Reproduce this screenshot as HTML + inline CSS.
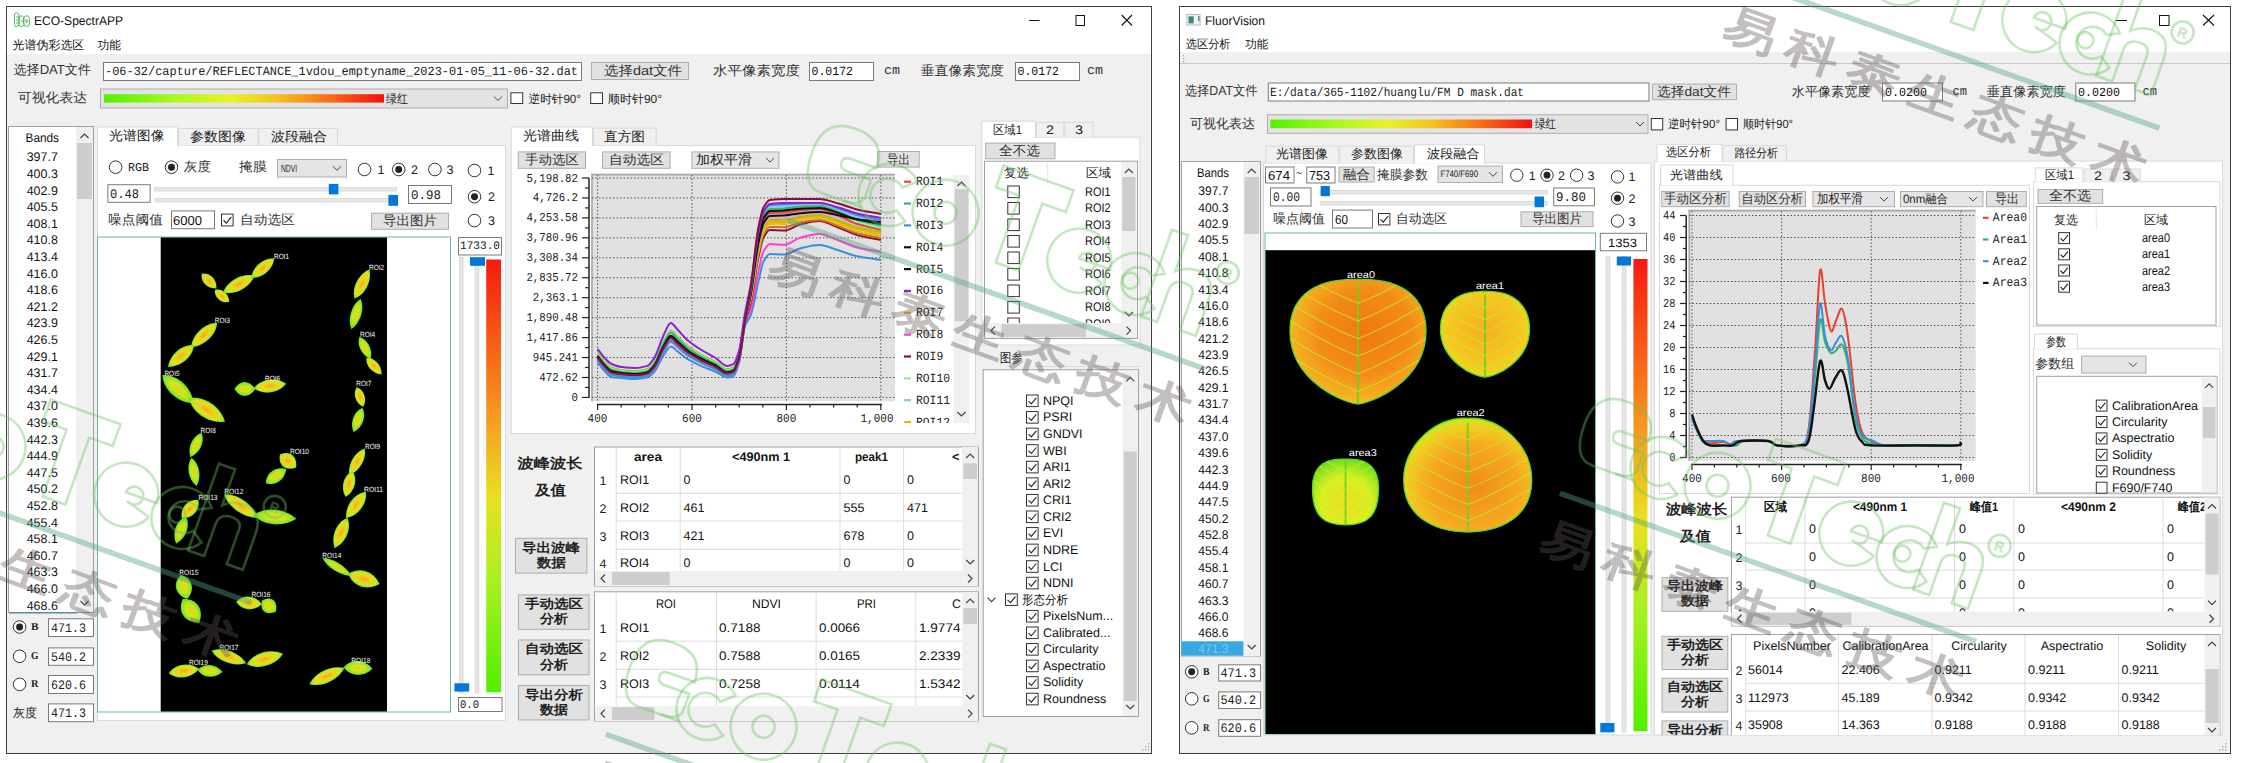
<!DOCTYPE html><html><head><meta charset="utf-8"><style>html,body{margin:0;padding:0;background:#fff;overflow:hidden}svg{display:block}</style></head><body>
<svg width="2245" height="763" viewBox="0 0 2245 763" style="font-family:'Liberation Sans',sans-serif" text-rendering="geometricPrecision">
<defs>
<linearGradient id="gh" x1="0" x2="1" y1="0" y2="0">
 <stop offset="0" stop-color="#55f000"/><stop offset="0.25" stop-color="#a8f820"/><stop offset="0.45" stop-color="#e8f22a"/>
 <stop offset="0.62" stop-color="#f5c020"/><stop offset="0.8" stop-color="#f87018"/><stop offset="1" stop-color="#f01010"/></linearGradient>
<linearGradient id="gv" x1="0" x2="0" y1="0" y2="1">
 <stop offset="0" stop-color="#f51a10"/><stop offset="0.2" stop-color="#f86018"/><stop offset="0.38" stop-color="#f5a020"/>
 <stop offset="0.55" stop-color="#e8e020"/><stop offset="0.75" stop-color="#a8f020"/><stop offset="1" stop-color="#50f000"/></linearGradient>
<radialGradient id="leafa" cx="0.5" cy="0.5" r="0.5">
 <stop offset="0" stop-color="#f2a820"/><stop offset="0.4" stop-color="#f2d020"/><stop offset="0.75" stop-color="#cce820"/><stop offset="1" stop-color="#60dc20"/></radialGradient>
<radialGradient id="leafb" cx="0.5" cy="0.5" r="0.5">
 <stop offset="0" stop-color="#eecc20"/><stop offset="0.45" stop-color="#c8e820"/><stop offset="0.8" stop-color="#90e420"/><stop offset="1" stop-color="#50d820"/></radialGradient>
<radialGradient id="lr0" cx="0.55" cy="0.42" r="0.62">
 <stop offset="0" stop-color="#f07810"/><stop offset="0.55" stop-color="#f28c18"/><stop offset="0.85" stop-color="#f5b020"/><stop offset="1" stop-color="#e8d820"/></radialGradient>
<radialGradient id="lr1" cx="0.5" cy="0.45" r="0.6">
 <stop offset="0" stop-color="#f5b020"/><stop offset="0.7" stop-color="#f5c820"/><stop offset="1" stop-color="#e0e820"/></radialGradient>
<radialGradient id="lr2" cx="0.55" cy="0.6" r="0.6">
 <stop offset="0" stop-color="#f08c18"/><stop offset="0.6" stop-color="#f5a820"/><stop offset="0.9" stop-color="#f0d020"/><stop offset="1" stop-color="#c8e820"/></radialGradient>
<radialGradient id="lr3" cx="0.5" cy="0.65" r="0.65">
 <stop offset="0" stop-color="#f0e020"/><stop offset="0.6" stop-color="#d8f020"/><stop offset="1" stop-color="#70e020"/></radialGradient>
<clipPath id="clipL"><rect x="160.7" y="237.5" width="226.3" height="474"/></clipPath>
<clipPath id="clipC"><rect x="592.5" y="175.5" width="302" height="225.5"/></clipPath>
<clipPath id="clipLeg"><rect x="900" y="170" width="52" height="253"/></clipPath>
<clipPath id="clipT1"><rect x="595" y="447" width="367" height="124"/></clipPath>
<clipPath id="clipRT"><rect x="985" y="183" width="136" height="140"/></clipPath>
<clipPath id="clipR"><rect x="1265.5" y="250.2" width="329.5" height="483.8"/></clipPath>
<clipPath id="clipC2"><rect x="1689" y="210.5" width="286.8" height="250.3"/></clipPath>
<clipPath id="clipT3"><rect x="1731.5" y="497.5" width="473" height="114"/></clipPath>
<clipPath id="clipT4"><rect x="1731.5" y="634.5" width="473" height="100.7"/></clipPath>
<clipPath id="clipRW"><rect x="1654" y="160" width="570" height="575.2"/></clipPath>
</defs>
<rect x="0" y="0" width="2245" height="763" fill="#fff"/>
<rect x="6" y="6" width="1146" height="748" fill="#f0f0f0"/>
<rect x="6" y="6" width="1146" height="48" fill="#fff"/>
<rect x="6.5" y="6.5" width="1145" height="747" fill="none" stroke="#3f3f3f" stroke-width="1"/>
<g fill="none" stroke="#55b860" stroke-width="1">
<rect x="14.5" y="13" width="4.3" height="13.6" rx="2.1"/>
<path d="M16 17 L18.5 17 M16 20 L18.5 20 M16 23 L18.5 23"/>
<rect x="19.2" y="15.8" width="4.3" height="10.8" rx="2.1"/>
<path d="M21 21 L23.5 21"/>
<rect x="24" y="15.8" width="5.4" height="10.8" rx="2.6"/>
<rect x="26" y="19.5" width="1.4" height="3" rx="0.7"/>
</g>
<text x="34" y="20.5" font-size="12.5" font-family="'Liberation Sans',sans-serif" fill="#111" dominant-baseline="central" textLength="89" lengthAdjust="spacingAndGlyphs">ECO-SpectrAPP</text>
<line x1="1029" y1="20.5" x2="1039.5" y2="20.5" stroke="#111" stroke-width="1"/>
<rect x="1076" y="15.5" width="8.5" height="10" fill="none" stroke="#111" stroke-width="1"/>
<line x1="1121.7" y1="15" x2="1132" y2="25.5" stroke="#111" stroke-width="1.1"/>
<line x1="1121.7" y1="25.5" x2="1132" y2="15" stroke="#111" stroke-width="1.1"/>
<text x="12.6" y="44.7" font-size="12" font-family="'Liberation Sans',sans-serif" fill="#111" dominant-baseline="central" textLength="71.7" lengthAdjust="spacingAndGlyphs">光谱伪彩选区</text>
<text x="97.5" y="44.7" font-size="12" font-family="'Liberation Sans',sans-serif" fill="#111" dominant-baseline="central" textLength="23.5" lengthAdjust="spacingAndGlyphs">功能</text>
<text x="13.5" y="69.7" font-size="13.16" font-family="'Liberation Sans',sans-serif" fill="#333" dominant-baseline="central" textLength="77.5" lengthAdjust="spacingAndGlyphs">选择DAT文件</text>
<rect x="103.5" y="62.5" width="478" height="18" fill="#fff" stroke="#7a7a7a" stroke-width="1"/>
<text x="105" y="72" font-size="12.5" font-family="'Liberation Mono',monospace" fill="#222" dominant-baseline="central" textLength="473" lengthAdjust="spacingAndGlyphs">-06-32/capture/REFLECTANCE_1vdou_emptyname_2023-01-05_11-06-32.dat</text>
<rect x="591.5" y="62.5" width="97" height="17" fill="#e1e1e1" stroke="#adadad" stroke-width="1"/>
<text x="604" y="70.7" font-size="13.16" font-family="'Liberation Sans',sans-serif" fill="#333" dominant-baseline="central" textLength="78" lengthAdjust="spacingAndGlyphs">选择dat文件</text>
<text x="713" y="70.7" font-size="13.16" font-family="'Liberation Sans',sans-serif" fill="#333" dominant-baseline="central" textLength="87" lengthAdjust="spacingAndGlyphs">水平像素宽度</text>
<rect x="809.5" y="62.5" width="64" height="18" fill="#fff" stroke="#7a7a7a" stroke-width="1"/>
<text x="811.5" y="72" font-size="12.5" font-family="'Liberation Mono',monospace" fill="#111" dominant-baseline="central" textLength="41.5" lengthAdjust="spacingAndGlyphs">0.0172</text>
<text x="884" y="70.5" font-size="13" font-family="'Liberation Mono',monospace" fill="#333" dominant-baseline="central" textLength="16" lengthAdjust="spacingAndGlyphs">cm</text>
<text x="920.7" y="70.7" font-size="13.16" font-family="'Liberation Sans',sans-serif" fill="#333" dominant-baseline="central" textLength="83.3" lengthAdjust="spacingAndGlyphs">垂直像素宽度</text>
<rect x="1015.5" y="62.5" width="64" height="18" fill="#fff" stroke="#7a7a7a" stroke-width="1"/>
<text x="1017.5" y="72" font-size="12.5" font-family="'Liberation Mono',monospace" fill="#111" dominant-baseline="central" textLength="41.5" lengthAdjust="spacingAndGlyphs">0.0172</text>
<text x="1087" y="70.5" font-size="13" font-family="'Liberation Mono',monospace" fill="#333" dominant-baseline="central" textLength="16" lengthAdjust="spacingAndGlyphs">cm</text>
<text x="17.8" y="97.7" font-size="13.16" font-family="'Liberation Sans',sans-serif" fill="#333" dominant-baseline="central" textLength="69.4" lengthAdjust="spacingAndGlyphs">可视化表达</text>
<rect x="100.5" y="89" width="407" height="19" fill="#e3e3e3" stroke="#adadad" stroke-width="1"/>
<rect x="104" y="94.2" width="280" height="8.4" fill="url(#gh)"/>
<text x="386" y="98.5" font-size="12.5" font-family="'Liberation Sans',sans-serif" fill="#222" dominant-baseline="central" textLength="22" lengthAdjust="spacingAndGlyphs">绿红</text>
<path d="M494 96.5 L498 100.5 L502 96.5" fill="none" stroke="#444" stroke-width="1"/>
<rect x="510.9" y="92.8" width="11.8" height="10.7" fill="#fff" stroke="#333" stroke-width="1"/>
<text x="528.5" y="98.5" font-size="12" font-family="'Liberation Sans',sans-serif" fill="#222" dominant-baseline="central" textLength="52.5" lengthAdjust="spacingAndGlyphs">逆时针90°</text>
<rect x="590.7" y="92.8" width="11.8" height="10.7" fill="#fff" stroke="#333" stroke-width="1"/>
<text x="608" y="98.5" font-size="12" font-family="'Liberation Sans',sans-serif" fill="#222" dominant-baseline="central" textLength="54" lengthAdjust="spacingAndGlyphs">顺时针90°</text>
<rect x="8.5" y="126.5" width="85" height="486" fill="#fff" stroke="#a0a0a0" stroke-width="1"/>
<line x1="9" y1="612.8" x2="77" y2="612.8" stroke="#5a8aa8" stroke-width="1.4"/>
<rect x="76" y="127" width="17" height="485" fill="#f0f0f0"/>
<rect x="77" y="143" width="15" height="56" fill="#cdcdcd"/>
<path d="M80.5 138 L84.5 134 L88.5 138" fill="none" stroke="#444" stroke-width="1.2"/>
<path d="M80.5 601 L84.5 605 L88.5 601" fill="none" stroke="#444" stroke-width="1.2"/>
<text x="25.5" y="138.4" font-size="12.5" font-family="'Liberation Sans',sans-serif" fill="#111" dominant-baseline="central" textLength="33.5" lengthAdjust="spacingAndGlyphs">Bands</text>
<text x="26.7" y="157.3" font-size="12.5" font-family="'Liberation Sans',sans-serif" fill="#111" dominant-baseline="central" textLength="31.1" lengthAdjust="spacingAndGlyphs">397.7</text>
<text x="26.7" y="173.9" font-size="12.5" font-family="'Liberation Sans',sans-serif" fill="#111" dominant-baseline="central" textLength="31.1" lengthAdjust="spacingAndGlyphs">400.3</text>
<text x="26.7" y="190.5" font-size="12.5" font-family="'Liberation Sans',sans-serif" fill="#111" dominant-baseline="central" textLength="31.1" lengthAdjust="spacingAndGlyphs">402.9</text>
<text x="26.7" y="207.1" font-size="12.5" font-family="'Liberation Sans',sans-serif" fill="#111" dominant-baseline="central" textLength="31.1" lengthAdjust="spacingAndGlyphs">405.5</text>
<text x="26.7" y="223.7" font-size="12.5" font-family="'Liberation Sans',sans-serif" fill="#111" dominant-baseline="central" textLength="31.1" lengthAdjust="spacingAndGlyphs">408.1</text>
<text x="26.7" y="240.3" font-size="12.5" font-family="'Liberation Sans',sans-serif" fill="#111" dominant-baseline="central" textLength="31.1" lengthAdjust="spacingAndGlyphs">410.8</text>
<text x="26.7" y="256.9" font-size="12.5" font-family="'Liberation Sans',sans-serif" fill="#111" dominant-baseline="central" textLength="31.1" lengthAdjust="spacingAndGlyphs">413.4</text>
<text x="26.7" y="273.5" font-size="12.5" font-family="'Liberation Sans',sans-serif" fill="#111" dominant-baseline="central" textLength="31.1" lengthAdjust="spacingAndGlyphs">416.0</text>
<text x="26.7" y="290.1" font-size="12.5" font-family="'Liberation Sans',sans-serif" fill="#111" dominant-baseline="central" textLength="31.1" lengthAdjust="spacingAndGlyphs">418.6</text>
<text x="26.7" y="306.7" font-size="12.5" font-family="'Liberation Sans',sans-serif" fill="#111" dominant-baseline="central" textLength="31.1" lengthAdjust="spacingAndGlyphs">421.2</text>
<text x="26.7" y="323.3" font-size="12.5" font-family="'Liberation Sans',sans-serif" fill="#111" dominant-baseline="central" textLength="31.1" lengthAdjust="spacingAndGlyphs">423.9</text>
<text x="26.7" y="339.9" font-size="12.5" font-family="'Liberation Sans',sans-serif" fill="#111" dominant-baseline="central" textLength="31.1" lengthAdjust="spacingAndGlyphs">426.5</text>
<text x="26.7" y="356.5" font-size="12.5" font-family="'Liberation Sans',sans-serif" fill="#111" dominant-baseline="central" textLength="31.1" lengthAdjust="spacingAndGlyphs">429.1</text>
<text x="26.7" y="373.1" font-size="12.5" font-family="'Liberation Sans',sans-serif" fill="#111" dominant-baseline="central" textLength="31.1" lengthAdjust="spacingAndGlyphs">431.7</text>
<text x="26.7" y="389.7" font-size="12.5" font-family="'Liberation Sans',sans-serif" fill="#111" dominant-baseline="central" textLength="31.1" lengthAdjust="spacingAndGlyphs">434.4</text>
<text x="26.7" y="406.3" font-size="12.5" font-family="'Liberation Sans',sans-serif" fill="#111" dominant-baseline="central" textLength="31.1" lengthAdjust="spacingAndGlyphs">437.0</text>
<text x="26.7" y="422.9" font-size="12.5" font-family="'Liberation Sans',sans-serif" fill="#111" dominant-baseline="central" textLength="31.1" lengthAdjust="spacingAndGlyphs">439.6</text>
<text x="26.7" y="439.5" font-size="12.5" font-family="'Liberation Sans',sans-serif" fill="#111" dominant-baseline="central" textLength="31.1" lengthAdjust="spacingAndGlyphs">442.3</text>
<text x="26.7" y="456.1" font-size="12.5" font-family="'Liberation Sans',sans-serif" fill="#111" dominant-baseline="central" textLength="31.1" lengthAdjust="spacingAndGlyphs">444.9</text>
<text x="26.7" y="472.7" font-size="12.5" font-family="'Liberation Sans',sans-serif" fill="#111" dominant-baseline="central" textLength="31.1" lengthAdjust="spacingAndGlyphs">447.5</text>
<text x="26.7" y="489.3" font-size="12.5" font-family="'Liberation Sans',sans-serif" fill="#111" dominant-baseline="central" textLength="31.1" lengthAdjust="spacingAndGlyphs">450.2</text>
<text x="26.7" y="505.9" font-size="12.5" font-family="'Liberation Sans',sans-serif" fill="#111" dominant-baseline="central" textLength="31.1" lengthAdjust="spacingAndGlyphs">452.8</text>
<text x="26.7" y="522.5" font-size="12.5" font-family="'Liberation Sans',sans-serif" fill="#111" dominant-baseline="central" textLength="31.1" lengthAdjust="spacingAndGlyphs">455.4</text>
<text x="26.7" y="539.1" font-size="12.5" font-family="'Liberation Sans',sans-serif" fill="#111" dominant-baseline="central" textLength="31.1" lengthAdjust="spacingAndGlyphs">458.1</text>
<text x="26.7" y="555.7" font-size="12.5" font-family="'Liberation Sans',sans-serif" fill="#111" dominant-baseline="central" textLength="31.1" lengthAdjust="spacingAndGlyphs">460.7</text>
<text x="26.7" y="572.3" font-size="12.5" font-family="'Liberation Sans',sans-serif" fill="#111" dominant-baseline="central" textLength="31.1" lengthAdjust="spacingAndGlyphs">463.3</text>
<text x="26.7" y="588.9" font-size="12.5" font-family="'Liberation Sans',sans-serif" fill="#111" dominant-baseline="central" textLength="31.1" lengthAdjust="spacingAndGlyphs">466.0</text>
<text x="26.7" y="605.5" font-size="12.5" font-family="'Liberation Sans',sans-serif" fill="#111" dominant-baseline="central" textLength="31.1" lengthAdjust="spacingAndGlyphs">468.6</text>
<circle cx="19.6" cy="627" r="6.3" fill="#fff" stroke="#333" stroke-width="1"/>
<circle cx="19.6" cy="627" r="3.47" fill="#222"/>
<text x="31" y="627.5" font-size="10.5" font-family="'Liberation Serif',serif" fill="#222" dominant-baseline="central" font-weight="bold" textLength="7.5" lengthAdjust="spacingAndGlyphs">B</text>
<rect x="48.5" y="618.8" width="45" height="17.7" fill="#fff" stroke="#7a7a7a" stroke-width="1"/>
<text x="51" y="628.15" font-size="13" font-family="'Liberation Mono',monospace" fill="#222" dominant-baseline="central" textLength="35" lengthAdjust="spacingAndGlyphs">471.3</text>
<circle cx="19.6" cy="656.3" r="6.3" fill="#fff" stroke="#333" stroke-width="1"/>
<text x="31" y="656.8" font-size="10.5" font-family="'Liberation Serif',serif" fill="#222" dominant-baseline="central" font-weight="bold" textLength="7.5" lengthAdjust="spacingAndGlyphs">G</text>
<rect x="48.5" y="647.9" width="45" height="17.4" fill="#fff" stroke="#7a7a7a" stroke-width="1"/>
<text x="51" y="657.1" font-size="13" font-family="'Liberation Mono',monospace" fill="#222" dominant-baseline="central" textLength="35" lengthAdjust="spacingAndGlyphs">540.2</text>
<circle cx="19.6" cy="684.4" r="6.3" fill="#fff" stroke="#333" stroke-width="1"/>
<text x="31" y="684.9" font-size="10.5" font-family="'Liberation Serif',serif" fill="#222" dominant-baseline="central" font-weight="bold" textLength="7.5" lengthAdjust="spacingAndGlyphs">R</text>
<rect x="48.5" y="675.5" width="45" height="18" fill="#fff" stroke="#7a7a7a" stroke-width="1"/>
<text x="51" y="685" font-size="13" font-family="'Liberation Mono',monospace" fill="#222" dominant-baseline="central" textLength="35" lengthAdjust="spacingAndGlyphs">620.6</text>
<text x="13" y="712.7" font-size="12.5" font-family="'Liberation Sans',sans-serif" fill="#222" dominant-baseline="central" textLength="24" lengthAdjust="spacingAndGlyphs">灰度</text>
<rect x="48.5" y="703.9" width="45" height="17.8" fill="#fff" stroke="#7a7a7a" stroke-width="1"/>
<text x="51" y="713.3" font-size="13" font-family="'Liberation Mono',monospace" fill="#222" dominant-baseline="central" textLength="35" lengthAdjust="spacingAndGlyphs">471.3</text>
<rect x="97.5" y="145.5" width="408" height="575" fill="#fff" stroke="#d9d9d9" stroke-width="1"/>
<path d="M178.5 145.5 L178.5 128.5 L258 128.5 L258 145.5" fill="#f0f0f0" stroke="#d9d9d9" stroke-width="1"/>
<text x="190" y="136.45" font-size="13.16" font-family="'Liberation Sans',sans-serif" fill="#222" dominant-baseline="central" textLength="56" lengthAdjust="spacingAndGlyphs">参数图像</text>
<path d="M259 145.5 L259 128.5 L337.5 128.5 L337.5 145.5" fill="#f0f0f0" stroke="#d9d9d9" stroke-width="1"/>
<text x="271" y="136.45" font-size="13.16" font-family="'Liberation Sans',sans-serif" fill="#222" dominant-baseline="central" textLength="56" lengthAdjust="spacingAndGlyphs">波段融合</text>
<path d="M97.5 146 L97.5 127 L177.5 127 L177.5 146" fill="#fff" stroke="#d9d9d9" stroke-width="1"/>
<text x="109" y="135.95" font-size="13.16" font-family="'Liberation Sans',sans-serif" fill="#222" dominant-baseline="central" textLength="55.5" lengthAdjust="spacingAndGlyphs">光谱图像</text>
<circle cx="115.6" cy="167.2" r="6.3" fill="#fff" stroke="#333" stroke-width="1"/>
<text x="128" y="167.5" font-size="12" font-family="'Liberation Mono',monospace" fill="#222" dominant-baseline="central" textLength="21" lengthAdjust="spacingAndGlyphs">RGB</text>
<circle cx="171.5" cy="167.2" r="6.3" fill="#fff" stroke="#333" stroke-width="1"/>
<circle cx="171.5" cy="167.2" r="3.47" fill="#222"/>
<text x="184" y="166.7" font-size="13.16" font-family="'Liberation Sans',sans-serif" fill="#333" dominant-baseline="central" textLength="27" lengthAdjust="spacingAndGlyphs">灰度</text>
<text x="239" y="166.5" font-size="13.16" font-family="'Liberation Sans',sans-serif" fill="#333" dominant-baseline="central" textLength="28" lengthAdjust="spacingAndGlyphs">掩膜</text>
<rect x="277.5" y="159.5" width="69" height="17.5" fill="#e5e5e5" stroke="#adadad" stroke-width="1"/>
<text x="281" y="168.75" font-size="10.5" font-family="'Liberation Sans',sans-serif" fill="#222" dominant-baseline="central" textLength="16" lengthAdjust="spacingAndGlyphs">NDVI</text>
<path d="M333 166.25 L337 170.25 L341 166.25" fill="none" stroke="#444" stroke-width="1"/>
<circle cx="364.5" cy="169.5" r="6.3" fill="#fff" stroke="#333" stroke-width="1"/>
<text x="377.5" y="170" font-size="12.5" font-family="'Liberation Sans',sans-serif" fill="#222" dominant-baseline="central">1</text>
<circle cx="398.7" cy="169.5" r="6.3" fill="#fff" stroke="#333" stroke-width="1"/>
<circle cx="398.7" cy="169.5" r="3.47" fill="#222"/>
<text x="411" y="170" font-size="12.5" font-family="'Liberation Sans',sans-serif" fill="#222" dominant-baseline="central">2</text>
<circle cx="434.9" cy="169.5" r="6.3" fill="#fff" stroke="#333" stroke-width="1"/>
<text x="446.6" y="170" font-size="12.5" font-family="'Liberation Sans',sans-serif" fill="#222" dominant-baseline="central">3</text>
<circle cx="474.5" cy="170.5" r="6.3" fill="#fff" stroke="#333" stroke-width="1"/>
<text x="487.5" y="171" font-size="12.5" font-family="'Liberation Sans',sans-serif" fill="#222" dominant-baseline="central">1</text>
<circle cx="474.5" cy="196.7" r="6.3" fill="#fff" stroke="#333" stroke-width="1"/>
<circle cx="474.5" cy="196.7" r="3.47" fill="#222"/>
<text x="488" y="197" font-size="12.5" font-family="'Liberation Sans',sans-serif" fill="#222" dominant-baseline="central">2</text>
<circle cx="474.5" cy="220.6" r="6.3" fill="#fff" stroke="#333" stroke-width="1"/>
<text x="488" y="221" font-size="12.5" font-family="'Liberation Sans',sans-serif" fill="#222" dominant-baseline="central">3</text>
<rect x="107.9" y="184.7" width="42.2" height="17.6" fill="#fff" stroke="#7a7a7a" stroke-width="1"/>
<text x="110" y="194" font-size="13" font-family="'Liberation Mono',monospace" fill="#222" dominant-baseline="central" textLength="29" lengthAdjust="spacingAndGlyphs">0.48</text>
<rect x="154.5" y="187.5" width="242" height="3.5" fill="#e7e7e7" stroke="#dadada" stroke-width="1"/>
<rect x="328.8" y="183.9" width="9.6" height="10.5" fill="#0078d7"/>
<rect x="155.5" y="198.5" width="241" height="3.5" fill="#e7e7e7" stroke="#dadada" stroke-width="1"/>
<rect x="388.4" y="194.9" width="9.6" height="10.9" fill="#0078d7"/>
<rect x="408.5" y="185.5" width="43" height="18" fill="#fff" stroke="#7a7a7a" stroke-width="1"/>
<text x="411" y="195" font-size="13" font-family="'Liberation Mono',monospace" fill="#222" dominant-baseline="central" textLength="30" lengthAdjust="spacingAndGlyphs">0.98</text>
<text x="108" y="219.5" font-size="13.16" font-family="'Liberation Sans',sans-serif" fill="#333" dominant-baseline="central" textLength="55" lengthAdjust="spacingAndGlyphs">噪点阈值</text>
<rect x="171.5" y="210.9" width="43" height="17.8" fill="#fff" stroke="#7a7a7a" stroke-width="1"/>
<text x="173" y="220.3" font-size="13" font-family="'Liberation Sans',sans-serif" fill="#111" dominant-baseline="central" textLength="29" lengthAdjust="spacingAndGlyphs">6000</text>
<rect x="221.5" y="214.1" width="11.6" height="11.8" fill="#fff" stroke="#333" stroke-width="1"/>
<path d="M223.52 220.26 L226.29 223.07 L231.33 216.93" fill="none" stroke="#222" stroke-width="1.1"/>
<text x="240" y="219.5" font-size="13.16" font-family="'Liberation Sans',sans-serif" fill="#333" dominant-baseline="central" textLength="55" lengthAdjust="spacingAndGlyphs">自动选区</text>
<rect x="371.5" y="213.2" width="77" height="16.1" fill="#e1e1e1" stroke="#adadad" stroke-width="1"/>
<text x="383" y="220.7" font-size="13.16" font-family="'Liberation Sans',sans-serif" fill="#333" dominant-baseline="central" textLength="54" lengthAdjust="spacingAndGlyphs">导出图片</text>
<rect x="97.5" y="237" width="353" height="475" fill="#fff" stroke="#66b8a8" stroke-width="1"/>
<rect x="160.7" y="237.5" width="226.3" height="474" fill="#000"/>
<g clip-path="url(#clipL)">
<path transform="translate(209 281) rotate(45)" d="M-10.5 0 C-5.25 -7 4.2 -7.2 10.5 0 C4.2 7.2 -5.25 7 -10.5 0Z" fill="url(#leafa)"/>
<path transform="translate(222 296) rotate(40)" d="M-9.5 0 C-4.75 -6.3 3.8 -6.48 9.5 0 C3.8 6.48 -4.75 6.3 -9.5 0Z" fill="url(#leafa)"/>
<path transform="translate(239 284) rotate(-28)" d="M-18 0 C-9 -8.4 7.2 -8.64 18 0 C7.2 8.64 -9 8.4 -18 0Z" fill="url(#leafa)"/>
<path transform="translate(263 268) rotate(-40)" d="M-15 0 C-7.5 -7.7 6 -7.92 15 0 C6 7.92 -7.5 7.7 -15 0Z" fill="url(#leafa)"/>
<path transform="translate(362 284) rotate(-63)" d="M-16.5 0 C-8.25 -7.7 6.6 -7.92 16.5 0 C6.6 7.92 -8.25 7.7 -16.5 0Z" fill="url(#leafa)"/>
<path transform="translate(356 314) rotate(107)" d="M-16 0 C-8 -7 6.4 -7.2 16 0 C6.4 7.2 -8 7 -16 0Z" fill="url(#leafb)"/>
<path transform="translate(204 335) rotate(137)" d="M-18 0 C-9 -8.4 7.2 -8.64 18 0 C7.2 8.64 -9 8.4 -18 0Z" fill="url(#leafa)"/>
<path transform="translate(181 356) rotate(140)" d="M-17 0 C-8.5 -8.4 6.8 -8.64 17 0 C6.8 8.64 -8.5 8.4 -17 0Z" fill="url(#leafa)"/>
<path transform="translate(365 348) rotate(63)" d="M-12.5 0 C-6.25 -6.3 5 -6.48 12.5 0 C5 6.48 -6.25 6.3 -12.5 0Z" fill="url(#leafb)"/>
<path transform="translate(374 366) rotate(48)" d="M-11.5 0 C-5.75 -6.3 4.6 -6.48 11.5 0 C4.6 6.48 -5.75 6.3 -11.5 0Z" fill="url(#leafa)"/>
<path transform="translate(178 389) rotate(42)" d="M-21 0 C-10.5 -10.5 8.4 -10.8 21 0 C8.4 10.8 -10.5 10.5 -21 0Z" fill="url(#leafb)"/>
<path transform="translate(207 410) rotate(33)" d="M-21.5 0 C-10.75 -10.5 8.6 -10.8 21.5 0 C8.6 10.8 -10.75 10.5 -21.5 0Z" fill="url(#leafa)"/>
<path transform="translate(245 389) rotate(0)" d="M-10.5 0 C-5.25 -9.1 4.2 -9.36 10.5 0 C4.2 9.36 -5.25 9.1 -10.5 0Z" fill="url(#leafb)"/>
<path transform="translate(270 386) rotate(-8)" d="M-16.5 0 C-8.25 -8.4 6.6 -8.64 16.5 0 C6.6 8.64 -8.25 8.4 -16.5 0Z" fill="url(#leafa)"/>
<path transform="translate(360 397) rotate(72)" d="M-10.5 0 C-5.25 -6.3 4.2 -6.48 10.5 0 C4.2 6.48 -5.25 6.3 -10.5 0Z" fill="url(#leafa)"/>
<path transform="translate(358 420) rotate(110)" d="M-13 0 C-6.5 -7 5.2 -7.2 13 0 C5.2 7.2 -6.5 7 -13 0Z" fill="url(#leafb)"/>
<path transform="translate(196 445) rotate(115)" d="M-13.5 0 C-6.75 -7 5.4 -7.2 13.5 0 C5.4 7.2 -6.75 7 -13.5 0Z" fill="url(#leafb)"/>
<path transform="translate(194 472) rotate(80)" d="M-14.5 0 C-7.25 -7 5.8 -7.2 14.5 0 C5.8 7.2 -7.25 7 -14.5 0Z" fill="url(#leafb)"/>
<path transform="translate(288 461) rotate(40)" d="M-10.5 0 C-5.25 -9.8 4.2 -10.08 10.5 0 C4.2 10.08 -5.25 9.8 -10.5 0Z" fill="url(#leafa)"/>
<path transform="translate(276 476) rotate(-35)" d="M-12.5 0 C-6.25 -8.4 5 -8.64 12.5 0 C5 8.64 -6.25 8.4 -12.5 0Z" fill="url(#leafb)"/>
<path transform="translate(357 462) rotate(120)" d="M-15.5 0 C-7.75 -7 6.2 -7.2 15.5 0 C6.2 7.2 -7.75 7 -15.5 0Z" fill="url(#leafa)"/>
<path transform="translate(349 484) rotate(105)" d="M-13.5 0 C-6.75 -7.7 5.4 -7.92 13.5 0 C5.4 7.92 -6.75 7.7 -13.5 0Z" fill="url(#leafa)"/>
<path transform="translate(356 505) rotate(127)" d="M-16.5 0 C-8.25 -8.4 6.6 -8.64 16.5 0 C6.6 8.64 -8.25 8.4 -16.5 0Z" fill="url(#leafa)"/>
<path transform="translate(341 533) rotate(113)" d="M-16.5 0 C-8.25 -8.4 6.6 -8.64 16.5 0 C6.6 8.64 -8.25 8.4 -16.5 0Z" fill="url(#leafa)"/>
<path transform="translate(241 506) rotate(35)" d="M-20.5 0 C-10.25 -8.4 8.2 -8.64 20.5 0 C8.2 8.64 -10.25 8.4 -20.5 0Z" fill="url(#leafa)"/>
<path transform="translate(275 517) rotate(5)" d="M-21.5 0 C-10.75 -9.8 8.6 -10.08 21.5 0 C8.6 10.08 -10.75 9.8 -21.5 0Z" fill="url(#leafb)"/>
<path transform="translate(190 509) rotate(132)" d="M-12.5 0 C-6.25 -8.4 5 -8.64 12.5 0 C5 8.64 -6.25 8.4 -12.5 0Z" fill="url(#leafa)"/>
<path transform="translate(181 530) rotate(110)" d="M-14.5 0 C-7.25 -7.7 5.8 -7.92 14.5 0 C5.8 7.92 -7.25 7.7 -14.5 0Z" fill="url(#leafb)"/>
<path transform="translate(337 567) rotate(32)" d="M-17 0 C-8.5 -5.6 6.8 -5.76 17 0 C6.8 5.76 -8.5 5.6 -17 0Z" fill="url(#leafb)"/>
<path transform="translate(364 579) rotate(18)" d="M-16.5 0 C-8.25 -10.5 6.6 -10.8 16.5 0 C6.6 10.8 -8.25 10.5 -16.5 0Z" fill="url(#leafa)"/>
<path transform="translate(184 587) rotate(75)" d="M-12.5 0 C-6.25 -10.5 5 -10.8 12.5 0 C5 10.8 -6.25 10.5 -12.5 0Z" fill="url(#leafb)"/>
<path transform="translate(191 611) rotate(55)" d="M-14.5 0 C-7.25 -11.9 5.8 -12.24 14.5 0 C5.8 12.24 -7.25 11.9 -14.5 0Z" fill="url(#leafb)"/>
<path transform="translate(249 603) rotate(5)" d="M-13 0 C-6.5 -8.4 5.2 -8.64 13 0 C5.2 8.64 -6.5 8.4 -13 0Z" fill="url(#leafa)"/>
<path transform="translate(269 606) rotate(40)" d="M-9 0 C-4.5 -9.8 3.6 -10.08 9 0 C3.6 10.08 -4.5 9.8 -9 0Z" fill="url(#leafb)"/>
<path transform="translate(229 657) rotate(20)" d="M-18.5 0 C-9.25 -7.7 7.4 -7.92 18.5 0 C7.4 7.92 -9.25 7.7 -18.5 0Z" fill="url(#leafa)"/>
<path transform="translate(265 659) rotate(-16)" d="M-19 0 C-9.5 -9.1 7.6 -9.36 19 0 C7.6 9.36 -9.5 9.1 -19 0Z" fill="url(#leafa)"/>
<path transform="translate(327 676) rotate(-25)" d="M-19.5 0 C-9.75 -8.4 7.8 -8.64 19.5 0 C7.8 8.64 -9.75 8.4 -19.5 0Z" fill="url(#leafa)"/>
<path transform="translate(358 668) rotate(3)" d="M-14.5 0 C-7.25 -9.1 5.8 -9.36 14.5 0 C5.8 9.36 -7.25 9.1 -14.5 0Z" fill="url(#leafb)"/>
<path transform="translate(184 671) rotate(-8)" d="M-15.5 0 C-7.75 -8.4 6.2 -8.64 15.5 0 C6.2 8.64 -7.75 8.4 -15.5 0Z" fill="url(#leafa)"/>
<path transform="translate(210 671) rotate(5)" d="M-12.5 0 C-6.25 -7.7 5 -7.92 12.5 0 C5 7.92 -6.25 7.7 -12.5 0Z" fill="url(#leafb)"/>
<text x="274" y="256.4" font-size="7.5" font-family="'Liberation Sans',sans-serif" fill="#fff" dominant-baseline="central" textLength="15.2" lengthAdjust="spacingAndGlyphs">ROI1</text>
<text x="369" y="267.4" font-size="7.5" font-family="'Liberation Sans',sans-serif" fill="#fff" dominant-baseline="central" textLength="15.2" lengthAdjust="spacingAndGlyphs">ROI2</text>
<text x="214.8" y="320" font-size="7.5" font-family="'Liberation Sans',sans-serif" fill="#fff" dominant-baseline="central" textLength="15.2" lengthAdjust="spacingAndGlyphs">ROI3</text>
<text x="360" y="334" font-size="7.5" font-family="'Liberation Sans',sans-serif" fill="#fff" dominant-baseline="central" textLength="15.2" lengthAdjust="spacingAndGlyphs">ROI4</text>
<text x="164.4" y="373.4" font-size="7.5" font-family="'Liberation Sans',sans-serif" fill="#fff" dominant-baseline="central" textLength="15.2" lengthAdjust="spacingAndGlyphs">ROI5</text>
<text x="265" y="378" font-size="7.5" font-family="'Liberation Sans',sans-serif" fill="#fff" dominant-baseline="central" textLength="15.2" lengthAdjust="spacingAndGlyphs">ROI6</text>
<text x="356.3" y="383.5" font-size="7.5" font-family="'Liberation Sans',sans-serif" fill="#fff" dominant-baseline="central" textLength="15.2" lengthAdjust="spacingAndGlyphs">ROI7</text>
<text x="200.6" y="430.7" font-size="7.5" font-family="'Liberation Sans',sans-serif" fill="#fff" dominant-baseline="central" textLength="15.2" lengthAdjust="spacingAndGlyphs">ROI8</text>
<text x="365" y="446.4" font-size="7.5" font-family="'Liberation Sans',sans-serif" fill="#fff" dominant-baseline="central" textLength="15.2" lengthAdjust="spacingAndGlyphs">ROI9</text>
<text x="290" y="451.4" font-size="7.5" font-family="'Liberation Sans',sans-serif" fill="#fff" dominant-baseline="central" textLength="19" lengthAdjust="spacingAndGlyphs">ROI10</text>
<text x="364.1" y="489.3" font-size="7.5" font-family="'Liberation Sans',sans-serif" fill="#fff" dominant-baseline="central" textLength="19" lengthAdjust="spacingAndGlyphs">ROI11</text>
<text x="224.3" y="491.9" font-size="7.5" font-family="'Liberation Sans',sans-serif" fill="#fff" dominant-baseline="central" textLength="19" lengthAdjust="spacingAndGlyphs">ROI12</text>
<text x="198.5" y="497.3" font-size="7.5" font-family="'Liberation Sans',sans-serif" fill="#fff" dominant-baseline="central" textLength="19" lengthAdjust="spacingAndGlyphs">ROI13</text>
<text x="322.3" y="555.2" font-size="7.5" font-family="'Liberation Sans',sans-serif" fill="#fff" dominant-baseline="central" textLength="19" lengthAdjust="spacingAndGlyphs">ROI14</text>
<text x="179.3" y="572.9" font-size="7.5" font-family="'Liberation Sans',sans-serif" fill="#fff" dominant-baseline="central" textLength="19" lengthAdjust="spacingAndGlyphs">ROI15</text>
<text x="251.5" y="594.7" font-size="7.5" font-family="'Liberation Sans',sans-serif" fill="#fff" dominant-baseline="central" textLength="19" lengthAdjust="spacingAndGlyphs">ROI16</text>
<text x="219.5" y="647.5" font-size="7.5" font-family="'Liberation Sans',sans-serif" fill="#fff" dominant-baseline="central" textLength="19" lengthAdjust="spacingAndGlyphs">ROI17</text>
<text x="351.3" y="660.3" font-size="7.5" font-family="'Liberation Sans',sans-serif" fill="#fff" dominant-baseline="central" textLength="19" lengthAdjust="spacingAndGlyphs">ROI18</text>
<text x="188.9" y="662.9" font-size="7.5" font-family="'Liberation Sans',sans-serif" fill="#fff" dominant-baseline="central" textLength="19" lengthAdjust="spacingAndGlyphs">ROI19</text>
</g>
<rect x="458.5" y="237.5" width="43" height="17.5" fill="#fff" stroke="#7a7a7a" stroke-width="1"/>
<text x="460" y="246.75" font-size="11.5" font-family="'Liberation Mono',monospace" fill="#222" dominant-baseline="central" textLength="40" lengthAdjust="spacingAndGlyphs">1733.0</text>
<rect x="459.5" y="257.5" width="3.5" height="435.5" fill="#e6e6e6" stroke="#d8d8d8" stroke-width="1"/>
<rect x="475.3" y="257.5" width="3.5" height="435.5" fill="#e6e6e6" stroke="#d8d8d8" stroke-width="1"/>
<rect x="486.2" y="259.5" width="14.8" height="432.8" fill="url(#gv)"/>
<rect x="470" y="257.2" width="15" height="8.6" fill="#0078d7"/>
<rect x="454.4" y="683.3" width="14.8" height="8.3" fill="#0078d7"/>
<rect x="458.5" y="697.5" width="43.5" height="14" fill="#fff" stroke="#7a7a7a" stroke-width="1"/>
<text x="460" y="705" font-size="11.5" font-family="'Liberation Mono',monospace" fill="#222" dominant-baseline="central" textLength="19" lengthAdjust="spacingAndGlyphs">0.0</text>
<rect x="511.2" y="145.5" width="464.3" height="288" fill="#fff" stroke="#d9d9d9" stroke-width="1"/>
<path d="M593.5 145.5 L593.5 128.2 L656.1 128.2 L656.1 145.5" fill="#f0f0f0" stroke="#d9d9d9" stroke-width="1"/>
<text x="604" y="136.3" font-size="13.16" font-family="'Liberation Sans',sans-serif" fill="#222" dominant-baseline="central" textLength="41" lengthAdjust="spacingAndGlyphs">直方图</text>
<path d="M511.2 146 L511.2 127 L592.5 127 L592.5 146" fill="#fff" stroke="#d9d9d9" stroke-width="1"/>
<text x="523" y="135.95" font-size="13.16" font-family="'Liberation Sans',sans-serif" fill="#222" dominant-baseline="central" textLength="56" lengthAdjust="spacingAndGlyphs">光谱曲线</text>
<rect x="518.2" y="151.9" width="67.3" height="16.4" fill="#e1e1e1" stroke="#adadad" stroke-width="1"/>
<text x="525" y="159.7" font-size="13.16" font-family="'Liberation Sans',sans-serif" fill="#333" dominant-baseline="central" textLength="54" lengthAdjust="spacingAndGlyphs">手动选区</text>
<rect x="602.5" y="151.9" width="67.6" height="16.4" fill="#e1e1e1" stroke="#adadad" stroke-width="1"/>
<text x="609" y="159.7" font-size="13.16" font-family="'Liberation Sans',sans-serif" fill="#333" dominant-baseline="central" textLength="55" lengthAdjust="spacingAndGlyphs">自动选区</text>
<rect x="692" y="151.9" width="87" height="16.4" fill="#e5e5e5" stroke="#adadad" stroke-width="1"/>
<text x="696" y="159.8" font-size="13.16" font-family="'Liberation Sans',sans-serif" fill="#222" dominant-baseline="central" textLength="56" lengthAdjust="spacingAndGlyphs">加权平滑</text>
<path d="M766 158.1 L770 162.1 L774 158.1" fill="none" stroke="#444" stroke-width="1"/>
<rect x="877.8" y="151.5" width="41.4" height="15.6" fill="#e1e1e1" stroke="#adadad" stroke-width="1"/>
<text x="887" y="159.2" font-size="13.16" font-family="'Liberation Sans',sans-serif" fill="#333" dominant-baseline="central" textLength="23" lengthAdjust="spacingAndGlyphs">导出</text>
<rect x="591.3" y="173.8" width="303.7" height="227.5" fill="#e1e1e1"/>
<line x1="591.3" y1="174.6" x2="895" y2="174.6" stroke="#a8a8a8" stroke-width="1.6"/>
<line x1="592" y1="173.8" x2="592" y2="401.3" stroke="#a8a8a8" stroke-width="1.6"/>
<line x1="592" y1="178" x2="895" y2="178" stroke="#555" stroke-width="1" stroke-dasharray="1.5,2"/>
<line x1="592" y1="197.95" x2="895" y2="197.95" stroke="#555" stroke-width="1" stroke-dasharray="1.5,2"/>
<line x1="592" y1="217.9" x2="895" y2="217.9" stroke="#555" stroke-width="1" stroke-dasharray="1.5,2"/>
<line x1="592" y1="237.85" x2="895" y2="237.85" stroke="#555" stroke-width="1" stroke-dasharray="1.5,2"/>
<line x1="592" y1="257.8" x2="895" y2="257.8" stroke="#555" stroke-width="1" stroke-dasharray="1.5,2"/>
<line x1="592" y1="277.75" x2="895" y2="277.75" stroke="#555" stroke-width="1" stroke-dasharray="1.5,2"/>
<line x1="592" y1="297.7" x2="895" y2="297.7" stroke="#555" stroke-width="1" stroke-dasharray="1.5,2"/>
<line x1="592" y1="317.65" x2="895" y2="317.65" stroke="#555" stroke-width="1" stroke-dasharray="1.5,2"/>
<line x1="592" y1="337.6" x2="895" y2="337.6" stroke="#555" stroke-width="1" stroke-dasharray="1.5,2"/>
<line x1="592" y1="357.55" x2="895" y2="357.55" stroke="#555" stroke-width="1" stroke-dasharray="1.5,2"/>
<line x1="592" y1="377.5" x2="895" y2="377.5" stroke="#555" stroke-width="1" stroke-dasharray="1.5,2"/>
<line x1="592" y1="397.45" x2="895" y2="397.45" stroke="#555" stroke-width="1" stroke-dasharray="1.5,2"/>
<line x1="597.6" y1="175" x2="597.6" y2="401" stroke="#555" stroke-width="1" stroke-dasharray="1.5,2"/>
<line x1="692" y1="175" x2="692" y2="401" stroke="#555" stroke-width="1" stroke-dasharray="1.5,2"/>
<line x1="786.4" y1="175" x2="786.4" y2="401" stroke="#555" stroke-width="1" stroke-dasharray="1.5,2"/>
<line x1="880.8" y1="175" x2="880.8" y2="401" stroke="#555" stroke-width="1" stroke-dasharray="1.5,2"/>
<g clip-path="url(#clipC)" fill="none" stroke-linejoin="round">
<path d="M597.6 362.2 C599.96 365.2 602.32 368.83 604.68 371.2 C607.04 373.57 609.4 376.9 611.76 377.2 C614.91 377.6 618.05 377.76 621.2 378 C625.92 378.36 630.64 379 635.36 379 C639.29 379 643.23 378.27 647.16 377.56 C649.52 377.14 651.88 374.31 654.24 371.8 C657.39 368.45 660.53 359.72 663.68 355.24 C666.04 351.88 668.4 346.6 670.76 346.6 C673.12 346.6 675.48 349.9 677.84 351.64 C680.99 353.96 684.13 356.95 687.28 358.84 C692 361.68 696.72 363.92 701.44 366.04 C706.16 368.16 710.88 369.71 715.6 371.8 C719.53 373.54 723.47 377.56 727.4 377.56 C729.45 377.56 731.49 376.83 733.54 376.12 C735.42 375.46 737.31 368.43 739.2 362.12 C741.09 355.81 742.98 331.12 744.86 326.12 C746.91 320.71 748.95 319.7 751 314.56 C753.36 308.63 755.72 292.78 758.08 283 C759.97 275.17 761.86 264.03 763.74 261 C765.79 257.72 767.83 254 769.88 254 C774.6 254 779.32 254.6 784.04 254.6 C789.55 254.6 795.05 249.44 800.56 248.2 C806.85 246.79 813.15 245 819.44 245 C825.73 245 832.03 248.43 838.32 250.3 C844.61 252.17 850.91 255.03 857.2 256.3 C865.07 257.89 872.93 258.77 880.8 260" stroke="#3a8ee0" stroke-width="2"/>
<path d="M597.6 359.8 C599.96 362.8 602.32 366.43 604.68 368.8 C607.04 371.17 609.4 374.36 611.76 374.8 C614.91 375.39 618.05 375.72 621.2 376 C625.92 376.42 630.64 377 635.36 377 C639.29 377 643.23 376.21 647.16 375.44 C649.52 374.98 651.88 371.92 654.24 369.2 C657.39 365.57 660.53 356.11 663.68 351.26 C666.04 347.62 668.4 341.9 670.76 341.9 C673.12 341.9 675.48 345.48 677.84 347.36 C680.99 349.87 684.13 353.11 687.28 355.16 C692 358.24 696.72 360.66 701.44 362.96 C706.16 365.26 710.88 366.94 715.6 369.2 C719.53 371.09 723.47 375.44 727.4 375.44 C729.45 375.44 731.49 374.65 733.54 373.88 C735.42 373.17 737.31 366.19 739.2 359.88 C741.09 353.57 742.98 330.29 744.86 323.88 C746.91 316.94 748.95 315.05 751 308.44 C753.36 300.81 755.72 283.27 758.08 273 C759.97 264.79 761.86 254.03 763.74 251 C765.79 247.72 767.83 244 769.88 244 C774.6 244 779.32 244.8 784.04 244.8 C789.55 244.8 795.05 238.99 800.56 237.6 C806.85 236.01 813.15 234 819.44 234 C825.73 234 832.03 238.06 838.32 240.3 C844.61 242.54 850.91 245.96 857.2 247.5 C865.07 249.43 872.93 250.5 880.8 252" stroke="#ff40d0" stroke-width="2"/>
<path d="M597.6 359.8 C599.96 362.8 602.32 366.43 604.68 368.8 C607.04 371.17 609.4 374.36 611.76 374.8 C614.91 375.39 618.05 375.72 621.2 376 C625.92 376.42 630.64 377 635.36 377 C639.29 377 643.23 376.18 647.16 375.4 C649.52 374.93 651.88 371.79 654.24 369 C657.39 365.28 660.53 355.58 663.68 350.6 C666.04 346.87 668.4 341 670.76 341 C673.12 341 675.48 344.67 677.84 346.6 C680.99 349.17 684.13 352.49 687.28 354.6 C692 357.76 696.72 360.24 701.44 362.6 C706.16 364.96 710.88 366.68 715.6 369 C719.53 370.93 723.47 375.4 727.4 375.4 C729.45 375.4 731.49 374.59 733.54 373.8 C735.42 373.07 737.31 366.11 739.2 359.8 C741.09 353.49 742.98 332.35 744.86 323.8 C746.91 314.54 748.95 310.5 751 301.4 C753.36 290.9 755.72 269.95 758.08 259 C759.97 250.24 761.86 240.03 763.74 237 C765.79 233.72 767.83 230 769.88 230 C774.6 230 779.32 230.6 784.04 230.6 C789.55 230.6 795.05 225.44 800.56 224.2 C806.85 222.79 813.15 221 819.44 221 C825.73 221 832.03 225.17 838.32 227.5 C844.61 229.83 850.91 233.43 857.2 235.1 C865.07 237.18 872.93 238.37 880.8 240" stroke="#8a1038" stroke-width="2"/>
<path d="M597.6 357.4 C599.96 360.4 602.32 364.03 604.68 366.4 C607.04 368.77 609.4 371.82 611.76 372.4 C614.91 373.17 618.05 373.7 621.2 374 C625.92 374.45 630.64 375 635.36 375 C639.29 375 643.23 374.13 647.16 373.3 C649.52 372.8 651.88 369.46 654.24 366.5 C657.39 362.55 660.53 352.24 663.68 346.95 C666.04 342.98 668.4 336.75 670.76 336.75 C673.12 336.75 675.48 340.65 677.84 342.7 C680.99 345.43 684.13 348.96 687.28 351.2 C692 354.56 696.72 357.19 701.44 359.7 C706.16 362.21 710.88 364.03 715.6 366.5 C719.53 368.55 723.47 373.3 727.4 373.3 C729.45 373.3 731.49 372.44 733.54 371.6 C735.42 370.82 737.31 363.91 739.2 357.6 C741.09 351.29 742.98 330.26 744.86 321.6 C746.91 312.22 748.95 308.04 751 298.8 C753.36 288.14 755.72 266.99 758.08 256 C759.97 247.21 761.86 237.03 763.74 234 C765.79 230.72 767.83 227 769.88 227 C774.6 227 779.32 227.2 784.04 227.2 C789.55 227.2 795.05 223.33 800.56 222.4 C806.85 221.34 813.15 220 819.44 220 C825.73 220 832.03 223.82 838.32 226 C844.61 228.18 850.91 231.58 857.2 233.2 C865.07 235.22 872.93 236.4 880.8 238" stroke="#d07020" stroke-width="2"/>
<path d="M597.6 356.2 C599.96 359.2 602.32 362.83 604.68 365.2 C607.04 367.57 609.4 370.55 611.76 371.2 C614.91 372.06 618.05 372.7 621.2 373 C625.92 373.45 630.64 374 635.36 374 C639.29 374 643.23 373.13 647.16 372.3 C649.52 371.8 651.88 368.46 654.24 365.5 C657.39 361.55 660.53 351.24 663.68 345.95 C666.04 341.98 668.4 335.75 670.76 335.75 C673.12 335.75 675.48 339.65 677.84 341.7 C680.99 344.43 684.13 347.96 687.28 350.2 C692 353.56 696.72 356.19 701.44 358.7 C706.16 361.21 710.88 363.03 715.6 365.5 C719.53 367.55 723.47 372.3 727.4 372.3 C729.45 372.3 731.49 371.44 733.54 370.6 C735.42 369.82 737.31 362.91 739.2 356.6 C741.09 350.29 742.98 329.52 744.86 320.6 C746.91 310.94 748.95 306.38 751 296.8 C753.36 285.74 755.72 264.07 758.08 253 C759.97 244.14 761.86 234.03 763.74 231 C765.79 227.72 767.83 224 769.88 224 C774.6 224 779.32 224 784.04 224 C789.55 224 795.05 220.77 800.56 220 C806.85 219.12 813.15 218 819.44 218 C825.73 218 832.03 221.75 838.32 223.9 C844.61 226.05 850.91 229.46 857.2 231.1 C865.07 233.16 872.93 234.37 880.8 236" stroke="#e6c200" stroke-width="2"/>
<path d="M597.6 356.2 C599.96 359.2 602.32 362.83 604.68 365.2 C607.04 367.57 609.4 370.55 611.76 371.2 C614.91 372.06 618.05 372.7 621.2 373 C625.92 373.45 630.64 374 635.36 374 C639.29 374 643.23 373.13 647.16 372.3 C649.52 371.8 651.88 368.46 654.24 365.5 C657.39 361.55 660.53 351.24 663.68 345.95 C666.04 341.98 668.4 335.75 670.76 335.75 C673.12 335.75 675.48 339.65 677.84 341.7 C680.99 344.43 684.13 347.96 687.28 350.2 C692 353.56 696.72 356.19 701.44 358.7 C706.16 361.21 710.88 363.03 715.6 365.5 C719.53 367.55 723.47 372.3 727.4 372.3 C729.45 372.3 731.49 371.44 733.54 370.6 C735.42 369.82 737.31 362.91 739.2 356.6 C741.09 350.29 742.98 329.78 744.86 320.6 C746.91 310.66 748.95 305.73 751 295.8 C753.36 284.34 755.72 262.15 758.08 251 C759.97 242.08 761.86 232.03 763.74 229 C765.79 225.72 767.83 222 769.88 222 C774.6 222 779.32 222 784.04 222 C789.55 222 795.05 218.77 800.56 218 C806.85 217.12 813.15 216 819.44 216 C825.73 216 832.03 219.75 838.32 221.9 C844.61 224.05 850.91 227.46 857.2 229.1 C865.07 231.16 872.93 232.37 880.8 234" stroke="#f0b000" stroke-width="2"/>
<path d="M597.6 352.6 C599.96 355.6 602.32 359.23 604.68 361.6 C607.04 363.97 609.4 366.76 611.76 367.6 C614.91 368.72 618.05 369.69 621.2 370 C625.92 370.47 630.64 371 635.36 371 C639.29 371 643.23 370.08 647.16 369.2 C649.52 368.67 651.88 365.14 654.24 362 C657.39 357.81 660.53 346.9 663.68 341.3 C666.04 337.1 668.4 330.5 670.76 330.5 C673.12 330.5 675.48 334.63 677.84 336.8 C680.99 339.7 684.13 343.43 687.28 345.8 C692 349.35 696.72 352.14 701.44 354.8 C706.16 357.46 710.88 359.39 715.6 362 C719.53 364.18 723.47 369.2 727.4 369.2 C729.45 369.2 731.49 368.29 733.54 367.4 C735.42 366.58 737.31 359.71 739.2 353.4 C741.09 347.09 742.98 326.42 744.86 317.4 C746.91 307.62 748.95 302.92 751 293.2 C753.36 281.98 755.72 260.1 758.08 249 C759.97 240.12 761.86 230.03 763.74 227 C765.79 223.72 767.83 220.04 769.88 220 C774.6 219.9 779.32 219.9 784.04 219.8 C789.55 219.68 795.05 217.22 800.56 216.6 C806.85 215.89 813.15 215 819.44 215 C825.73 215 832.03 218.48 838.32 220.5 C844.61 222.52 850.91 225.73 857.2 227.3 C865.07 229.26 872.93 230.43 880.8 232" stroke="#a0c020" stroke-width="2"/>
<path d="M597.6 355 C599.96 358 602.32 361.63 604.68 364 C607.04 366.37 609.4 369.29 611.76 370 C614.91 370.95 618.05 371.69 621.2 372 C625.92 372.46 630.64 373 635.36 373 C639.29 373 643.23 372.13 647.16 371.3 C649.52 370.8 651.88 367.46 654.24 364.5 C657.39 360.55 660.53 350.24 663.68 344.95 C666.04 340.98 668.4 334.75 670.76 334.75 C673.12 334.75 675.48 338.65 677.84 340.7 C680.99 343.43 684.13 346.96 687.28 349.2 C692 352.56 696.72 355.19 701.44 357.7 C706.16 360.21 710.88 362.03 715.6 364.5 C719.53 366.55 723.47 371.3 727.4 371.3 C729.45 371.3 731.49 370.44 733.54 369.6 C735.42 368.82 737.31 361.91 739.2 355.6 C741.09 349.29 742.98 329.15 744.86 319.6 C746.91 309.26 748.95 303.74 751 293.3 C753.36 281.25 755.72 258.26 758.08 247 C759.97 237.99 761.86 228.03 763.74 225 C765.79 221.72 767.83 218.04 769.88 218 C774.6 217.9 779.32 217.9 784.04 217.8 C789.55 217.68 795.05 215.22 800.56 214.6 C806.85 213.89 813.15 213 819.44 213 C825.73 213 832.03 216.29 838.32 218.2 C844.61 220.11 850.91 223.13 857.2 224.6 C865.07 226.44 872.93 227.53 880.8 229" stroke="#f5a0c0" stroke-width="2"/>
<path d="M597.6 357.4 C599.96 360.4 602.32 364.03 604.68 366.4 C607.04 368.77 609.4 371.82 611.76 372.4 C614.91 373.17 618.05 373.7 621.2 374 C625.92 374.45 630.64 375 635.36 375 C639.29 375 643.23 374.18 647.16 373.4 C649.52 372.93 651.88 369.79 654.24 367 C657.39 363.28 660.53 353.58 663.68 348.6 C666.04 344.87 668.4 339 670.76 339 C673.12 339 675.48 342.67 677.84 344.6 C680.99 347.17 684.13 350.49 687.28 352.6 C692 355.76 696.72 358.24 701.44 360.6 C706.16 362.96 710.88 364.68 715.6 367 C719.53 368.93 723.47 373.4 727.4 373.4 C729.45 373.4 731.49 372.59 733.54 371.8 C735.42 371.07 737.31 364.11 739.2 357.8 C741.09 351.49 742.98 331.94 744.86 321.8 C746.91 310.81 748.95 304.22 751 292.9 C753.36 279.84 755.72 255.44 758.08 244 C759.97 234.85 761.86 225.03 763.74 222 C765.79 218.72 767.83 215.09 769.88 215 C774.6 214.8 779.32 214.79 784.04 214.6 C789.55 214.37 795.05 212.66 800.56 212.2 C806.85 211.67 813.15 211 819.44 211 C825.73 211 832.03 214.22 838.32 216.1 C844.61 217.98 850.91 221 857.2 222.5 C865.07 224.37 872.93 225.5 880.8 227" stroke="#c0a0f0" stroke-width="2"/>
<path d="M597.6 359.8 C599.96 362.8 602.32 366.43 604.68 368.8 C607.04 371.17 609.4 374.36 611.76 374.8 C614.91 375.39 618.05 375.72 621.2 376 C625.92 376.42 630.64 377 635.36 377 C639.29 377 643.23 376.18 647.16 375.4 C649.52 374.93 651.88 371.79 654.24 369 C657.39 365.28 660.53 355.58 663.68 350.6 C666.04 346.87 668.4 341 670.76 341 C673.12 341 675.48 344.67 677.84 346.6 C680.99 349.17 684.13 352.49 687.28 354.6 C692 357.76 696.72 360.24 701.44 362.6 C706.16 364.96 710.88 366.68 715.6 369 C719.53 370.93 723.47 375.4 727.4 375.4 C729.45 375.4 731.49 374.59 733.54 373.8 C735.42 373.07 737.31 366.11 739.2 359.8 C741.09 353.49 742.98 334.94 744.86 323.8 C746.91 311.73 748.95 302.89 751 289.9 C753.36 274.92 755.72 247.73 758.08 236 C759.97 226.62 761.86 217.03 763.74 214 C765.79 210.72 767.83 207.17 769.88 207 C774.6 206.6 779.32 206.45 784.04 206.2 C789.55 205.91 795.05 205.55 800.56 205.4 C806.85 205.22 813.15 205 819.44 205 C825.73 205 832.03 208.25 838.32 210.2 C844.61 212.15 850.91 215.36 857.2 217 C865.07 219.05 872.93 220.33 880.8 222" stroke="#87c8f0" stroke-width="2"/>
<path d="M597.6 356.2 C599.96 359.2 602.32 362.83 604.68 365.2 C607.04 367.57 609.4 370.55 611.76 371.2 C614.91 372.06 618.05 372.7 621.2 373 C625.92 373.45 630.64 374 635.36 374 C639.29 374 643.23 373.13 647.16 372.3 C649.52 371.8 651.88 368.46 654.24 365.5 C657.39 361.55 660.53 351.24 663.68 345.95 C666.04 341.98 668.4 335.75 670.76 335.75 C673.12 335.75 675.48 339.65 677.84 341.7 C680.99 344.43 684.13 347.96 687.28 350.2 C692 353.56 696.72 356.19 701.44 358.7 C706.16 361.21 710.88 363.03 715.6 365.5 C719.53 367.55 723.47 372.3 727.4 372.3 C729.45 372.3 731.49 371.44 733.54 370.6 C735.42 369.82 737.31 362.91 739.2 356.6 C741.09 350.29 742.98 330.93 744.86 320.6 C746.91 309.41 748.95 302.42 751 290.8 C753.36 277.39 755.72 252.49 758.08 241 C759.97 231.81 761.86 222.03 763.74 219 C765.79 215.72 767.83 212.09 769.88 212 C774.6 211.8 779.32 211.79 784.04 211.6 C789.55 211.37 795.05 209.66 800.56 209.2 C806.85 208.67 813.15 208 819.44 208 C825.73 208 832.03 211.59 838.32 213.7 C844.61 215.81 850.91 219.21 857.2 220.9 C865.07 223.02 872.93 224.3 880.8 226" stroke="#40c0c0" stroke-width="2"/>
<path d="M597.6 353.8 C599.96 356.8 602.32 360.43 604.68 362.8 C607.04 365.17 609.4 368.02 611.76 368.8 C614.91 369.84 618.05 370.69 621.2 371 C625.92 371.47 630.64 372 635.36 372 C639.29 372 643.23 371.08 647.16 370.2 C649.52 369.67 651.88 366.14 654.24 363 C657.39 358.81 660.53 347.9 663.68 342.3 C666.04 338.1 668.4 331.5 670.76 331.5 C673.12 331.5 675.48 335.63 677.84 337.8 C680.99 340.7 684.13 344.43 687.28 346.8 C692 350.35 696.72 353.14 701.44 355.8 C706.16 358.46 710.88 360.39 715.6 363 C719.53 365.18 723.47 370.2 727.4 370.2 C729.45 370.2 731.49 369.29 733.54 368.4 C735.42 367.58 737.31 360.71 739.2 354.4 C741.09 348.09 742.98 328.71 744.86 318.4 C746.91 307.23 748.95 300.29 751 288.7 C753.36 275.33 755.72 250.49 758.08 239 C759.97 229.81 761.86 220.03 763.74 217 C765.79 213.72 767.83 210.13 769.88 210 C774.6 209.7 779.32 209.66 784.04 209.4 C789.55 209.09 795.05 208.11 800.56 207.8 C806.85 207.45 813.15 207 819.44 207 C825.73 207 832.03 211.07 838.32 213.5 C844.61 215.93 850.91 219.89 857.2 221.9 C865.07 224.41 872.93 225.97 880.8 228" stroke="#90ee90" stroke-width="2"/>
<path d="M597.6 358.6 C599.96 361.6 602.32 365.23 604.68 367.6 C607.04 369.97 609.4 373.09 611.76 373.6 C614.91 374.28 618.05 374.71 621.2 375 C625.92 375.43 630.64 376 635.36 376 C639.29 376 643.23 375.13 647.16 374.3 C649.52 373.8 651.88 370.46 654.24 367.5 C657.39 363.55 660.53 353.24 663.68 347.95 C666.04 343.98 668.4 337.75 670.76 337.75 C673.12 337.75 675.48 341.65 677.84 343.7 C680.99 346.43 684.13 349.96 687.28 352.2 C692 355.56 696.72 358.19 701.44 360.7 C706.16 363.21 710.88 365.03 715.6 367.5 C719.53 369.55 723.47 374.3 727.4 374.3 C729.45 374.3 731.49 373.44 733.54 372.6 C735.42 371.82 737.31 364.91 739.2 358.6 C741.09 352.29 742.98 333.04 744.86 322.6 C746.91 311.29 748.95 304.09 751 292.3 C753.36 278.7 755.72 253.52 758.08 242 C759.97 232.78 761.86 223.03 763.74 220 C765.79 216.72 767.83 213.09 769.88 213 C774.6 212.8 779.32 212.79 784.04 212.6 C789.55 212.37 795.05 210.66 800.56 210.2 C806.85 209.67 813.15 209 819.44 209 C825.73 209 832.03 213.15 838.32 215.6 C844.61 218.05 850.91 222.01 857.2 224 C865.07 226.48 872.93 228 880.8 230" stroke="#e84a2a" stroke-width="2"/>
<path d="M597.6 355 C599.96 358 602.32 361.63 604.68 364 C607.04 366.37 609.4 369.29 611.76 370 C614.91 370.95 618.05 371.69 621.2 372 C625.92 372.46 630.64 373 635.36 373 C639.29 373 643.23 372.08 647.16 371.2 C649.52 370.67 651.88 367.14 654.24 364 C657.39 359.81 660.53 348.9 663.68 343.3 C666.04 339.1 668.4 332.5 670.76 332.5 C673.12 332.5 675.48 336.63 677.84 338.8 C680.99 341.7 684.13 345.43 687.28 347.8 C692 351.35 696.72 354.14 701.44 356.8 C706.16 359.46 710.88 361.39 715.6 364 C719.53 366.18 723.47 371.2 727.4 371.2 C729.45 371.2 731.49 370.29 733.54 369.4 C735.42 368.58 737.31 361.71 739.2 355.4 C741.09 349.09 742.98 329.92 744.86 319.4 C746.91 308 748.95 300.62 751 288.7 C753.36 274.94 755.72 249.55 758.08 238 C759.97 228.76 761.86 219.03 763.74 216 C765.79 212.72 767.83 209.13 769.88 209 C774.6 208.7 779.32 208.66 784.04 208.4 C789.55 208.09 795.05 207.11 800.56 206.8 C806.85 206.45 813.15 206 819.44 206 C825.73 206 832.03 209.7 838.32 211.9 C844.61 214.1 850.91 217.69 857.2 219.5 C865.07 221.77 872.93 223.17 880.8 225" stroke="#2eb872" stroke-width="2"/>
<path d="M597.6 356.2 C599.96 359.2 602.32 362.83 604.68 365.2 C607.04 367.57 609.4 370.55 611.76 371.2 C614.91 372.06 618.05 372.7 621.2 373 C625.92 373.45 630.64 374 635.36 374 C639.29 374 643.23 373.13 647.16 372.3 C649.52 371.8 651.88 368.46 654.24 365.5 C657.39 361.55 660.53 351.24 663.68 345.95 C666.04 341.98 668.4 335.75 670.76 335.75 C673.12 335.75 675.48 339.65 677.84 341.7 C680.99 344.43 684.13 347.96 687.28 350.2 C692 353.56 696.72 356.19 701.44 358.7 C706.16 361.21 710.88 363.03 715.6 365.5 C719.53 367.55 723.47 372.3 727.4 372.3 C729.45 372.3 731.49 371.44 733.54 370.6 C735.42 369.82 737.31 362.91 739.2 356.6 C741.09 350.29 742.98 331.04 744.86 320.6 C746.91 309.29 748.95 302.09 751 290.3 C753.36 276.7 755.72 251.52 758.08 240 C759.97 230.78 761.86 221.03 763.74 218 C765.79 214.72 767.83 211.13 769.88 211 C774.6 210.7 779.32 210.66 784.04 210.4 C789.55 210.09 795.05 209.11 800.56 208.8 C806.85 208.45 813.15 208 819.44 208 C825.73 208 832.03 211.14 838.32 213 C844.61 214.86 850.91 217.88 857.2 219.4 C865.07 221.3 872.93 222.47 880.8 224" stroke="#111111" stroke-width="2"/>
<path d="M597.6 357.4 C599.96 360.4 602.32 364.03 604.68 366.4 C607.04 368.77 609.4 371.82 611.76 372.4 C614.91 373.17 618.05 373.7 621.2 374 C625.92 374.45 630.64 375 635.36 375 C639.29 375 643.23 374.13 647.16 373.3 C649.52 372.8 651.88 369.46 654.24 366.5 C657.39 362.55 660.53 352.24 663.68 346.95 C666.04 342.98 668.4 336.75 670.76 336.75 C673.12 336.75 675.48 340.65 677.84 342.7 C680.99 345.43 684.13 348.96 687.28 351.2 C692 354.56 696.72 357.19 701.44 359.7 C706.16 362.21 710.88 364.03 715.6 366.5 C719.53 368.55 723.47 373.3 727.4 373.3 C729.45 373.3 731.49 372.44 733.54 371.6 C735.42 370.82 737.31 363.91 739.2 357.6 C741.09 351.29 742.98 331.61 744.86 321.6 C746.91 310.76 748.95 304.42 751 293.3 C753.36 280.47 755.72 256.4 758.08 245 C759.97 235.88 761.86 226.03 763.74 223 C765.79 219.72 767.83 216.09 769.88 216 C774.6 215.8 779.32 215.79 784.04 215.6 C789.55 215.37 795.05 213.66 800.56 213.2 C806.85 212.67 813.15 212 819.44 212 C825.73 212 832.03 214.1 838.32 215.3 C844.61 216.5 850.91 218.39 857.2 219.3 C865.07 220.44 872.93 221.1 880.8 222" stroke="#111111" stroke-width="2"/>
<path d="M597.6 359.8 C599.96 362.8 602.32 366.43 604.68 368.8 C607.04 371.17 609.4 374.36 611.76 374.8 C614.91 375.39 618.05 375.72 621.2 376 C625.92 376.42 630.64 377 635.36 377 C639.29 377 643.23 376.18 647.16 375.4 C649.52 374.93 651.88 371.79 654.24 369 C657.39 365.28 660.53 355.58 663.68 350.6 C666.04 346.87 668.4 341 670.76 341 C673.12 341 675.48 344.67 677.84 346.6 C680.99 349.17 684.13 352.49 687.28 354.6 C692 357.76 696.72 360.24 701.44 362.6 C706.16 364.96 710.88 366.68 715.6 369 C719.53 370.93 723.47 375.4 727.4 375.4 C729.45 375.4 731.49 374.59 733.54 373.8 C735.42 373.07 737.31 366.11 739.2 359.8 C741.09 353.49 742.98 335.12 744.86 323.8 C746.91 311.53 748.95 302.22 751 288.9 C753.36 273.53 755.72 245.78 758.08 234 C759.97 224.58 761.86 215.03 763.74 212 C765.79 208.72 767.83 205.17 769.88 205 C774.6 204.6 779.32 204.45 784.04 204.2 C789.55 203.91 795.05 203.55 800.56 203.4 C806.85 203.22 813.15 203 819.44 203 C825.73 203 832.03 206.25 838.32 208.2 C844.61 210.15 850.91 213.36 857.2 215 C865.07 217.05 872.93 218.33 880.8 220" stroke="#3a8ee0" stroke-width="2"/>
<path d="M597.6 349 C599.96 352 602.32 355.63 604.68 358 C607.04 360.37 609.4 362.98 611.76 364 C614.91 365.36 618.05 366.68 621.2 367 C625.92 367.48 630.64 368 635.36 368 C639.29 368 643.23 366.98 647.16 366 C649.52 365.41 651.88 361.49 654.24 358 C657.39 353.35 660.53 341.22 663.68 335 C666.04 330.33 668.4 323 670.76 323 C673.12 323 675.48 327.59 677.84 330 C680.99 333.22 684.13 337.37 687.28 340 C692 343.95 696.72 347.05 701.44 350 C706.16 352.95 710.88 355.1 715.6 358 C719.53 360.42 723.47 366 727.4 366 C729.45 366 731.49 364.98 733.54 364 C735.42 363.09 737.31 356.31 739.2 350 C741.09 343.69 742.98 324.48 744.86 314 C746.91 302.65 748.95 295.36 751 283.5 C753.36 269.82 755.72 244.54 758.08 233 C759.97 223.77 761.86 214.03 763.74 211 C765.79 207.72 767.83 204.22 769.88 204 C774.6 203.5 779.32 203 784.04 203 C789.55 203 795.05 203 800.56 203 C806.85 203 813.15 203 819.44 203 C825.73 203 832.03 205.8 838.32 207.5 C844.61 209.2 850.91 212.03 857.2 213.5 C865.07 215.34 872.93 216.5 880.8 218" stroke="#8a20d8" stroke-width="2"/>
<path d="M597.6 357.4 C599.96 360.4 602.32 364.03 604.68 366.4 C607.04 368.77 609.4 371.82 611.76 372.4 C614.91 373.17 618.05 373.7 621.2 374 C625.92 374.45 630.64 375 635.36 375 C639.29 375 643.23 374.16 647.16 373.36 C649.52 372.88 651.88 369.66 654.24 366.8 C657.39 362.99 660.53 353.04 663.68 347.94 C666.04 344.11 668.4 338.1 670.76 338.1 C673.12 338.1 675.48 341.86 677.84 343.84 C680.99 346.48 684.13 349.88 687.28 352.04 C692 355.28 696.72 357.82 701.44 360.24 C706.16 362.66 710.88 364.42 715.6 366.8 C719.53 368.78 723.47 373.36 727.4 373.36 C729.45 373.36 731.49 372.53 733.54 371.72 C735.42 370.97 737.31 364.03 739.2 357.72 C741.09 351.41 742.98 333.29 744.86 321.72 C746.91 309.18 748.95 299.16 751 285.36 C753.36 269.44 755.72 240.85 758.08 229 C759.97 219.52 761.86 210.03 763.74 207 C765.79 203.72 767.83 200.22 769.88 200 C774.6 199.5 779.32 199 784.04 199 C789.55 199 795.05 199 800.56 199 C806.85 199 813.15 199 819.44 199 C825.73 199 832.03 201.8 838.32 203.5 C844.61 205.2 850.91 208.03 857.2 209.5 C865.07 211.34 872.93 212.5 880.8 214" stroke="#8a1038" stroke-width="2"/>
</g>
<line x1="589" y1="178" x2="589" y2="398" stroke="#222" stroke-width="1.5"/>
<line x1="582" y1="178" x2="589" y2="178" stroke="#222" stroke-width="1.2"/>
<line x1="585" y1="187.97" x2="589" y2="187.97" stroke="#222" stroke-width="1.2"/>
<text x="526.4" y="178.5" font-size="12" font-family="'Liberation Mono',monospace" fill="#222" dominant-baseline="central" textLength="51.6" lengthAdjust="spacingAndGlyphs">5,198.82</text>
<line x1="582" y1="197.95" x2="589" y2="197.95" stroke="#222" stroke-width="1.2"/>
<line x1="585" y1="207.92" x2="589" y2="207.92" stroke="#222" stroke-width="1.2"/>
<text x="532.85" y="198.45" font-size="12" font-family="'Liberation Mono',monospace" fill="#222" dominant-baseline="central" textLength="45.15" lengthAdjust="spacingAndGlyphs">4,726.2</text>
<line x1="582" y1="217.9" x2="589" y2="217.9" stroke="#222" stroke-width="1.2"/>
<line x1="585" y1="227.87" x2="589" y2="227.87" stroke="#222" stroke-width="1.2"/>
<text x="526.4" y="218.4" font-size="12" font-family="'Liberation Mono',monospace" fill="#222" dominant-baseline="central" textLength="51.6" lengthAdjust="spacingAndGlyphs">4,253.58</text>
<line x1="582" y1="237.85" x2="589" y2="237.85" stroke="#222" stroke-width="1.2"/>
<line x1="585" y1="247.82" x2="589" y2="247.82" stroke="#222" stroke-width="1.2"/>
<text x="526.4" y="238.35" font-size="12" font-family="'Liberation Mono',monospace" fill="#222" dominant-baseline="central" textLength="51.6" lengthAdjust="spacingAndGlyphs">3,780.96</text>
<line x1="582" y1="257.8" x2="589" y2="257.8" stroke="#222" stroke-width="1.2"/>
<line x1="585" y1="267.77" x2="589" y2="267.77" stroke="#222" stroke-width="1.2"/>
<text x="526.4" y="258.3" font-size="12" font-family="'Liberation Mono',monospace" fill="#222" dominant-baseline="central" textLength="51.6" lengthAdjust="spacingAndGlyphs">3,308.34</text>
<line x1="582" y1="277.75" x2="589" y2="277.75" stroke="#222" stroke-width="1.2"/>
<line x1="585" y1="287.72" x2="589" y2="287.72" stroke="#222" stroke-width="1.2"/>
<text x="526.4" y="278.25" font-size="12" font-family="'Liberation Mono',monospace" fill="#222" dominant-baseline="central" textLength="51.6" lengthAdjust="spacingAndGlyphs">2,835.72</text>
<line x1="582" y1="297.7" x2="589" y2="297.7" stroke="#222" stroke-width="1.2"/>
<line x1="585" y1="307.67" x2="589" y2="307.67" stroke="#222" stroke-width="1.2"/>
<text x="532.85" y="298.2" font-size="12" font-family="'Liberation Mono',monospace" fill="#222" dominant-baseline="central" textLength="45.15" lengthAdjust="spacingAndGlyphs">2,363.1</text>
<line x1="582" y1="317.65" x2="589" y2="317.65" stroke="#222" stroke-width="1.2"/>
<line x1="585" y1="327.62" x2="589" y2="327.62" stroke="#222" stroke-width="1.2"/>
<text x="526.4" y="318.15" font-size="12" font-family="'Liberation Mono',monospace" fill="#222" dominant-baseline="central" textLength="51.6" lengthAdjust="spacingAndGlyphs">1,890.48</text>
<line x1="582" y1="337.6" x2="589" y2="337.6" stroke="#222" stroke-width="1.2"/>
<line x1="585" y1="347.57" x2="589" y2="347.57" stroke="#222" stroke-width="1.2"/>
<text x="526.4" y="338.1" font-size="12" font-family="'Liberation Mono',monospace" fill="#222" dominant-baseline="central" textLength="51.6" lengthAdjust="spacingAndGlyphs">1,417.86</text>
<line x1="582" y1="357.55" x2="589" y2="357.55" stroke="#222" stroke-width="1.2"/>
<line x1="585" y1="367.52" x2="589" y2="367.52" stroke="#222" stroke-width="1.2"/>
<text x="532.85" y="358.05" font-size="12" font-family="'Liberation Mono',monospace" fill="#222" dominant-baseline="central" textLength="45.15" lengthAdjust="spacingAndGlyphs">945.241</text>
<line x1="582" y1="377.5" x2="589" y2="377.5" stroke="#222" stroke-width="1.2"/>
<line x1="585" y1="387.47" x2="589" y2="387.47" stroke="#222" stroke-width="1.2"/>
<text x="539.3" y="378" font-size="12" font-family="'Liberation Mono',monospace" fill="#222" dominant-baseline="central" textLength="38.7" lengthAdjust="spacingAndGlyphs">472.62</text>
<line x1="582" y1="397.45" x2="589" y2="397.45" stroke="#222" stroke-width="1.2"/>
<text x="571.55" y="397.95" font-size="12" font-family="'Liberation Mono',monospace" fill="#222" dominant-baseline="central" textLength="6.45" lengthAdjust="spacingAndGlyphs">0</text>
<line x1="597" y1="404.6" x2="882" y2="404.6" stroke="#222" stroke-width="1.5"/>
<line x1="597.6" y1="404.6" x2="597.6" y2="410" stroke="#222" stroke-width="1.2"/>
<line x1="621.2" y1="404.6" x2="621.2" y2="407.5" stroke="#222" stroke-width="1.2"/>
<line x1="644.8" y1="404.6" x2="644.8" y2="407.5" stroke="#222" stroke-width="1.2"/>
<line x1="668.4" y1="404.6" x2="668.4" y2="407.5" stroke="#222" stroke-width="1.2"/>
<line x1="692" y1="404.6" x2="692" y2="410" stroke="#222" stroke-width="1.2"/>
<line x1="715.6" y1="404.6" x2="715.6" y2="407.5" stroke="#222" stroke-width="1.2"/>
<line x1="739.2" y1="404.6" x2="739.2" y2="407.5" stroke="#222" stroke-width="1.2"/>
<line x1="762.8" y1="404.6" x2="762.8" y2="407.5" stroke="#222" stroke-width="1.2"/>
<line x1="786.4" y1="404.6" x2="786.4" y2="410" stroke="#222" stroke-width="1.2"/>
<line x1="810" y1="404.6" x2="810" y2="407.5" stroke="#222" stroke-width="1.2"/>
<line x1="833.6" y1="404.6" x2="833.6" y2="407.5" stroke="#222" stroke-width="1.2"/>
<line x1="857.2" y1="404.6" x2="857.2" y2="407.5" stroke="#222" stroke-width="1.2"/>
<line x1="880.8" y1="404.6" x2="880.8" y2="410" stroke="#222" stroke-width="1.2"/>
<text x="587.6" y="418.6" font-size="12" font-family="'Liberation Mono',monospace" fill="#222" dominant-baseline="central" textLength="19.8" lengthAdjust="spacingAndGlyphs">400</text>
<text x="682.1" y="418.6" font-size="12" font-family="'Liberation Mono',monospace" fill="#222" dominant-baseline="central" textLength="19.8" lengthAdjust="spacingAndGlyphs">600</text>
<text x="776.5" y="418.6" font-size="12" font-family="'Liberation Mono',monospace" fill="#222" dominant-baseline="central" textLength="19.8" lengthAdjust="spacingAndGlyphs">800</text>
<text x="860.5" y="418.6" font-size="12" font-family="'Liberation Mono',monospace" fill="#222" dominant-baseline="central" textLength="33" lengthAdjust="spacingAndGlyphs">1,000</text>
<g clip-path="url(#clipLeg)">
<line x1="904" y1="181.7" x2="911" y2="181.7" stroke="#e84a2a" stroke-width="2.2"/>
<text x="916" y="182.2" font-size="12.5" font-family="'Liberation Mono',monospace" fill="#222" dominant-baseline="central" textLength="27.2" lengthAdjust="spacingAndGlyphs">ROI1</text>
<line x1="904" y1="203.55" x2="911" y2="203.55" stroke="#2eb872" stroke-width="2.2"/>
<text x="916" y="204.05" font-size="12.5" font-family="'Liberation Mono',monospace" fill="#222" dominant-baseline="central" textLength="27.2" lengthAdjust="spacingAndGlyphs">ROI2</text>
<line x1="904" y1="225.4" x2="911" y2="225.4" stroke="#3a8ee0" stroke-width="2.2"/>
<text x="916" y="225.9" font-size="12.5" font-family="'Liberation Mono',monospace" fill="#222" dominant-baseline="central" textLength="27.2" lengthAdjust="spacingAndGlyphs">ROI3</text>
<line x1="904" y1="247.25" x2="911" y2="247.25" stroke="#111111" stroke-width="2.2"/>
<text x="916" y="247.75" font-size="12.5" font-family="'Liberation Mono',monospace" fill="#222" dominant-baseline="central" textLength="27.2" lengthAdjust="spacingAndGlyphs">ROI4</text>
<line x1="904" y1="269.1" x2="911" y2="269.1" stroke="#111111" stroke-width="2.2"/>
<text x="916" y="269.6" font-size="12.5" font-family="'Liberation Mono',monospace" fill="#222" dominant-baseline="central" textLength="27.2" lengthAdjust="spacingAndGlyphs">ROI5</text>
<line x1="904" y1="290.95" x2="911" y2="290.95" stroke="#8a20d8" stroke-width="2.2"/>
<text x="916" y="291.45" font-size="12.5" font-family="'Liberation Mono',monospace" fill="#222" dominant-baseline="central" textLength="27.2" lengthAdjust="spacingAndGlyphs">ROI6</text>
<line x1="904" y1="312.8" x2="911" y2="312.8" stroke="#e6c200" stroke-width="2.2"/>
<text x="916" y="313.3" font-size="12.5" font-family="'Liberation Mono',monospace" fill="#222" dominant-baseline="central" textLength="27.2" lengthAdjust="spacingAndGlyphs">ROI7</text>
<line x1="904" y1="334.65" x2="911" y2="334.65" stroke="#ff40d0" stroke-width="2.2"/>
<text x="916" y="335.15" font-size="12.5" font-family="'Liberation Mono',monospace" fill="#222" dominant-baseline="central" textLength="27.2" lengthAdjust="spacingAndGlyphs">ROI8</text>
<line x1="904" y1="356.5" x2="911" y2="356.5" stroke="#8a1038" stroke-width="2.2"/>
<text x="916" y="357" font-size="12.5" font-family="'Liberation Mono',monospace" fill="#222" dominant-baseline="central" textLength="27.2" lengthAdjust="spacingAndGlyphs">ROI9</text>
<line x1="904" y1="378.35" x2="911" y2="378.35" stroke="#90ee90" stroke-width="2.2"/>
<text x="916" y="378.85" font-size="12.5" font-family="'Liberation Mono',monospace" fill="#222" dominant-baseline="central" textLength="34" lengthAdjust="spacingAndGlyphs">ROI10</text>
<line x1="904" y1="400.2" x2="911" y2="400.2" stroke="#87c8f0" stroke-width="2.2"/>
<text x="916" y="400.7" font-size="12.5" font-family="'Liberation Mono',monospace" fill="#222" dominant-baseline="central" textLength="34" lengthAdjust="spacingAndGlyphs">ROI11</text>
<line x1="904" y1="422.05" x2="911" y2="422.05" stroke="#f0b000" stroke-width="2.2"/>
<text x="916" y="422.55" font-size="12.5" font-family="'Liberation Mono',monospace" fill="#222" dominant-baseline="central" textLength="34" lengthAdjust="spacingAndGlyphs">ROI12</text>
</g>
<rect x="953.6" y="175" width="15.8" height="248" fill="#f0f0f0"/>
<rect x="954.6" y="189.2" width="13.8" height="132.1" fill="#cdcdcd"/>
<path d="M957.5 186 L961.5 182 L965.5 186" fill="none" stroke="#444" stroke-width="1.2"/>
<path d="M957.5 412 L961.5 416 L965.5 412" fill="none" stroke="#444" stroke-width="1.2"/>
<text x="517.6" y="463.2" font-size="14.1" font-family="'Liberation Sans',sans-serif" fill="#222" dominant-baseline="central" font-weight="bold" textLength="65" lengthAdjust="spacingAndGlyphs">波峰波长</text>
<text x="535" y="489.8" font-size="14.1" font-family="'Liberation Sans',sans-serif" fill="#222" dominant-baseline="central" font-weight="bold" textLength="31" lengthAdjust="spacingAndGlyphs">及值</text>
<rect x="515.5" y="538.3" width="71.4" height="34.8" fill="#e1e1e1" stroke="#adadad" stroke-width="1"/>
<text x="522" y="547.7" font-size="12.69" font-family="'Liberation Sans',sans-serif" fill="#222" dominant-baseline="central" font-weight="bold" textLength="58" lengthAdjust="spacingAndGlyphs">导出波峰</text>
<text x="537" y="562.7" font-size="12.69" font-family="'Liberation Sans',sans-serif" fill="#222" dominant-baseline="central" font-weight="bold" textLength="29" lengthAdjust="spacingAndGlyphs">数据</text>
<rect x="594.5" y="447" width="384" height="139" fill="#fff" stroke="#a0a0a0" stroke-width="1"/>
<line x1="616.2" y1="448" x2="616.2" y2="571" stroke="#dcdcdc" stroke-width="1"/>
<line x1="680.2" y1="448" x2="680.2" y2="571" stroke="#dcdcdc" stroke-width="1"/>
<line x1="840" y1="448" x2="840" y2="571" stroke="#dcdcdc" stroke-width="1"/>
<line x1="903.6" y1="448" x2="903.6" y2="571" stroke="#dcdcdc" stroke-width="1"/>
<line x1="616" y1="493.3" x2="962" y2="493.3" stroke="#dcdcdc" stroke-width="1"/>
<line x1="616" y1="521" x2="962" y2="521" stroke="#dcdcdc" stroke-width="1"/>
<line x1="616" y1="549.3" x2="962" y2="549.3" stroke="#dcdcdc" stroke-width="1"/>
<text x="634" y="457" font-size="12.5" font-family="'Liberation Sans',sans-serif" fill="#111" dominant-baseline="central" font-weight="bold" textLength="28" lengthAdjust="spacingAndGlyphs">area</text>
<text x="732" y="457" font-size="12.5" font-family="'Liberation Sans',sans-serif" fill="#111" dominant-baseline="central" font-weight="bold" textLength="58" lengthAdjust="spacingAndGlyphs">&lt;490nm 1</text>
<text x="855" y="457" font-size="12.5" font-family="'Liberation Sans',sans-serif" fill="#111" dominant-baseline="central" font-weight="bold" textLength="33" lengthAdjust="spacingAndGlyphs">peak1</text>
<text x="952" y="457" font-size="12.5" font-family="'Liberation Sans',sans-serif" fill="#111" dominant-baseline="central" font-weight="bold">&lt;</text>
<g clip-path="url(#clipT1)">
<text x="599.5" y="481.1" font-size="12.5" font-family="'Liberation Sans',sans-serif" fill="#222" dominant-baseline="central">1</text>
<text x="620" y="480.1" font-size="12.5" font-family="'Liberation Sans',sans-serif" fill="#111" dominant-baseline="central" textLength="29.2" lengthAdjust="spacingAndGlyphs">ROI1</text>
<text x="683.5" y="480.1" font-size="12.5" font-family="'Liberation Sans',sans-serif" fill="#111" dominant-baseline="central">0</text>
<text x="843.5" y="480.1" font-size="12.5" font-family="'Liberation Sans',sans-serif" fill="#111" dominant-baseline="central">0</text>
<text x="907" y="480.1" font-size="12.5" font-family="'Liberation Sans',sans-serif" fill="#111" dominant-baseline="central">0</text>
<text x="599.5" y="508.8" font-size="12.5" font-family="'Liberation Sans',sans-serif" fill="#222" dominant-baseline="central">2</text>
<text x="620" y="507.8" font-size="12.5" font-family="'Liberation Sans',sans-serif" fill="#111" dominant-baseline="central" textLength="29.2" lengthAdjust="spacingAndGlyphs">ROI2</text>
<text x="683.5" y="507.8" font-size="12.5" font-family="'Liberation Sans',sans-serif" fill="#111" dominant-baseline="central">461</text>
<text x="843.5" y="507.8" font-size="12.5" font-family="'Liberation Sans',sans-serif" fill="#111" dominant-baseline="central">555</text>
<text x="907" y="507.8" font-size="12.5" font-family="'Liberation Sans',sans-serif" fill="#111" dominant-baseline="central">471</text>
<text x="599.5" y="536.5" font-size="12.5" font-family="'Liberation Sans',sans-serif" fill="#222" dominant-baseline="central">3</text>
<text x="620" y="535.5" font-size="12.5" font-family="'Liberation Sans',sans-serif" fill="#111" dominant-baseline="central" textLength="29.2" lengthAdjust="spacingAndGlyphs">ROI3</text>
<text x="683.5" y="535.5" font-size="12.5" font-family="'Liberation Sans',sans-serif" fill="#111" dominant-baseline="central">421</text>
<text x="843.5" y="535.5" font-size="12.5" font-family="'Liberation Sans',sans-serif" fill="#111" dominant-baseline="central">678</text>
<text x="907" y="535.5" font-size="12.5" font-family="'Liberation Sans',sans-serif" fill="#111" dominant-baseline="central">0</text>
<text x="599.5" y="564.2" font-size="12.5" font-family="'Liberation Sans',sans-serif" fill="#222" dominant-baseline="central">4</text>
<text x="620" y="563.2" font-size="12.5" font-family="'Liberation Sans',sans-serif" fill="#111" dominant-baseline="central" textLength="29.2" lengthAdjust="spacingAndGlyphs">ROI4</text>
<text x="683.5" y="563.2" font-size="12.5" font-family="'Liberation Sans',sans-serif" fill="#111" dominant-baseline="central">0</text>
<text x="843.5" y="563.2" font-size="12.5" font-family="'Liberation Sans',sans-serif" fill="#111" dominant-baseline="central">0</text>
<text x="907" y="563.2" font-size="12.5" font-family="'Liberation Sans',sans-serif" fill="#111" dominant-baseline="central">0</text>
</g>
<rect x="962.3" y="447" width="15.7" height="124" fill="#f0f0f0"/>
<rect x="963.3" y="463.3" width="13.7" height="15.7" fill="#cdcdcd"/>
<path d="M966.15 458 L970.15 454 L974.15 458" fill="none" stroke="#444" stroke-width="1.2"/>
<path d="M966.15 560 L970.15 564 L974.15 560" fill="none" stroke="#444" stroke-width="1.2"/>
<rect x="595" y="571" width="383" height="15" fill="#f0f0f0"/>
<rect x="612" y="572" width="57.7" height="13" fill="#cdcdcd"/>
<path d="M605 574.5 L601 578.5 L605 582.5" fill="none" stroke="#444" stroke-width="1.2"/>
<path d="M968 574.5 L972 578.5 L968 582.5" fill="none" stroke="#444" stroke-width="1.2"/>
<rect x="518.5" y="594.9" width="70.5" height="34.4" fill="#e1e1e1" stroke="#adadad" stroke-width="1"/>
<text x="525" y="603.7" font-size="12.69" font-family="'Liberation Sans',sans-serif" fill="#222" dominant-baseline="central" font-weight="bold" textLength="58" lengthAdjust="spacingAndGlyphs">手动选区</text>
<text x="540" y="619.2" font-size="12.69" font-family="'Liberation Sans',sans-serif" fill="#222" dominant-baseline="central" font-weight="bold" textLength="28" lengthAdjust="spacingAndGlyphs">分析</text>
<rect x="518.5" y="640" width="70.5" height="34.8" fill="#e1e1e1" stroke="#adadad" stroke-width="1"/>
<text x="525" y="649.2" font-size="12.69" font-family="'Liberation Sans',sans-serif" fill="#222" dominant-baseline="central" font-weight="bold" textLength="58" lengthAdjust="spacingAndGlyphs">自动选区</text>
<text x="540" y="664.7" font-size="12.69" font-family="'Liberation Sans',sans-serif" fill="#222" dominant-baseline="central" font-weight="bold" textLength="28" lengthAdjust="spacingAndGlyphs">分析</text>
<rect x="518.5" y="685.5" width="70.5" height="34.4" fill="#e1e1e1" stroke="#adadad" stroke-width="1"/>
<text x="525" y="694.7" font-size="12.69" font-family="'Liberation Sans',sans-serif" fill="#222" dominant-baseline="central" font-weight="bold" textLength="58" lengthAdjust="spacingAndGlyphs">导出分析</text>
<text x="540" y="710.2" font-size="12.69" font-family="'Liberation Sans',sans-serif" fill="#222" dominant-baseline="central" font-weight="bold" textLength="28" lengthAdjust="spacingAndGlyphs">数据</text>
<rect x="594.5" y="591.8" width="384" height="129.2" fill="#fff" stroke="#a0a0a0" stroke-width="1"/>
<line x1="616.2" y1="593" x2="616.2" y2="706" stroke="#dcdcdc" stroke-width="1"/>
<line x1="716.5" y1="593" x2="716.5" y2="706" stroke="#dcdcdc" stroke-width="1"/>
<line x1="816.1" y1="593" x2="816.1" y2="706" stroke="#dcdcdc" stroke-width="1"/>
<line x1="915.8" y1="593" x2="915.8" y2="706" stroke="#dcdcdc" stroke-width="1"/>
<line x1="616" y1="641.2" x2="962" y2="641.2" stroke="#dcdcdc" stroke-width="1"/>
<line x1="616" y1="669.3" x2="962" y2="669.3" stroke="#dcdcdc" stroke-width="1"/>
<line x1="616" y1="697" x2="962" y2="697" stroke="#dcdcdc" stroke-width="1"/>
<text x="656" y="604" font-size="12.5" font-family="'Liberation Sans',sans-serif" fill="#111" dominant-baseline="central" textLength="20" lengthAdjust="spacingAndGlyphs">ROI</text>
<text x="752" y="604" font-size="12.5" font-family="'Liberation Sans',sans-serif" fill="#111" dominant-baseline="central" textLength="29" lengthAdjust="spacingAndGlyphs">NDVI</text>
<text x="857" y="604" font-size="12.5" font-family="'Liberation Sans',sans-serif" fill="#111" dominant-baseline="central" textLength="19" lengthAdjust="spacingAndGlyphs">PRI</text>
<text x="952" y="604" font-size="12.5" font-family="'Liberation Sans',sans-serif" fill="#111" dominant-baseline="central">C</text>
<text x="599.5" y="629" font-size="12.5" font-family="'Liberation Sans',sans-serif" fill="#222" dominant-baseline="central">1</text>
<text x="620" y="628" font-size="12.5" font-family="'Liberation Sans',sans-serif" fill="#111" dominant-baseline="central" textLength="29.2" lengthAdjust="spacingAndGlyphs">ROI1</text>
<text x="719" y="628" font-size="12.5" font-family="'Liberation Sans',sans-serif" fill="#111" dominant-baseline="central" textLength="41.5" lengthAdjust="spacingAndGlyphs">0.7188</text>
<text x="819" y="628" font-size="12.5" font-family="'Liberation Sans',sans-serif" fill="#111" dominant-baseline="central" textLength="41" lengthAdjust="spacingAndGlyphs">0.0066</text>
<text x="919" y="628" font-size="12.5" font-family="'Liberation Sans',sans-serif" fill="#111" dominant-baseline="central" textLength="41.5" lengthAdjust="spacingAndGlyphs">1.9774</text>
<text x="599.5" y="657" font-size="12.5" font-family="'Liberation Sans',sans-serif" fill="#222" dominant-baseline="central">2</text>
<text x="620" y="656" font-size="12.5" font-family="'Liberation Sans',sans-serif" fill="#111" dominant-baseline="central" textLength="29.2" lengthAdjust="spacingAndGlyphs">ROI2</text>
<text x="719" y="656" font-size="12.5" font-family="'Liberation Sans',sans-serif" fill="#111" dominant-baseline="central" textLength="41.5" lengthAdjust="spacingAndGlyphs">0.7588</text>
<text x="819" y="656" font-size="12.5" font-family="'Liberation Sans',sans-serif" fill="#111" dominant-baseline="central" textLength="41" lengthAdjust="spacingAndGlyphs">0.0165</text>
<text x="919" y="656" font-size="12.5" font-family="'Liberation Sans',sans-serif" fill="#111" dominant-baseline="central" textLength="41.5" lengthAdjust="spacingAndGlyphs">2.2339</text>
<text x="599.5" y="685" font-size="12.5" font-family="'Liberation Sans',sans-serif" fill="#222" dominant-baseline="central">3</text>
<text x="620" y="684" font-size="12.5" font-family="'Liberation Sans',sans-serif" fill="#111" dominant-baseline="central" textLength="29.2" lengthAdjust="spacingAndGlyphs">ROI3</text>
<text x="719" y="684" font-size="12.5" font-family="'Liberation Sans',sans-serif" fill="#111" dominant-baseline="central" textLength="41.5" lengthAdjust="spacingAndGlyphs">0.7258</text>
<text x="819" y="684" font-size="12.5" font-family="'Liberation Sans',sans-serif" fill="#111" dominant-baseline="central" textLength="41" lengthAdjust="spacingAndGlyphs">0.0114</text>
<text x="919" y="684" font-size="12.5" font-family="'Liberation Sans',sans-serif" fill="#111" dominant-baseline="central" textLength="41.5" lengthAdjust="spacingAndGlyphs">1.5342</text>
<rect x="962.3" y="592" width="15.7" height="114" fill="#f0f0f0"/>
<rect x="963.3" y="608" width="13.7" height="16" fill="#cdcdcd"/>
<path d="M966.15 603 L970.15 599 L974.15 603" fill="none" stroke="#444" stroke-width="1.2"/>
<path d="M966.15 695 L970.15 699 L974.15 695" fill="none" stroke="#444" stroke-width="1.2"/>
<rect x="595" y="706.2" width="383" height="14.8" fill="#f0f0f0"/>
<rect x="612" y="707.2" width="42.4" height="12.8" fill="#cdcdcd"/>
<path d="M605 709.6 L601 713.6 L605 717.6" fill="none" stroke="#444" stroke-width="1.2"/>
<path d="M968 709.6 L972 713.6 L968 717.6" fill="none" stroke="#444" stroke-width="1.2"/>
<rect x="981.8" y="137.2" width="158.2" height="207.8" fill="#fff" stroke="#d9d9d9" stroke-width="1"/>
<path d="M1036.5 137.2 L1036.5 122.3 L1063.9 122.3 L1063.9 137.2" fill="#f0f0f0" stroke="#d9d9d9" stroke-width="1"/>
<text x="1046" y="130" font-size="12.5" font-family="'Liberation Sans',sans-serif" fill="#222" dominant-baseline="central" textLength="8" lengthAdjust="spacingAndGlyphs">2</text>
<path d="M1064.9 137.2 L1064.9 122.3 L1092.8 122.3 L1092.8 137.2" fill="#f0f0f0" stroke="#d9d9d9" stroke-width="1"/>
<text x="1075" y="130" font-size="12.5" font-family="'Liberation Sans',sans-serif" fill="#222" dominant-baseline="central" textLength="8" lengthAdjust="spacingAndGlyphs">3</text>
<path d="M981.8 137.7 L981.8 121.2 L1035.5 121.2 L1035.5 137.7" fill="#fff" stroke="#d9d9d9" stroke-width="1"/>
<text x="993" y="129.7" font-size="12.5" font-family="'Liberation Sans',sans-serif" fill="#222" dominant-baseline="central" textLength="29" lengthAdjust="spacingAndGlyphs">区域1</text>
<rect x="985.7" y="143.1" width="69.3" height="15.7" fill="#e1e1e1" stroke="#adadad" stroke-width="1"/>
<text x="999" y="150.5" font-size="13.16" font-family="'Liberation Sans',sans-serif" fill="#333" dominant-baseline="central" textLength="41" lengthAdjust="spacingAndGlyphs">全不选</text>
<rect x="984.5" y="161.2" width="153" height="177.3" fill="#fff" stroke="#a0a0a0" stroke-width="1"/>
<text x="1004" y="173" font-size="12.5" font-family="'Liberation Sans',sans-serif" fill="#222" dominant-baseline="central" textLength="25" lengthAdjust="spacingAndGlyphs">复选</text>
<text x="1086" y="173" font-size="12.5" font-family="'Liberation Sans',sans-serif" fill="#222" dominant-baseline="central" textLength="25" lengthAdjust="spacingAndGlyphs">区域</text>
<line x1="1047.7" y1="163" x2="1047.7" y2="183" stroke="#e5e5e5" stroke-width="1"/>
<g clip-path="url(#clipRT)">
<rect x="1007.8" y="186" width="11.5" height="11.6" fill="#fff" stroke="#333" stroke-width="1"/>
<text x="1085" y="191.8" font-size="12.5" font-family="'Liberation Sans',sans-serif" fill="#111" dominant-baseline="central" textLength="25.5" lengthAdjust="spacingAndGlyphs">ROI1</text>
<rect x="1007.8" y="202.5" width="11.5" height="11.6" fill="#fff" stroke="#333" stroke-width="1"/>
<text x="1085" y="208.3" font-size="12.5" font-family="'Liberation Sans',sans-serif" fill="#111" dominant-baseline="central" textLength="25.5" lengthAdjust="spacingAndGlyphs">ROI2</text>
<rect x="1007.8" y="219" width="11.5" height="11.6" fill="#fff" stroke="#333" stroke-width="1"/>
<text x="1085" y="224.8" font-size="12.5" font-family="'Liberation Sans',sans-serif" fill="#111" dominant-baseline="central" textLength="25.5" lengthAdjust="spacingAndGlyphs">ROI3</text>
<rect x="1007.8" y="235.5" width="11.5" height="11.6" fill="#fff" stroke="#333" stroke-width="1"/>
<text x="1085" y="241.3" font-size="12.5" font-family="'Liberation Sans',sans-serif" fill="#111" dominant-baseline="central" textLength="25.5" lengthAdjust="spacingAndGlyphs">ROI4</text>
<rect x="1007.8" y="252" width="11.5" height="11.6" fill="#fff" stroke="#333" stroke-width="1"/>
<text x="1085" y="257.8" font-size="12.5" font-family="'Liberation Sans',sans-serif" fill="#111" dominant-baseline="central" textLength="25.5" lengthAdjust="spacingAndGlyphs">ROI5</text>
<rect x="1007.8" y="268.5" width="11.5" height="11.6" fill="#fff" stroke="#333" stroke-width="1"/>
<text x="1085" y="274.3" font-size="12.5" font-family="'Liberation Sans',sans-serif" fill="#111" dominant-baseline="central" textLength="25.5" lengthAdjust="spacingAndGlyphs">ROI6</text>
<rect x="1007.8" y="285" width="11.5" height="11.6" fill="#fff" stroke="#333" stroke-width="1"/>
<text x="1085" y="290.8" font-size="12.5" font-family="'Liberation Sans',sans-serif" fill="#111" dominant-baseline="central" textLength="25.5" lengthAdjust="spacingAndGlyphs">ROI7</text>
<rect x="1007.8" y="301.5" width="11.5" height="11.6" fill="#fff" stroke="#333" stroke-width="1"/>
<text x="1085" y="307.3" font-size="12.5" font-family="'Liberation Sans',sans-serif" fill="#111" dominant-baseline="central" textLength="25.5" lengthAdjust="spacingAndGlyphs">ROI8</text>
<rect x="1007.8" y="318" width="11.5" height="11.6" fill="#fff" stroke="#333" stroke-width="1"/>
<text x="1085" y="323.8" font-size="12.5" font-family="'Liberation Sans',sans-serif" fill="#111" dominant-baseline="central" textLength="25.5" lengthAdjust="spacingAndGlyphs">ROI9</text>
</g>
<rect x="1121.3" y="162" width="15.2" height="161" fill="#f0f0f0"/>
<rect x="1122.3" y="177" width="13.2" height="54" fill="#cdcdcd"/>
<path d="M1124.9 173 L1128.9 169 L1132.9 173" fill="none" stroke="#444" stroke-width="1.2"/>
<path d="M1124.9 312 L1128.9 316 L1132.9 312" fill="none" stroke="#444" stroke-width="1.2"/>
<rect x="985" y="323.2" width="151.5" height="14.8" fill="#f0f0f0"/>
<rect x="1001.4" y="324.2" width="84.4" height="12.8" fill="#cdcdcd"/>
<path d="M995 326.6 L991 330.6 L995 334.6" fill="none" stroke="#444" stroke-width="1.2"/>
<path d="M1126.5 326.6 L1130.5 330.6 L1126.5 334.6" fill="none" stroke="#444" stroke-width="1.2"/>
<rect x="983" y="348" width="51" height="19" fill="#f0f0f0"/>
<line x1="1034" y1="366.5" x2="1140" y2="366.5" stroke="#d9d9d9" stroke-width="1"/>
<text x="999.7" y="358.2" font-size="12.5" font-family="'Liberation Sans',sans-serif" fill="#222" dominant-baseline="central" textLength="23.3" lengthAdjust="spacingAndGlyphs">图参</text>
<rect x="983.2" y="369.8" width="155.3" height="346.7" fill="#fff" stroke="#a0a0a0" stroke-width="1"/>
<rect x="1122.7" y="370.3" width="15.1" height="345.7" fill="#f0f0f0"/>
<rect x="1123.7" y="451.5" width="13.1" height="249.5" fill="#cdcdcd"/>
<path d="M1126.25 381.3 L1130.25 377.3 L1134.25 381.3" fill="none" stroke="#444" stroke-width="1.2"/>
<path d="M1126.25 705 L1130.25 709 L1134.25 705" fill="none" stroke="#444" stroke-width="1.2"/>
<rect x="1026.5" y="395" width="11.6" height="11.6" fill="#fff" stroke="#333" stroke-width="1"/>
<path d="M1028.52 401.05 L1031.29 403.82 L1036.33 397.78" fill="none" stroke="#222" stroke-width="1.1"/>
<text x="1043" y="400.8" font-size="12.5" font-family="'Liberation Sans',sans-serif" fill="#111" dominant-baseline="central">NPQI</text>
<rect x="1026.5" y="411.57" width="11.6" height="11.6" fill="#fff" stroke="#333" stroke-width="1"/>
<path d="M1028.52 417.62 L1031.29 420.39 L1036.33 414.35" fill="none" stroke="#222" stroke-width="1.1"/>
<text x="1043" y="417.37" font-size="12.5" font-family="'Liberation Sans',sans-serif" fill="#111" dominant-baseline="central">PSRI</text>
<rect x="1026.5" y="428.14" width="11.6" height="11.6" fill="#fff" stroke="#333" stroke-width="1"/>
<path d="M1028.52 434.19 L1031.29 436.96 L1036.33 430.92" fill="none" stroke="#222" stroke-width="1.1"/>
<text x="1043" y="433.94" font-size="12.5" font-family="'Liberation Sans',sans-serif" fill="#111" dominant-baseline="central">GNDVI</text>
<rect x="1026.5" y="444.71" width="11.6" height="11.6" fill="#fff" stroke="#333" stroke-width="1"/>
<path d="M1028.52 450.76 L1031.29 453.53 L1036.33 447.49" fill="none" stroke="#222" stroke-width="1.1"/>
<text x="1043" y="450.51" font-size="12.5" font-family="'Liberation Sans',sans-serif" fill="#111" dominant-baseline="central">WBI</text>
<rect x="1026.5" y="461.28" width="11.6" height="11.6" fill="#fff" stroke="#333" stroke-width="1"/>
<path d="M1028.52 467.33 L1031.29 470.1 L1036.33 464.06" fill="none" stroke="#222" stroke-width="1.1"/>
<text x="1043" y="467.08" font-size="12.5" font-family="'Liberation Sans',sans-serif" fill="#111" dominant-baseline="central">ARI1</text>
<rect x="1026.5" y="477.85" width="11.6" height="11.6" fill="#fff" stroke="#333" stroke-width="1"/>
<path d="M1028.52 483.9 L1031.29 486.67 L1036.33 480.63" fill="none" stroke="#222" stroke-width="1.1"/>
<text x="1043" y="483.65" font-size="12.5" font-family="'Liberation Sans',sans-serif" fill="#111" dominant-baseline="central">ARI2</text>
<rect x="1026.5" y="494.42" width="11.6" height="11.6" fill="#fff" stroke="#333" stroke-width="1"/>
<path d="M1028.52 500.47 L1031.29 503.24 L1036.33 497.2" fill="none" stroke="#222" stroke-width="1.1"/>
<text x="1043" y="500.22" font-size="12.5" font-family="'Liberation Sans',sans-serif" fill="#111" dominant-baseline="central">CRI1</text>
<rect x="1026.5" y="510.99" width="11.6" height="11.6" fill="#fff" stroke="#333" stroke-width="1"/>
<path d="M1028.52 517.04 L1031.29 519.81 L1036.33 513.77" fill="none" stroke="#222" stroke-width="1.1"/>
<text x="1043" y="516.79" font-size="12.5" font-family="'Liberation Sans',sans-serif" fill="#111" dominant-baseline="central">CRI2</text>
<rect x="1026.5" y="527.56" width="11.6" height="11.6" fill="#fff" stroke="#333" stroke-width="1"/>
<path d="M1028.52 533.61 L1031.29 536.38 L1036.33 530.34" fill="none" stroke="#222" stroke-width="1.1"/>
<text x="1043" y="533.36" font-size="12.5" font-family="'Liberation Sans',sans-serif" fill="#111" dominant-baseline="central">EVI</text>
<rect x="1026.5" y="544.13" width="11.6" height="11.6" fill="#fff" stroke="#333" stroke-width="1"/>
<path d="M1028.52 550.18 L1031.29 552.95 L1036.33 546.91" fill="none" stroke="#222" stroke-width="1.1"/>
<text x="1043" y="549.93" font-size="12.5" font-family="'Liberation Sans',sans-serif" fill="#111" dominant-baseline="central">NDRE</text>
<rect x="1026.5" y="560.7" width="11.6" height="11.6" fill="#fff" stroke="#333" stroke-width="1"/>
<path d="M1028.52 566.75 L1031.29 569.52 L1036.33 563.48" fill="none" stroke="#222" stroke-width="1.1"/>
<text x="1043" y="566.5" font-size="12.5" font-family="'Liberation Sans',sans-serif" fill="#111" dominant-baseline="central">LCI</text>
<rect x="1026.5" y="577.27" width="11.6" height="11.6" fill="#fff" stroke="#333" stroke-width="1"/>
<path d="M1028.52 583.32 L1031.29 586.09 L1036.33 580.05" fill="none" stroke="#222" stroke-width="1.1"/>
<text x="1043" y="583.07" font-size="12.5" font-family="'Liberation Sans',sans-serif" fill="#111" dominant-baseline="central">NDNI</text>
<path d="M987.5 597.64 L991.5 601.64 L995.5 597.64" fill="none" stroke="#444" stroke-width="1.2"/>
<rect x="1005.5" y="593.84" width="11.8" height="11.6" fill="#fff" stroke="#333" stroke-width="1"/>
<path d="M1007.56 599.89 L1010.38 602.66 L1015.5 596.62" fill="none" stroke="#222" stroke-width="1.1"/>
<text x="1022" y="599.64" font-size="12.5" font-family="'Liberation Sans',sans-serif" fill="#111" dominant-baseline="central" textLength="46" lengthAdjust="spacingAndGlyphs">形态分析</text>
<rect x="1026.5" y="610.41" width="11.6" height="11.6" fill="#fff" stroke="#333" stroke-width="1"/>
<path d="M1028.52 616.46 L1031.29 619.23 L1036.33 613.19" fill="none" stroke="#222" stroke-width="1.1"/>
<text x="1043" y="616.21" font-size="12.5" font-family="'Liberation Sans',sans-serif" fill="#111" dominant-baseline="central">PixelsNum...</text>
<rect x="1026.5" y="626.98" width="11.6" height="11.6" fill="#fff" stroke="#333" stroke-width="1"/>
<path d="M1028.52 633.03 L1031.29 635.8 L1036.33 629.76" fill="none" stroke="#222" stroke-width="1.1"/>
<text x="1043" y="632.78" font-size="12.5" font-family="'Liberation Sans',sans-serif" fill="#111" dominant-baseline="central">Calibrated...</text>
<rect x="1026.5" y="643.55" width="11.6" height="11.6" fill="#fff" stroke="#333" stroke-width="1"/>
<path d="M1028.52 649.6 L1031.29 652.37 L1036.33 646.33" fill="none" stroke="#222" stroke-width="1.1"/>
<text x="1043" y="649.35" font-size="12.5" font-family="'Liberation Sans',sans-serif" fill="#111" dominant-baseline="central">Circularity</text>
<rect x="1026.5" y="660.12" width="11.6" height="11.6" fill="#fff" stroke="#333" stroke-width="1"/>
<path d="M1028.52 666.17 L1031.29 668.94 L1036.33 662.9" fill="none" stroke="#222" stroke-width="1.1"/>
<text x="1043" y="665.92" font-size="12.5" font-family="'Liberation Sans',sans-serif" fill="#111" dominant-baseline="central">Aspectratio</text>
<rect x="1026.5" y="676.69" width="11.6" height="11.6" fill="#fff" stroke="#333" stroke-width="1"/>
<path d="M1028.52 682.74 L1031.29 685.51 L1036.33 679.47" fill="none" stroke="#222" stroke-width="1.1"/>
<text x="1043" y="682.49" font-size="12.5" font-family="'Liberation Sans',sans-serif" fill="#111" dominant-baseline="central">Solidity</text>
<rect x="1026.5" y="693.26" width="11.6" height="11.6" fill="#fff" stroke="#333" stroke-width="1"/>
<path d="M1028.52 699.31 L1031.29 702.08 L1036.33 696.04" fill="none" stroke="#222" stroke-width="1.1"/>
<text x="1043" y="699.06" font-size="12.5" font-family="'Liberation Sans',sans-serif" fill="#111" dominant-baseline="central">Roundness</text>
<rect x="1142" y="749" width="1.5" height="1.5" fill="#b0b0b0"/>
<rect x="1145" y="749" width="1.5" height="1.5" fill="#b0b0b0"/>
<rect x="1148" y="749" width="1.5" height="1.5" fill="#b0b0b0"/>
<rect x="1145" y="746" width="1.5" height="1.5" fill="#b0b0b0"/>
<rect x="1148" y="746" width="1.5" height="1.5" fill="#b0b0b0"/>
<rect x="1148" y="743" width="1.5" height="1.5" fill="#b0b0b0"/>
<rect x="1179" y="6" width="1052" height="748" fill="#f0f0f0"/>
<rect x="1179" y="6" width="1052" height="46" fill="#fff"/>
<rect x="1179.5" y="6.5" width="1051" height="747" fill="none" stroke="#3f3f3f" stroke-width="1"/>
<rect x="1180" y="52" width="1050" height="11" fill="#f0f0f0"/>
<line x1="1180" y1="63.5" x2="2230" y2="63.5" stroke="#c8c8c8" stroke-width="1"/>
<rect x="1183" y="55" width="1.2" height="1.2" fill="#999"/>
<rect x="1183" y="58" width="1.2" height="1.2" fill="#999"/>
<rect x="1183" y="61" width="1.2" height="1.2" fill="#999"/>
<rect x="1186.8" y="14.5" width="13.3" height="10.5" fill="#eef3f5" stroke="#b8bcc0" stroke-width="1"/>
<rect x="1188.5" y="16.3" width="5.2" height="7.1" fill="#3a8a70"/>
<rect x="1198" y="16" width="1.6" height="5" fill="#5a90a0"/>
<text x="1205" y="20.5" font-size="12.5" font-family="'Liberation Sans',sans-serif" fill="#111" dominant-baseline="central" textLength="60" lengthAdjust="spacingAndGlyphs">FluorVision</text>
<line x1="2115.6" y1="20.5" x2="2127" y2="20.5" stroke="#111" stroke-width="1"/>
<rect x="2159.5" y="15.5" width="9.5" height="10" fill="none" stroke="#111" stroke-width="1"/>
<line x1="2203" y1="15" x2="2214" y2="25.5" stroke="#111" stroke-width="1.1"/>
<line x1="2203" y1="25.5" x2="2214" y2="15" stroke="#111" stroke-width="1.1"/>
<text x="1185.7" y="44.2" font-size="12" font-family="'Liberation Sans',sans-serif" fill="#111" dominant-baseline="central" textLength="44.9" lengthAdjust="spacingAndGlyphs">选区分析</text>
<text x="1245.3" y="44.2" font-size="12" font-family="'Liberation Sans',sans-serif" fill="#111" dominant-baseline="central" textLength="23" lengthAdjust="spacingAndGlyphs">功能</text>
<text x="1184.7" y="90.4" font-size="13.16" font-family="'Liberation Sans',sans-serif" fill="#333" dominant-baseline="central" textLength="72.8" lengthAdjust="spacingAndGlyphs">选择DAT文件</text>
<rect x="1268.3" y="83" width="380.7" height="18" fill="#fff" stroke="#7a7a7a" stroke-width="1"/>
<text x="1270" y="92.5" font-size="12.5" font-family="'Liberation Mono',monospace" fill="#222" dominant-baseline="central" textLength="254" lengthAdjust="spacingAndGlyphs">E:/data/365-1102/huanglu/FM D mask.dat</text>
<rect x="1652.5" y="84.1" width="84" height="15.6" fill="#e1e1e1" stroke="#adadad" stroke-width="1"/>
<text x="1657" y="91.2" font-size="13.16" font-family="'Liberation Sans',sans-serif" fill="#333" dominant-baseline="central" textLength="74" lengthAdjust="spacingAndGlyphs">选择dat文件</text>
<text x="1791.8" y="91.2" font-size="13.16" font-family="'Liberation Sans',sans-serif" fill="#333" dominant-baseline="central" textLength="78.6" lengthAdjust="spacingAndGlyphs">水平像素宽度</text>
<rect x="1882.5" y="83" width="60" height="18" fill="#fff" stroke="#7a7a7a" stroke-width="1"/>
<text x="1885" y="92.5" font-size="12.5" font-family="'Liberation Mono',monospace" fill="#111" dominant-baseline="central" textLength="42" lengthAdjust="spacingAndGlyphs">0.0200</text>
<text x="1952.4" y="91" font-size="13" font-family="'Liberation Mono',monospace" fill="#333" dominant-baseline="central" textLength="14.6" lengthAdjust="spacingAndGlyphs">cm</text>
<text x="1986.8" y="91.2" font-size="13.16" font-family="'Liberation Sans',sans-serif" fill="#333" dominant-baseline="central" textLength="79.2" lengthAdjust="spacingAndGlyphs">垂直像素宽度</text>
<rect x="2075.8" y="83" width="59.2" height="18" fill="#fff" stroke="#7a7a7a" stroke-width="1"/>
<text x="2078" y="92.5" font-size="12.5" font-family="'Liberation Mono',monospace" fill="#111" dominant-baseline="central" textLength="42" lengthAdjust="spacingAndGlyphs">0.0200</text>
<text x="2142.5" y="91" font-size="13" font-family="'Liberation Mono',monospace" fill="#333" dominant-baseline="central" textLength="14.5" lengthAdjust="spacingAndGlyphs">cm</text>
<text x="1190" y="123.4" font-size="13.16" font-family="'Liberation Sans',sans-serif" fill="#333" dominant-baseline="central" textLength="65" lengthAdjust="spacingAndGlyphs">可视化表达</text>
<rect x="1267.5" y="114.8" width="380.5" height="18.5" fill="#e3e3e3" stroke="#adadad" stroke-width="1"/>
<rect x="1270.4" y="119.5" width="261.6" height="8.7" fill="url(#gh)"/>
<text x="1535" y="124" font-size="12.5" font-family="'Liberation Sans',sans-serif" fill="#222" dominant-baseline="central" textLength="21" lengthAdjust="spacingAndGlyphs">绿红</text>
<path d="M1636 122 L1640 126 L1644 122" fill="none" stroke="#444" stroke-width="1"/>
<rect x="1651.3" y="118.5" width="11.4" height="11.4" fill="#fff" stroke="#333" stroke-width="1"/>
<text x="1668" y="124" font-size="12" font-family="'Liberation Sans',sans-serif" fill="#222" dominant-baseline="central" textLength="52" lengthAdjust="spacingAndGlyphs">逆时针90°</text>
<rect x="1726.1" y="118.5" width="11.4" height="11.4" fill="#fff" stroke="#333" stroke-width="1"/>
<text x="1743" y="124" font-size="12" font-family="'Liberation Sans',sans-serif" fill="#222" dominant-baseline="central" textLength="50" lengthAdjust="spacingAndGlyphs">顺时针90°</text>
<rect x="1181.5" y="161.5" width="79" height="494.5" fill="#fff" stroke="#a0a0a0" stroke-width="1"/>
<rect x="1243.4" y="162" width="16.6" height="494" fill="#f0f0f0"/>
<rect x="1244.4" y="177" width="14.6" height="57" fill="#cdcdcd"/>
<path d="M1247.7 173 L1251.7 169 L1255.7 173" fill="none" stroke="#444" stroke-width="1.2"/>
<path d="M1247.7 645 L1251.7 649 L1255.7 645" fill="none" stroke="#444" stroke-width="1.2"/>
<text x="1197" y="172.8" font-size="12.5" font-family="'Liberation Sans',sans-serif" fill="#111" dominant-baseline="central" textLength="32" lengthAdjust="spacingAndGlyphs">Bands</text>
<text x="1198.3" y="191.3" font-size="12.5" font-family="'Liberation Sans',sans-serif" fill="#111" dominant-baseline="central" textLength="30.1" lengthAdjust="spacingAndGlyphs">397.7</text>
<text x="1198.3" y="207.67" font-size="12.5" font-family="'Liberation Sans',sans-serif" fill="#111" dominant-baseline="central" textLength="30.1" lengthAdjust="spacingAndGlyphs">400.3</text>
<text x="1198.3" y="224.04" font-size="12.5" font-family="'Liberation Sans',sans-serif" fill="#111" dominant-baseline="central" textLength="30.1" lengthAdjust="spacingAndGlyphs">402.9</text>
<text x="1198.3" y="240.41" font-size="12.5" font-family="'Liberation Sans',sans-serif" fill="#111" dominant-baseline="central" textLength="30.1" lengthAdjust="spacingAndGlyphs">405.5</text>
<text x="1198.3" y="256.78" font-size="12.5" font-family="'Liberation Sans',sans-serif" fill="#111" dominant-baseline="central" textLength="30.1" lengthAdjust="spacingAndGlyphs">408.1</text>
<text x="1198.3" y="273.15" font-size="12.5" font-family="'Liberation Sans',sans-serif" fill="#111" dominant-baseline="central" textLength="30.1" lengthAdjust="spacingAndGlyphs">410.8</text>
<text x="1198.3" y="289.52" font-size="12.5" font-family="'Liberation Sans',sans-serif" fill="#111" dominant-baseline="central" textLength="30.1" lengthAdjust="spacingAndGlyphs">413.4</text>
<text x="1198.3" y="305.89" font-size="12.5" font-family="'Liberation Sans',sans-serif" fill="#111" dominant-baseline="central" textLength="30.1" lengthAdjust="spacingAndGlyphs">416.0</text>
<text x="1198.3" y="322.26" font-size="12.5" font-family="'Liberation Sans',sans-serif" fill="#111" dominant-baseline="central" textLength="30.1" lengthAdjust="spacingAndGlyphs">418.6</text>
<text x="1198.3" y="338.63" font-size="12.5" font-family="'Liberation Sans',sans-serif" fill="#111" dominant-baseline="central" textLength="30.1" lengthAdjust="spacingAndGlyphs">421.2</text>
<text x="1198.3" y="355" font-size="12.5" font-family="'Liberation Sans',sans-serif" fill="#111" dominant-baseline="central" textLength="30.1" lengthAdjust="spacingAndGlyphs">423.9</text>
<text x="1198.3" y="371.37" font-size="12.5" font-family="'Liberation Sans',sans-serif" fill="#111" dominant-baseline="central" textLength="30.1" lengthAdjust="spacingAndGlyphs">426.5</text>
<text x="1198.3" y="387.74" font-size="12.5" font-family="'Liberation Sans',sans-serif" fill="#111" dominant-baseline="central" textLength="30.1" lengthAdjust="spacingAndGlyphs">429.1</text>
<text x="1198.3" y="404.11" font-size="12.5" font-family="'Liberation Sans',sans-serif" fill="#111" dominant-baseline="central" textLength="30.1" lengthAdjust="spacingAndGlyphs">431.7</text>
<text x="1198.3" y="420.48" font-size="12.5" font-family="'Liberation Sans',sans-serif" fill="#111" dominant-baseline="central" textLength="30.1" lengthAdjust="spacingAndGlyphs">434.4</text>
<text x="1198.3" y="436.85" font-size="12.5" font-family="'Liberation Sans',sans-serif" fill="#111" dominant-baseline="central" textLength="30.1" lengthAdjust="spacingAndGlyphs">437.0</text>
<text x="1198.3" y="453.22" font-size="12.5" font-family="'Liberation Sans',sans-serif" fill="#111" dominant-baseline="central" textLength="30.1" lengthAdjust="spacingAndGlyphs">439.6</text>
<text x="1198.3" y="469.59" font-size="12.5" font-family="'Liberation Sans',sans-serif" fill="#111" dominant-baseline="central" textLength="30.1" lengthAdjust="spacingAndGlyphs">442.3</text>
<text x="1198.3" y="485.96" font-size="12.5" font-family="'Liberation Sans',sans-serif" fill="#111" dominant-baseline="central" textLength="30.1" lengthAdjust="spacingAndGlyphs">444.9</text>
<text x="1198.3" y="502.33" font-size="12.5" font-family="'Liberation Sans',sans-serif" fill="#111" dominant-baseline="central" textLength="30.1" lengthAdjust="spacingAndGlyphs">447.5</text>
<text x="1198.3" y="518.7" font-size="12.5" font-family="'Liberation Sans',sans-serif" fill="#111" dominant-baseline="central" textLength="30.1" lengthAdjust="spacingAndGlyphs">450.2</text>
<text x="1198.3" y="535.07" font-size="12.5" font-family="'Liberation Sans',sans-serif" fill="#111" dominant-baseline="central" textLength="30.1" lengthAdjust="spacingAndGlyphs">452.8</text>
<text x="1198.3" y="551.44" font-size="12.5" font-family="'Liberation Sans',sans-serif" fill="#111" dominant-baseline="central" textLength="30.1" lengthAdjust="spacingAndGlyphs">455.4</text>
<text x="1198.3" y="567.81" font-size="12.5" font-family="'Liberation Sans',sans-serif" fill="#111" dominant-baseline="central" textLength="30.1" lengthAdjust="spacingAndGlyphs">458.1</text>
<text x="1198.3" y="584.18" font-size="12.5" font-family="'Liberation Sans',sans-serif" fill="#111" dominant-baseline="central" textLength="30.1" lengthAdjust="spacingAndGlyphs">460.7</text>
<text x="1198.3" y="600.55" font-size="12.5" font-family="'Liberation Sans',sans-serif" fill="#111" dominant-baseline="central" textLength="30.1" lengthAdjust="spacingAndGlyphs">463.3</text>
<text x="1198.3" y="616.92" font-size="12.5" font-family="'Liberation Sans',sans-serif" fill="#111" dominant-baseline="central" textLength="30.1" lengthAdjust="spacingAndGlyphs">466.0</text>
<text x="1198.3" y="633.29" font-size="12.5" font-family="'Liberation Sans',sans-serif" fill="#111" dominant-baseline="central" textLength="30.1" lengthAdjust="spacingAndGlyphs">468.6</text>
<rect x="1181.5" y="641.3" width="61.9" height="14.3" fill="#3aa8e0"/>
<text x="1198.3" y="648.5" font-size="12.5" font-family="'Liberation Sans',sans-serif" fill="#7cc8ec" dominant-baseline="central" textLength="30.1" lengthAdjust="spacingAndGlyphs">471.3</text>
<circle cx="1191.7" cy="671.8" r="6.3" fill="#fff" stroke="#333" stroke-width="1"/>
<circle cx="1191.7" cy="671.8" r="3.47" fill="#222"/>
<text x="1203" y="672.3" font-size="10.5" font-family="'Liberation Serif',serif" fill="#222" dominant-baseline="central" font-weight="bold" textLength="6.5" lengthAdjust="spacingAndGlyphs">B</text>
<rect x="1218.7" y="664.8" width="41.8" height="16.2" fill="#fff" stroke="#7a7a7a" stroke-width="1"/>
<text x="1220.5" y="673.4" font-size="13" font-family="'Liberation Mono',monospace" fill="#222" dominant-baseline="central" textLength="35.5" lengthAdjust="spacingAndGlyphs">471.3</text>
<circle cx="1191.7" cy="698.8" r="6.3" fill="#fff" stroke="#333" stroke-width="1"/>
<text x="1203" y="699.3" font-size="10.5" font-family="'Liberation Serif',serif" fill="#222" dominant-baseline="central" font-weight="bold" textLength="6.5" lengthAdjust="spacingAndGlyphs">G</text>
<rect x="1218.7" y="691.9" width="41.8" height="16.6" fill="#fff" stroke="#7a7a7a" stroke-width="1"/>
<text x="1220.5" y="700.7" font-size="13" font-family="'Liberation Mono',monospace" fill="#222" dominant-baseline="central" textLength="35.5" lengthAdjust="spacingAndGlyphs">540.2</text>
<circle cx="1191.7" cy="727.8" r="6.3" fill="#fff" stroke="#333" stroke-width="1"/>
<text x="1203" y="728.3" font-size="10.5" font-family="'Liberation Serif',serif" fill="#222" dominant-baseline="central" font-weight="bold" textLength="6.5" lengthAdjust="spacingAndGlyphs">R</text>
<rect x="1218.7" y="719.7" width="41.8" height="16.6" fill="#fff" stroke="#7a7a7a" stroke-width="1"/>
<text x="1220.5" y="728.5" font-size="13" font-family="'Liberation Mono',monospace" fill="#222" dominant-baseline="central" textLength="35.5" lengthAdjust="spacingAndGlyphs">620.6</text>
<rect x="1263.5" y="163" width="387.5" height="572" fill="#fff" stroke="#d9d9d9" stroke-width="1"/>
<path d="M1265.9 163 L1265.9 146.2 L1338.8 146.2 L1338.8 163" fill="#f0f0f0" stroke="#d9d9d9" stroke-width="1"/>
<text x="1276" y="154.05" font-size="12.69" font-family="'Liberation Sans',sans-serif" fill="#222" dominant-baseline="central" textLength="52" lengthAdjust="spacingAndGlyphs">光谱图像</text>
<path d="M1339.8 163 L1339.8 146.2 L1413.5 146.2 L1413.5 163" fill="#f0f0f0" stroke="#d9d9d9" stroke-width="1"/>
<text x="1351" y="154.05" font-size="12.69" font-family="'Liberation Sans',sans-serif" fill="#222" dominant-baseline="central" textLength="52" lengthAdjust="spacingAndGlyphs">参数图像</text>
<path d="M1414.5 163.5 L1414.5 144.8 L1484.5 144.8 L1484.5 163.5" fill="#fff" stroke="#d9d9d9" stroke-width="1"/>
<text x="1427" y="153.6" font-size="12.69" font-family="'Liberation Sans',sans-serif" fill="#222" dominant-baseline="central" textLength="52.5" lengthAdjust="spacingAndGlyphs">波段融合</text>
<rect x="1265.5" y="167" width="28.5" height="16" fill="#fff" stroke="#7a7a7a" stroke-width="1"/>
<text x="1268" y="175.5" font-size="13" font-family="'Liberation Sans',sans-serif" fill="#111" dominant-baseline="central" textLength="22" lengthAdjust="spacingAndGlyphs">674</text>
<text x="1296" y="173" font-size="12" font-family="'Liberation Sans',sans-serif" fill="#222" dominant-baseline="central" textLength="6" lengthAdjust="spacingAndGlyphs">~</text>
<rect x="1306.8" y="167" width="28.2" height="16" fill="#fff" stroke="#7a7a7a" stroke-width="1"/>
<text x="1309" y="175.5" font-size="13" font-family="'Liberation Sans',sans-serif" fill="#111" dominant-baseline="central" textLength="21" lengthAdjust="spacingAndGlyphs">753</text>
<rect x="1339" y="167" width="35.2" height="15.1" fill="#e1e1e1" stroke="#adadad" stroke-width="1"/>
<text x="1343" y="174.2" font-size="13.16" font-family="'Liberation Sans',sans-serif" fill="#333" dominant-baseline="central" textLength="27" lengthAdjust="spacingAndGlyphs">融合</text>
<text x="1377" y="174.2" font-size="13.16" font-family="'Liberation Sans',sans-serif" fill="#333" dominant-baseline="central" textLength="51" lengthAdjust="spacingAndGlyphs">掩膜参数</text>
<rect x="1438" y="166" width="64.5" height="16.5" fill="#e5e5e5" stroke="#adadad" stroke-width="1"/>
<text x="1440.5" y="174.75" font-size="9.5" font-family="'Liberation Sans',sans-serif" fill="#222" dominant-baseline="central" textLength="37.5" lengthAdjust="spacingAndGlyphs">F740/F690</text>
<path d="M1489 172.25 L1493 176.25 L1497 172.25" fill="none" stroke="#444" stroke-width="1"/>
<circle cx="1516.8" cy="175.2" r="6.2" fill="#fff" stroke="#333" stroke-width="1"/>
<text x="1528.7" y="175.7" font-size="12.5" font-family="'Liberation Sans',sans-serif" fill="#222" dominant-baseline="central">1</text>
<circle cx="1547" cy="175.2" r="6.2" fill="#fff" stroke="#333" stroke-width="1"/>
<circle cx="1547" cy="175.2" r="3.41" fill="#222"/>
<text x="1558" y="175.7" font-size="12.5" font-family="'Liberation Sans',sans-serif" fill="#222" dominant-baseline="central">2</text>
<circle cx="1576.6" cy="175.2" r="6.2" fill="#fff" stroke="#333" stroke-width="1"/>
<text x="1587.6" y="175.7" font-size="12.5" font-family="'Liberation Sans',sans-serif" fill="#222" dominant-baseline="central">3</text>
<circle cx="1617.5" cy="176.9" r="6.2" fill="#fff" stroke="#333" stroke-width="1"/>
<text x="1628.6" y="177.4" font-size="12.5" font-family="'Liberation Sans',sans-serif" fill="#222" dominant-baseline="central">1</text>
<circle cx="1617.5" cy="198.2" r="6.2" fill="#fff" stroke="#333" stroke-width="1"/>
<circle cx="1617.5" cy="198.2" r="3.41" fill="#222"/>
<text x="1628.6" y="198.7" font-size="12.5" font-family="'Liberation Sans',sans-serif" fill="#222" dominant-baseline="central">2</text>
<circle cx="1617.5" cy="221" r="6.2" fill="#fff" stroke="#333" stroke-width="1"/>
<text x="1628.6" y="221.5" font-size="12.5" font-family="'Liberation Sans',sans-serif" fill="#222" dominant-baseline="central">3</text>
<rect x="1270.5" y="187.9" width="40.5" height="18.1" fill="#fff" stroke="#7a7a7a" stroke-width="1"/>
<text x="1273" y="197.45" font-size="13" font-family="'Liberation Mono',monospace" fill="#222" dominant-baseline="central" textLength="27" lengthAdjust="spacingAndGlyphs">0.00</text>
<rect x="1320.5" y="190.5" width="227" height="3.5" fill="#e7e7e7" stroke="#dadada" stroke-width="1"/>
<rect x="1320.7" y="186" width="9.1" height="10.2" fill="#0078d7"/>
<rect x="1320.5" y="201.5" width="227" height="3.5" fill="#e7e7e7" stroke="#dadada" stroke-width="1"/>
<rect x="1534.6" y="196.5" width="9.4" height="10.7" fill="#0078d7"/>
<rect x="1553.7" y="188" width="40.8" height="17.8" fill="#fff" stroke="#7a7a7a" stroke-width="1"/>
<text x="1556" y="197.4" font-size="13" font-family="'Liberation Mono',monospace" fill="#222" dominant-baseline="central" textLength="30" lengthAdjust="spacingAndGlyphs">9.80</text>
<text x="1273" y="218.2" font-size="13.16" font-family="'Liberation Sans',sans-serif" fill="#333" dominant-baseline="central" textLength="52" lengthAdjust="spacingAndGlyphs">噪点阈值</text>
<rect x="1332.5" y="210.1" width="40" height="17.9" fill="#fff" stroke="#7a7a7a" stroke-width="1"/>
<text x="1335" y="219.55" font-size="13" font-family="'Liberation Sans',sans-serif" fill="#111" dominant-baseline="central" textLength="13" lengthAdjust="spacingAndGlyphs">60</text>
<rect x="1378.5" y="213.5" width="11.4" height="11.4" fill="#fff" stroke="#333" stroke-width="1"/>
<path d="M1380.48 219.45 L1383.21 222.18 L1388.17 216.22" fill="none" stroke="#222" stroke-width="1.1"/>
<text x="1396" y="218.2" font-size="13.16" font-family="'Liberation Sans',sans-serif" fill="#333" dominant-baseline="central" textLength="51" lengthAdjust="spacingAndGlyphs">自动选区</text>
<rect x="1521" y="211.8" width="72" height="14.9" fill="#e1e1e1" stroke="#adadad" stroke-width="1"/>
<text x="1532" y="218.7" font-size="13.16" font-family="'Liberation Sans',sans-serif" fill="#333" dominant-baseline="central" textLength="50" lengthAdjust="spacingAndGlyphs">导出图片</text>
<rect x="1265" y="233" width="330.5" height="501" fill="#fff" stroke="#66b8a8" stroke-width="1"/>
<rect x="1265.5" y="250.2" width="329.5" height="483.8" fill="#000"/>
<g clip-path="url(#clipR)">
<clipPath id="lrc1"><path d="M1358 279.5 C1406.96 278 1426 301.28 1426 330.92 C1426 383.54 1367.52 404 1358 404 C1348.48 404 1290 383.54 1290 330.92 C1290 301.28 1309.04 278 1358 279.5Z"/></clipPath>
<path d="M1358 279.5 C1406.96 278 1426 301.28 1426 330.92 C1426 383.54 1367.52 404 1358 404 C1348.48 404 1290 383.54 1290 330.92 C1290 301.28 1309.04 278 1358 279.5Z" fill="url(#lr0)" stroke="#58d820" stroke-width="1.3"/>
<g clip-path="url(#lrc1)" fill="none">
<path d="M1358 284.3 L1358 404" stroke="#70d028" stroke-width="1.8"/>
<path d="M1358 303.2 Q1385.2 293.12 1426 267.92 M1358 303.2 Q1330.8 293.12 1290 267.92" stroke="#c8e830" stroke-width="1.2" opacity="0.7"/>
<path d="M1358 320.84 Q1385.2 310.76 1426 285.56 M1358 320.84 Q1330.8 310.76 1290 285.56" stroke="#c8e830" stroke-width="1.2" opacity="0.7"/>
<path d="M1358 338.48 Q1385.2 328.4 1426 303.2 M1358 338.48 Q1330.8 328.4 1290 303.2" stroke="#c8e830" stroke-width="1.2" opacity="0.7"/>
<path d="M1358 356.12 Q1385.2 346.04 1426 320.84 M1358 356.12 Q1330.8 346.04 1290 320.84" stroke="#c8e830" stroke-width="1.2" opacity="0.7"/>
<path d="M1358 373.76 Q1385.2 363.68 1426 338.48 M1358 373.76 Q1330.8 363.68 1290 338.48" stroke="#c8e830" stroke-width="1.2" opacity="0.7"/>
<path d="M1358 391.4 Q1385.2 381.32 1426 356.12 M1358 391.4 Q1330.8 381.32 1290 356.12" stroke="#c8e830" stroke-width="1.2" opacity="0.7"/>
</g>
<clipPath id="lrc2"><path d="M1485 291.5 C1515.26 290 1529.5 307.23 1529.5 329.15 C1529.5 360.73 1496.12 377 1485 377 C1473.88 377 1440.5 360.73 1440.5 329.15 C1440.5 307.23 1454.74 290 1485 291.5Z"/></clipPath>
<path d="M1485 291.5 C1515.26 290 1529.5 307.23 1529.5 329.15 C1529.5 360.73 1496.12 377 1485 377 C1473.88 377 1440.5 360.73 1440.5 329.15 C1440.5 307.23 1454.74 290 1485 291.5Z" fill="url(#lr1)" stroke="#58d820" stroke-width="1.3"/>
<g clip-path="url(#lrc2)" fill="none">
<path d="M1485 294.35 L1485 377" stroke="#70d028" stroke-width="1.8"/>
<path d="M1485 307.4 Q1502.8 300.44 1529.5 283.04 M1485 307.4 Q1467.2 300.44 1440.5 283.04" stroke="#c8e830" stroke-width="1.2" opacity="0.7"/>
<path d="M1485 319.58 Q1502.8 312.62 1529.5 295.22 M1485 319.58 Q1467.2 312.62 1440.5 295.22" stroke="#c8e830" stroke-width="1.2" opacity="0.7"/>
<path d="M1485 331.76 Q1502.8 324.8 1529.5 307.4 M1485 331.76 Q1467.2 324.8 1440.5 307.4" stroke="#c8e830" stroke-width="1.2" opacity="0.7"/>
<path d="M1485 343.94 Q1502.8 336.98 1529.5 319.58 M1485 343.94 Q1467.2 336.98 1440.5 319.58" stroke="#c8e830" stroke-width="1.2" opacity="0.7"/>
<path d="M1485 356.12 Q1502.8 349.16 1529.5 331.76 M1485 356.12 Q1467.2 349.16 1440.5 331.76" stroke="#c8e830" stroke-width="1.2" opacity="0.7"/>
<path d="M1485 368.3 Q1502.8 361.34 1529.5 343.94 M1485 368.3 Q1467.2 361.34 1440.5 343.94" stroke="#c8e830" stroke-width="1.2" opacity="0.7"/>
</g>
<clipPath id="lrc3"><path d="M1467.7 418.3 C1499.7 416.8 1531.7 444.68 1531.7 480.16 C1531.7 517.48 1499.7 532 1467.7 532 C1435.7 532 1403.7 517.48 1403.7 480.16 C1403.7 444.68 1435.7 416.8 1467.7 418.3Z"/></clipPath>
<path d="M1467.7 418.3 C1499.7 416.8 1531.7 444.68 1531.7 480.16 C1531.7 517.48 1499.7 532 1467.7 532 C1435.7 532 1403.7 517.48 1403.7 480.16 C1403.7 444.68 1435.7 416.8 1467.7 418.3Z" fill="url(#lr2)" stroke="#58d820" stroke-width="1.3"/>
<g clip-path="url(#lrc3)" fill="none">
<path d="M1467.7 422.56 L1467.7 532" stroke="#70d028" stroke-width="1.8"/>
<path d="M1467.7 439.84 Q1493.3 430.62 1531.7 407.58 M1467.7 439.84 Q1442.1 430.62 1403.7 407.58" stroke="#c8e830" stroke-width="1.2" opacity="0.7"/>
<path d="M1467.7 455.97 Q1493.3 446.75 1531.7 423.71 M1467.7 455.97 Q1442.1 446.75 1403.7 423.71" stroke="#c8e830" stroke-width="1.2" opacity="0.7"/>
<path d="M1467.7 472.1 Q1493.3 462.88 1531.7 439.84 M1467.7 472.1 Q1442.1 462.88 1403.7 439.84" stroke="#c8e830" stroke-width="1.2" opacity="0.7"/>
<path d="M1467.7 488.22 Q1493.3 479.01 1531.7 455.97 M1467.7 488.22 Q1442.1 479.01 1403.7 455.97" stroke="#c8e830" stroke-width="1.2" opacity="0.7"/>
<path d="M1467.7 504.35 Q1493.3 495.14 1531.7 472.1 M1467.7 504.35 Q1442.1 495.14 1403.7 472.1" stroke="#c8e830" stroke-width="1.2" opacity="0.7"/>
<path d="M1467.7 520.48 Q1493.3 511.26 1531.7 488.22 M1467.7 520.48 Q1442.1 511.26 1403.7 488.22" stroke="#c8e830" stroke-width="1.2" opacity="0.7"/>
</g>
<clipPath id="lrc4"><path d="M1345.5 459.2 C1371.24 457.7 1378.5 470.99 1378.5 487.89 C1378.5 514.47 1369.26 524.8 1345.5 524.8 C1321.74 524.8 1312.5 514.47 1312.5 487.89 C1312.5 470.99 1319.76 457.7 1345.5 459.2Z"/></clipPath>
<path d="M1345.5 459.2 C1371.24 457.7 1378.5 470.99 1378.5 487.89 C1378.5 514.47 1369.26 524.8 1345.5 524.8 C1321.74 524.8 1312.5 514.47 1312.5 487.89 C1312.5 470.99 1319.76 457.7 1345.5 459.2Z" fill="url(#lr3)" stroke="#58d820" stroke-width="1.3"/>
<g clip-path="url(#lrc4)" fill="none">
<path d="M1345.5 461.06 L1345.5 524.8" stroke="#70d028" stroke-width="1.8"/>
<path d="M1345.5 471.12 Q1358.7 465.75 1378.5 452.33 M1345.5 471.12 Q1332.3 465.75 1312.5 452.33" stroke="#c8e830" stroke-width="1.2" opacity="0.7"/>
<path d="M1345.5 480.51 Q1358.7 475.15 1378.5 461.73 M1345.5 480.51 Q1332.3 475.15 1312.5 461.73" stroke="#c8e830" stroke-width="1.2" opacity="0.7"/>
<path d="M1345.5 489.91 Q1358.7 484.54 1378.5 471.12 M1345.5 489.91 Q1332.3 484.54 1312.5 471.12" stroke="#c8e830" stroke-width="1.2" opacity="0.7"/>
<path d="M1345.5 499.3 Q1358.7 493.93 1378.5 480.51 M1345.5 499.3 Q1332.3 493.93 1312.5 480.51" stroke="#c8e830" stroke-width="1.2" opacity="0.7"/>
<path d="M1345.5 508.7 Q1358.7 503.33 1378.5 489.91 M1345.5 508.7 Q1332.3 503.33 1312.5 489.91" stroke="#c8e830" stroke-width="1.2" opacity="0.7"/>
<path d="M1345.5 518.09 Q1358.7 512.72 1378.5 499.3 M1345.5 518.09 Q1332.3 512.72 1312.5 499.3" stroke="#c8e830" stroke-width="1.2" opacity="0.7"/>
</g>
<text x="1347" y="275" font-size="10" font-family="'Liberation Sans',sans-serif" fill="#fff" dominant-baseline="central" textLength="28" lengthAdjust="spacingAndGlyphs">area0</text>
<text x="1476" y="286.6" font-size="10" font-family="'Liberation Sans',sans-serif" fill="#fff" dominant-baseline="central" textLength="28" lengthAdjust="spacingAndGlyphs">area1</text>
<text x="1456.7" y="413.2" font-size="10" font-family="'Liberation Sans',sans-serif" fill="#fff" dominant-baseline="central" textLength="28" lengthAdjust="spacingAndGlyphs">area2</text>
<text x="1348.8" y="453.6" font-size="10" font-family="'Liberation Sans',sans-serif" fill="#fff" dominant-baseline="central" textLength="28" lengthAdjust="spacingAndGlyphs">area3</text>
</g>
<rect x="1600.3" y="233.3" width="46.2" height="17.5" fill="#fff" stroke="#7a7a7a" stroke-width="1"/>
<text x="1608" y="242.55" font-size="12" font-family="'Liberation Sans',sans-serif" fill="#111" dominant-baseline="central" textLength="29" lengthAdjust="spacingAndGlyphs">1353</text>
<rect x="1606.1" y="256.5" width="3.6" height="475.5" fill="#e6e6e6" stroke="#d8d8d8" stroke-width="1"/>
<rect x="1622.3" y="256.5" width="3.6" height="475.5" fill="#e6e6e6" stroke="#d8d8d8" stroke-width="1"/>
<rect x="1633.4" y="259" width="14.1" height="472.2" fill="url(#gv)"/>
<rect x="1616.8" y="256.5" width="14.2" height="9" fill="#0078d7"/>
<rect x="1600.3" y="723" width="14.1" height="9.3" fill="#0078d7"/>
<rect x="1654.5" y="161.1" width="568" height="573.9" fill="#fff" stroke="#d9d9d9" stroke-width="1"/>
<path d="M1723 161 L1723 145.5 L1786.5 145.5 L1786.5 161" fill="#f0f0f0" stroke="#d9d9d9" stroke-width="1"/>
<text x="1734.4" y="152.7" font-size="12.22" font-family="'Liberation Sans',sans-serif" fill="#222" dominant-baseline="central" textLength="43.6" lengthAdjust="spacingAndGlyphs">路径分析</text>
<path d="M1657 161.5 L1657 144.3 L1722 144.3 L1722 161.5" fill="#fff" stroke="#d9d9d9" stroke-width="1"/>
<text x="1666" y="152.35" font-size="12.22" font-family="'Liberation Sans',sans-serif" fill="#222" dominant-baseline="central" textLength="45" lengthAdjust="spacingAndGlyphs">选区分析</text>
<rect x="1659.5" y="185.3" width="370" height="308.2" fill="#fff" stroke="#d9d9d9" stroke-width="1"/>
<path d="M1660.5 185.5 L1660.5 165 L1732.9 165 L1732.9 185.5" fill="#fff" stroke="#d9d9d9" stroke-width="1"/>
<text x="1670" y="174.7" font-size="12.22" font-family="'Liberation Sans',sans-serif" fill="#222" dominant-baseline="central" textLength="52.5" lengthAdjust="spacingAndGlyphs">光谱曲线</text>
<rect x="1661.7" y="191.5" width="67.4" height="15.2" fill="#e1e1e1" stroke="#adadad" stroke-width="1"/>
<text x="1664" y="198.7" font-size="13.16" font-family="'Liberation Sans',sans-serif" fill="#333" dominant-baseline="central" textLength="63" lengthAdjust="spacingAndGlyphs">手动区分析</text>
<rect x="1739.2" y="191.5" width="66.3" height="15.2" fill="#e1e1e1" stroke="#adadad" stroke-width="1"/>
<text x="1741.5" y="198.7" font-size="13.16" font-family="'Liberation Sans',sans-serif" fill="#333" dominant-baseline="central" textLength="61.5" lengthAdjust="spacingAndGlyphs">自动区分析</text>
<rect x="1812.9" y="191.5" width="81.6" height="15.2" fill="#e5e5e5" stroke="#adadad" stroke-width="1"/>
<text x="1817" y="198.8" font-size="13.16" font-family="'Liberation Sans',sans-serif" fill="#222" dominant-baseline="central" textLength="46" lengthAdjust="spacingAndGlyphs">加权平滑</text>
<path d="M1880 197.1 L1884 201.1 L1888 197.1" fill="none" stroke="#444" stroke-width="1"/>
<rect x="1900.5" y="191.5" width="82.5" height="15.2" fill="#e5e5e5" stroke="#adadad" stroke-width="1"/>
<text x="1903" y="198.8" font-size="12.22" font-family="'Liberation Sans',sans-serif" fill="#222" dominant-baseline="central" textLength="45" lengthAdjust="spacingAndGlyphs">0nm融合</text>
<path d="M1969 197.1 L1973 201.1 L1977 197.1" fill="none" stroke="#444" stroke-width="1"/>
<rect x="1986.5" y="191.5" width="39.8" height="15.2" fill="#e1e1e1" stroke="#adadad" stroke-width="1"/>
<text x="1995" y="198.7" font-size="13.16" font-family="'Liberation Sans',sans-serif" fill="#333" dominant-baseline="central" textLength="24" lengthAdjust="spacingAndGlyphs">导出</text>
<rect x="1688.6" y="209.8" width="287.2" height="251" fill="#e1e1e1"/>
<line x1="1688.6" y1="210.6" x2="1975.8" y2="210.6" stroke="#a8a8a8" stroke-width="1.6"/>
<line x1="1689.3" y1="209.8" x2="1689.3" y2="460.8" stroke="#a8a8a8" stroke-width="1.6"/>
<line x1="1689" y1="215.5" x2="1975.8" y2="215.5" stroke="#555" stroke-width="1" stroke-dasharray="1.5,2"/>
<line x1="1689" y1="237.5" x2="1975.8" y2="237.5" stroke="#555" stroke-width="1" stroke-dasharray="1.5,2"/>
<line x1="1689" y1="259.5" x2="1975.8" y2="259.5" stroke="#555" stroke-width="1" stroke-dasharray="1.5,2"/>
<line x1="1689" y1="281.5" x2="1975.8" y2="281.5" stroke="#555" stroke-width="1" stroke-dasharray="1.5,2"/>
<line x1="1689" y1="303.5" x2="1975.8" y2="303.5" stroke="#555" stroke-width="1" stroke-dasharray="1.5,2"/>
<line x1="1689" y1="325.5" x2="1975.8" y2="325.5" stroke="#555" stroke-width="1" stroke-dasharray="1.5,2"/>
<line x1="1689" y1="347.5" x2="1975.8" y2="347.5" stroke="#555" stroke-width="1" stroke-dasharray="1.5,2"/>
<line x1="1689" y1="369.5" x2="1975.8" y2="369.5" stroke="#555" stroke-width="1" stroke-dasharray="1.5,2"/>
<line x1="1689" y1="391.5" x2="1975.8" y2="391.5" stroke="#555" stroke-width="1" stroke-dasharray="1.5,2"/>
<line x1="1689" y1="413.5" x2="1975.8" y2="413.5" stroke="#555" stroke-width="1" stroke-dasharray="1.5,2"/>
<line x1="1689" y1="435.5" x2="1975.8" y2="435.5" stroke="#555" stroke-width="1" stroke-dasharray="1.5,2"/>
<line x1="1689" y1="457.5" x2="1975.8" y2="457.5" stroke="#555" stroke-width="1" stroke-dasharray="1.5,2"/>
<line x1="1692" y1="211" x2="1692" y2="460.5" stroke="#555" stroke-width="1" stroke-dasharray="1.5,2"/>
<line x1="1781.6" y1="211" x2="1781.6" y2="460.5" stroke="#555" stroke-width="1" stroke-dasharray="1.5,2"/>
<line x1="1871.2" y1="211" x2="1871.2" y2="460.5" stroke="#555" stroke-width="1" stroke-dasharray="1.5,2"/>
<line x1="1960.8" y1="211" x2="1960.8" y2="460.5" stroke="#555" stroke-width="1" stroke-dasharray="1.5,2"/>
<g clip-path="url(#clipC2)">
<path d="M1692 417.9 C1692.75 419.73 1694.61 425.05 1696.48 428.9 C1698.35 432.75 1700.96 438.62 1703.2 441 C1705.44 443.38 1706.56 443.02 1709.92 443.2 C1713.28 443.38 1719.63 441.92 1723.36 442.1 C1727.09 442.28 1729.33 444.48 1732.32 444.3 C1735.31 444.12 1735.31 441.55 1741.28 441 C1747.25 440.45 1762.19 440.27 1768.16 441 C1774.13 441.73 1771.89 444.67 1777.12 445.4 C1782.35 446.13 1794.29 447.97 1799.52 445.4 C1804.75 442.83 1805.87 446.32 1808.48 430 C1811.09 413.68 1813.26 374.08 1815.2 347.5 C1817.14 320.92 1818.49 277.83 1820.13 270.5 C1821.77 263.17 1823.26 293.42 1825.06 303.5 C1826.85 313.58 1829.01 328.25 1830.88 331 C1832.75 333.75 1834.39 323.67 1836.26 320 C1838.12 316.33 1840.14 306.25 1842.08 309 C1844.02 311.75 1845.66 320.92 1847.9 336.5 C1850.14 352.08 1853.13 386.46 1855.52 402.5 C1857.91 418.54 1859.63 426.33 1862.24 432.75 C1864.85 439.17 1867.47 438.89 1871.2 441 C1874.93 443.11 1877.17 444.67 1884.64 445.4 C1892.11 446.13 1904.05 445.4 1916 445.4 C1927.95 445.4 1948.85 445.95 1956.32 445.4 C1963.79 444.85 1960.05 442.65 1960.8 442.1" stroke="#e8402a" stroke-width="2" fill="none" stroke-linejoin="round"/>
<path d="M1692 417.9 C1692.75 419.92 1694.61 425.97 1696.48 430 C1698.35 434.03 1700.96 439.53 1703.2 442.1 C1705.44 444.67 1706.56 444.85 1709.92 445.4 C1713.28 445.95 1718.88 445.4 1723.36 445.4 C1727.84 445.4 1733.44 446.13 1736.8 445.4 C1740.16 444.67 1738.29 441.73 1743.52 441 C1748.75 440.27 1762.56 440.27 1768.16 441 C1773.76 441.73 1771.89 444.67 1777.12 445.4 C1782.35 446.13 1794.29 447.05 1799.52 445.4 C1804.75 443.75 1805.87 447.23 1808.48 435.5 C1811.09 423.77 1813.26 394.25 1815.2 375 C1817.14 355.75 1818.49 325.5 1820.13 320 C1821.77 314.5 1823.26 336.5 1825.06 342 C1826.85 347.5 1829.01 351.62 1830.88 353 C1832.75 354.38 1834.39 351.62 1836.26 350.25 C1838.12 348.88 1840.14 342.46 1842.08 344.75 C1844.02 347.04 1845.66 351.62 1847.9 364 C1850.14 376.38 1853.13 406.62 1855.52 419 C1857.91 431.38 1859.63 434.12 1862.24 438.25 C1864.85 442.38 1867.47 442.56 1871.2 443.75 C1874.93 444.94 1877.17 445.12 1884.64 445.4 C1892.11 445.67 1904.05 445.4 1916 445.4 C1927.95 445.4 1948.85 445.95 1956.32 445.4 C1963.79 444.85 1960.05 442.65 1960.8 442.1" stroke="#30b860" stroke-width="2" fill="none" stroke-linejoin="round"/>
<path d="M1692 417.9 C1692.75 419.73 1694.61 425.23 1696.48 428.9 C1698.35 432.57 1700.96 437.88 1703.2 439.9 C1705.44 441.92 1706.56 440.82 1709.92 441 C1713.28 441.18 1720 440.27 1723.36 441 C1726.72 441.73 1727.84 445.4 1730.08 445.4 C1732.32 445.4 1730.45 441.73 1736.8 441 C1743.15 440.27 1761.44 440.27 1768.16 441 C1774.88 441.73 1771.89 444.67 1777.12 445.4 C1782.35 446.13 1794.29 447.51 1799.52 445.4 C1804.75 443.29 1805.87 446.32 1808.48 432.75 C1811.09 419.18 1813.26 385.54 1815.2 364 C1817.14 342.46 1818.49 308.08 1820.13 303.5 C1821.77 298.92 1823.26 328.71 1825.06 336.5 C1826.85 344.29 1829.01 349.33 1830.88 350.25 C1832.75 351.17 1834.39 344.29 1836.26 342 C1838.12 339.71 1840.14 333.75 1842.08 336.5 C1844.02 339.25 1845.66 345.67 1847.9 358.5 C1850.14 371.33 1853.13 400.67 1855.52 413.5 C1857.91 426.33 1859.25 430.92 1862.24 435.5 C1865.23 440.08 1869.71 439.35 1873.44 441 C1877.17 442.65 1877.55 444.67 1884.64 445.4 C1891.73 446.13 1904.05 445.4 1916 445.4 C1927.95 445.4 1948.85 445.95 1956.32 445.4 C1963.79 444.85 1960.05 442.65 1960.8 442.1" stroke="#3a8ee0" stroke-width="2" fill="none" stroke-linejoin="round"/>
<path d="M1692 414.6 C1692.75 416.71 1694.61 422.85 1696.48 427.25 C1698.35 431.65 1700.96 437.98 1703.2 441 C1705.44 444.02 1706.56 444.67 1709.92 445.4 C1713.28 446.13 1719.63 445.4 1723.36 445.4 C1727.09 445.4 1729.33 446.13 1732.32 445.4 C1735.31 444.67 1735.31 441.73 1741.28 441 C1747.25 440.27 1762.19 440.27 1768.16 441 C1774.13 441.73 1771.89 444.67 1777.12 445.4 C1782.35 446.13 1794.29 446.13 1799.52 445.4 C1804.75 444.67 1806.09 447.23 1808.48 441 C1810.87 434.77 1811.91 421.29 1813.86 408 C1815.8 394.71 1818.26 365.83 1820.13 361.25 C1821.99 356.67 1823.49 375.92 1825.06 380.5 C1826.62 385.08 1827.82 389.21 1829.54 388.75 C1831.25 388.29 1833.27 380.77 1835.36 377.75 C1837.45 374.73 1839.99 368.31 1842.08 370.6 C1844.17 372.89 1845.66 381.6 1847.9 391.5 C1850.14 401.4 1853.13 421.57 1855.52 430 C1857.91 438.43 1859.63 439.53 1862.24 442.1 C1864.85 444.67 1862.24 444.85 1871.2 445.4 C1880.16 445.95 1901.81 445.4 1916 445.4 C1930.19 445.4 1948.85 445.95 1956.32 445.4 C1963.79 444.85 1960.05 442.65 1960.8 442.1" stroke="#111" stroke-width="2.4" fill="none" stroke-linejoin="round"/>
</g>
<line x1="1686.2" y1="215.5" x2="1686.2" y2="458" stroke="#222" stroke-width="1.5"/>
<line x1="1680" y1="215.5" x2="1686.2" y2="215.5" stroke="#222" stroke-width="1.2"/>
<line x1="1683" y1="226.5" x2="1686.2" y2="226.5" stroke="#222" stroke-width="1.2"/>
<text x="1663" y="216" font-size="12" font-family="'Liberation Mono',monospace" fill="#222" dominant-baseline="central" textLength="12.4" lengthAdjust="spacingAndGlyphs">44</text>
<line x1="1680" y1="237.5" x2="1686.2" y2="237.5" stroke="#222" stroke-width="1.2"/>
<line x1="1683" y1="248.5" x2="1686.2" y2="248.5" stroke="#222" stroke-width="1.2"/>
<text x="1663" y="238" font-size="12" font-family="'Liberation Mono',monospace" fill="#222" dominant-baseline="central" textLength="12.4" lengthAdjust="spacingAndGlyphs">40</text>
<line x1="1680" y1="259.5" x2="1686.2" y2="259.5" stroke="#222" stroke-width="1.2"/>
<line x1="1683" y1="270.5" x2="1686.2" y2="270.5" stroke="#222" stroke-width="1.2"/>
<text x="1663" y="260" font-size="12" font-family="'Liberation Mono',monospace" fill="#222" dominant-baseline="central" textLength="12.4" lengthAdjust="spacingAndGlyphs">36</text>
<line x1="1680" y1="281.5" x2="1686.2" y2="281.5" stroke="#222" stroke-width="1.2"/>
<line x1="1683" y1="292.5" x2="1686.2" y2="292.5" stroke="#222" stroke-width="1.2"/>
<text x="1663" y="282" font-size="12" font-family="'Liberation Mono',monospace" fill="#222" dominant-baseline="central" textLength="12.4" lengthAdjust="spacingAndGlyphs">32</text>
<line x1="1680" y1="303.5" x2="1686.2" y2="303.5" stroke="#222" stroke-width="1.2"/>
<line x1="1683" y1="314.5" x2="1686.2" y2="314.5" stroke="#222" stroke-width="1.2"/>
<text x="1663" y="304" font-size="12" font-family="'Liberation Mono',monospace" fill="#222" dominant-baseline="central" textLength="12.4" lengthAdjust="spacingAndGlyphs">28</text>
<line x1="1680" y1="325.5" x2="1686.2" y2="325.5" stroke="#222" stroke-width="1.2"/>
<line x1="1683" y1="336.5" x2="1686.2" y2="336.5" stroke="#222" stroke-width="1.2"/>
<text x="1663" y="326" font-size="12" font-family="'Liberation Mono',monospace" fill="#222" dominant-baseline="central" textLength="12.4" lengthAdjust="spacingAndGlyphs">24</text>
<line x1="1680" y1="347.5" x2="1686.2" y2="347.5" stroke="#222" stroke-width="1.2"/>
<line x1="1683" y1="358.5" x2="1686.2" y2="358.5" stroke="#222" stroke-width="1.2"/>
<text x="1663" y="348" font-size="12" font-family="'Liberation Mono',monospace" fill="#222" dominant-baseline="central" textLength="12.4" lengthAdjust="spacingAndGlyphs">20</text>
<line x1="1680" y1="369.5" x2="1686.2" y2="369.5" stroke="#222" stroke-width="1.2"/>
<line x1="1683" y1="380.5" x2="1686.2" y2="380.5" stroke="#222" stroke-width="1.2"/>
<text x="1663" y="370" font-size="12" font-family="'Liberation Mono',monospace" fill="#222" dominant-baseline="central" textLength="12.4" lengthAdjust="spacingAndGlyphs">16</text>
<line x1="1680" y1="391.5" x2="1686.2" y2="391.5" stroke="#222" stroke-width="1.2"/>
<line x1="1683" y1="402.5" x2="1686.2" y2="402.5" stroke="#222" stroke-width="1.2"/>
<text x="1663" y="392" font-size="12" font-family="'Liberation Mono',monospace" fill="#222" dominant-baseline="central" textLength="12.4" lengthAdjust="spacingAndGlyphs">12</text>
<line x1="1680" y1="413.5" x2="1686.2" y2="413.5" stroke="#222" stroke-width="1.2"/>
<line x1="1683" y1="424.5" x2="1686.2" y2="424.5" stroke="#222" stroke-width="1.2"/>
<text x="1669.2" y="414" font-size="12" font-family="'Liberation Mono',monospace" fill="#222" dominant-baseline="central" textLength="6.2" lengthAdjust="spacingAndGlyphs">8</text>
<line x1="1680" y1="435.5" x2="1686.2" y2="435.5" stroke="#222" stroke-width="1.2"/>
<line x1="1683" y1="446.5" x2="1686.2" y2="446.5" stroke="#222" stroke-width="1.2"/>
<text x="1669.2" y="436" font-size="12" font-family="'Liberation Mono',monospace" fill="#222" dominant-baseline="central" textLength="6.2" lengthAdjust="spacingAndGlyphs">4</text>
<line x1="1680" y1="457.5" x2="1686.2" y2="457.5" stroke="#222" stroke-width="1.2"/>
<text x="1669.2" y="458" font-size="12" font-family="'Liberation Mono',monospace" fill="#222" dominant-baseline="central" textLength="6.2" lengthAdjust="spacingAndGlyphs">0</text>
<line x1="1691" y1="464.5" x2="1962" y2="464.5" stroke="#222" stroke-width="1.5"/>
<line x1="1692" y1="464.5" x2="1692" y2="470" stroke="#222" stroke-width="1.2"/>
<line x1="1714.4" y1="464.5" x2="1714.4" y2="467.5" stroke="#222" stroke-width="1.2"/>
<line x1="1736.8" y1="464.5" x2="1736.8" y2="467.5" stroke="#222" stroke-width="1.2"/>
<line x1="1759.2" y1="464.5" x2="1759.2" y2="467.5" stroke="#222" stroke-width="1.2"/>
<line x1="1781.6" y1="464.5" x2="1781.6" y2="470" stroke="#222" stroke-width="1.2"/>
<line x1="1804" y1="464.5" x2="1804" y2="467.5" stroke="#222" stroke-width="1.2"/>
<line x1="1826.4" y1="464.5" x2="1826.4" y2="467.5" stroke="#222" stroke-width="1.2"/>
<line x1="1848.8" y1="464.5" x2="1848.8" y2="467.5" stroke="#222" stroke-width="1.2"/>
<line x1="1871.2" y1="464.5" x2="1871.2" y2="470" stroke="#222" stroke-width="1.2"/>
<line x1="1893.6" y1="464.5" x2="1893.6" y2="467.5" stroke="#222" stroke-width="1.2"/>
<line x1="1916" y1="464.5" x2="1916" y2="467.5" stroke="#222" stroke-width="1.2"/>
<line x1="1938.4" y1="464.5" x2="1938.4" y2="467.5" stroke="#222" stroke-width="1.2"/>
<line x1="1960.8" y1="464.5" x2="1960.8" y2="470" stroke="#222" stroke-width="1.2"/>
<text x="1682.1" y="478.7" font-size="12" font-family="'Liberation Mono',monospace" fill="#222" dominant-baseline="central" textLength="19.8" lengthAdjust="spacingAndGlyphs">400</text>
<text x="1771.1" y="478.7" font-size="12" font-family="'Liberation Mono',monospace" fill="#222" dominant-baseline="central" textLength="19.8" lengthAdjust="spacingAndGlyphs">600</text>
<text x="1861.1" y="478.7" font-size="12" font-family="'Liberation Mono',monospace" fill="#222" dominant-baseline="central" textLength="19.8" lengthAdjust="spacingAndGlyphs">800</text>
<text x="1941.5" y="478.7" font-size="12" font-family="'Liberation Mono',monospace" fill="#222" dominant-baseline="central" textLength="33" lengthAdjust="spacingAndGlyphs">1,000</text>
<line x1="1983" y1="217.8" x2="1988.5" y2="217.8" stroke="#e8402a" stroke-width="2.2"/>
<text x="1992.8" y="218.3" font-size="12.5" font-family="'Liberation Mono',monospace" fill="#222" dominant-baseline="central" textLength="34.2" lengthAdjust="spacingAndGlyphs">Area0</text>
<line x1="1983" y1="239.5" x2="1988.5" y2="239.5" stroke="#30b860" stroke-width="2.2"/>
<text x="1992.8" y="240" font-size="12.5" font-family="'Liberation Mono',monospace" fill="#222" dominant-baseline="central" textLength="34.2" lengthAdjust="spacingAndGlyphs">Area1</text>
<line x1="1983" y1="261.2" x2="1988.5" y2="261.2" stroke="#3a8ee0" stroke-width="2.2"/>
<text x="1992.8" y="261.7" font-size="12.5" font-family="'Liberation Mono',monospace" fill="#222" dominant-baseline="central" textLength="34.2" lengthAdjust="spacingAndGlyphs">Area2</text>
<line x1="1983" y1="282.9" x2="1988.5" y2="282.9" stroke="#111" stroke-width="2.2"/>
<text x="1992.8" y="283.4" font-size="12.5" font-family="'Liberation Mono',monospace" fill="#222" dominant-baseline="central" textLength="34.2" lengthAdjust="spacingAndGlyphs">Area3</text>
<rect x="2033.5" y="181.7" width="186.5" height="144.8" fill="#fff" stroke="#d9d9d9" stroke-width="1"/>
<path d="M2083.9 181.7 L2083.9 169 L2111.5 169 L2111.5 181.7" fill="#f0f0f0" stroke="#d9d9d9" stroke-width="1"/>
<text x="2094" y="175.6" font-size="12.5" font-family="'Liberation Sans',sans-serif" fill="#222" dominant-baseline="central" textLength="8" lengthAdjust="spacingAndGlyphs">2</text>
<path d="M2112.5 181.7 L2112.5 169 L2140.3 169 L2140.3 181.7" fill="#f0f0f0" stroke="#d9d9d9" stroke-width="1"/>
<text x="2122.5" y="175.6" font-size="12.5" font-family="'Liberation Sans',sans-serif" fill="#222" dominant-baseline="central" textLength="8" lengthAdjust="spacingAndGlyphs">3</text>
<path d="M2035.7 182 L2035.7 167.9 L2082.9 167.9 L2082.9 182" fill="#fff" stroke="#d9d9d9" stroke-width="1"/>
<text x="2045" y="175.2" font-size="12.5" font-family="'Liberation Sans',sans-serif" fill="#222" dominant-baseline="central" textLength="29" lengthAdjust="spacingAndGlyphs">区域1</text>
<rect x="2038" y="189.5" width="64.7" height="13.8" fill="#e1e1e1" stroke="#adadad" stroke-width="1"/>
<text x="2049" y="195.7" font-size="13.16" font-family="'Liberation Sans',sans-serif" fill="#333" dominant-baseline="central" textLength="42" lengthAdjust="spacingAndGlyphs">全不选</text>
<rect x="2036.7" y="206.5" width="179.3" height="118.5" fill="#fff" stroke="#a0a0a0" stroke-width="1"/>
<text x="2054" y="219.8" font-size="12.5" font-family="'Liberation Sans',sans-serif" fill="#222" dominant-baseline="central" textLength="24" lengthAdjust="spacingAndGlyphs">复选</text>
<text x="2144" y="219.8" font-size="12.5" font-family="'Liberation Sans',sans-serif" fill="#222" dominant-baseline="central" textLength="24" lengthAdjust="spacingAndGlyphs">区域</text>
<line x1="2096.3" y1="209" x2="2096.3" y2="230" stroke="#e5e5e5" stroke-width="1"/>
<rect x="2058.7" y="232.6" width="10.8" height="11" fill="#fff" stroke="#333" stroke-width="1"/>
<path d="M2060.56 238.34 L2063.16 240.98 L2067.88 235.22" fill="none" stroke="#222" stroke-width="1.1"/>
<text x="2142" y="238.1" font-size="12.5" font-family="'Liberation Sans',sans-serif" fill="#111" dominant-baseline="central" textLength="28" lengthAdjust="spacingAndGlyphs">area0</text>
<rect x="2058.7" y="248.8" width="10.8" height="11" fill="#fff" stroke="#333" stroke-width="1"/>
<path d="M2060.56 254.54 L2063.16 257.18 L2067.88 251.42" fill="none" stroke="#222" stroke-width="1.1"/>
<text x="2142" y="254.3" font-size="12.5" font-family="'Liberation Sans',sans-serif" fill="#111" dominant-baseline="central" textLength="28" lengthAdjust="spacingAndGlyphs">area1</text>
<rect x="2058.7" y="265" width="10.8" height="11" fill="#fff" stroke="#333" stroke-width="1"/>
<path d="M2060.56 270.74 L2063.16 273.38 L2067.88 267.62" fill="none" stroke="#222" stroke-width="1.1"/>
<text x="2142" y="270.5" font-size="12.5" font-family="'Liberation Sans',sans-serif" fill="#111" dominant-baseline="central" textLength="28" lengthAdjust="spacingAndGlyphs">area2</text>
<rect x="2058.7" y="281.2" width="10.8" height="11" fill="#fff" stroke="#333" stroke-width="1"/>
<path d="M2060.56 286.94 L2063.16 289.58 L2067.88 283.82" fill="none" stroke="#222" stroke-width="1.1"/>
<text x="2142" y="286.7" font-size="12.5" font-family="'Liberation Sans',sans-serif" fill="#111" dominant-baseline="central" textLength="28" lengthAdjust="spacingAndGlyphs">area3</text>
<rect x="2033.5" y="348.8" width="186.5" height="145.2" fill="#fff" stroke="#d9d9d9" stroke-width="1"/>
<path d="M2034.4 348.8 L2034.4 334.1 L2077.4 334.1 L2077.4 348.8" fill="#fff" stroke="#d9d9d9" stroke-width="1"/>
<text x="2046" y="341.7" font-size="12.5" font-family="'Liberation Sans',sans-serif" fill="#222" dominant-baseline="central" textLength="20" lengthAdjust="spacingAndGlyphs">参数</text>
<text x="2035.2" y="363.5" font-size="13.16" font-family="'Liberation Sans',sans-serif" fill="#333" dominant-baseline="central" textLength="39" lengthAdjust="spacingAndGlyphs">参数组</text>
<rect x="2081.6" y="356.1" width="64.4" height="17" fill="#e5e5e5" stroke="#adadad" stroke-width="1"/>
<path d="M2129 362.6 L2133 366.6 L2137 362.6" fill="none" stroke="#444" stroke-width="1"/>
<rect x="2036.7" y="376.3" width="180.3" height="116.7" fill="#fff" stroke="#a0a0a0" stroke-width="1"/>
<rect x="2201.8" y="376.8" width="14.7" height="115.7" fill="#f0f0f0"/>
<rect x="2202.8" y="407" width="12.7" height="31.2" fill="#cdcdcd"/>
<path d="M2205.15 387.8 L2209.15 383.8 L2213.15 387.8" fill="none" stroke="#444" stroke-width="1.2"/>
<rect x="2096.3" y="400.1" width="10.7" height="11" fill="#fff" stroke="#333" stroke-width="1"/>
<path d="M2098.14 405.84 L2100.71 408.48 L2105.39 402.72" fill="none" stroke="#222" stroke-width="1.1"/>
<text x="2111.9" y="405.6" font-size="12.5" font-family="'Liberation Sans',sans-serif" fill="#111" dominant-baseline="central">CalibrationArea</text>
<rect x="2096.3" y="416.52" width="10.7" height="11" fill="#fff" stroke="#333" stroke-width="1"/>
<path d="M2098.14 422.26 L2100.71 424.9 L2105.39 419.14" fill="none" stroke="#222" stroke-width="1.1"/>
<text x="2111.9" y="422.02" font-size="12.5" font-family="'Liberation Sans',sans-serif" fill="#111" dominant-baseline="central">Circularity</text>
<rect x="2096.3" y="432.94" width="10.7" height="11" fill="#fff" stroke="#333" stroke-width="1"/>
<path d="M2098.14 438.68 L2100.71 441.32 L2105.39 435.56" fill="none" stroke="#222" stroke-width="1.1"/>
<text x="2111.9" y="438.44" font-size="12.5" font-family="'Liberation Sans',sans-serif" fill="#111" dominant-baseline="central">Aspectratio</text>
<rect x="2096.3" y="449.36" width="10.7" height="11" fill="#fff" stroke="#333" stroke-width="1"/>
<path d="M2098.14 455.1 L2100.71 457.74 L2105.39 451.98" fill="none" stroke="#222" stroke-width="1.1"/>
<text x="2111.9" y="454.86" font-size="12.5" font-family="'Liberation Sans',sans-serif" fill="#111" dominant-baseline="central">Solidity</text>
<rect x="2096.3" y="465.78" width="10.7" height="11" fill="#fff" stroke="#333" stroke-width="1"/>
<path d="M2098.14 471.52 L2100.71 474.16 L2105.39 468.4" fill="none" stroke="#222" stroke-width="1.1"/>
<text x="2111.9" y="471.28" font-size="12.5" font-family="'Liberation Sans',sans-serif" fill="#111" dominant-baseline="central">Roundness</text>
<rect x="2096.3" y="482.2" width="10.7" height="11" fill="#fff" stroke="#333" stroke-width="1"/>
<text x="2111.9" y="487.7" font-size="12.5" font-family="'Liberation Sans',sans-serif" fill="#111" dominant-baseline="central">F690/F740</text>
<text x="1666" y="508.9" font-size="14.1" font-family="'Liberation Sans',sans-serif" fill="#222" dominant-baseline="central" font-weight="bold" textLength="61.2" lengthAdjust="spacingAndGlyphs">波峰波长</text>
<text x="1680" y="535.6" font-size="14.1" font-family="'Liberation Sans',sans-serif" fill="#222" dominant-baseline="central" font-weight="bold" textLength="31" lengthAdjust="spacingAndGlyphs">及值</text>
<rect x="1662" y="577.7" width="65.8" height="33.6" fill="#e1e1e1" stroke="#adadad" stroke-width="1"/>
<text x="1667" y="586.2" font-size="12.69" font-family="'Liberation Sans',sans-serif" fill="#222" dominant-baseline="central" font-weight="bold" textLength="56" lengthAdjust="spacingAndGlyphs">导出波峰</text>
<text x="1681" y="601.2" font-size="12.69" font-family="'Liberation Sans',sans-serif" fill="#222" dominant-baseline="central" font-weight="bold" textLength="28" lengthAdjust="spacingAndGlyphs">数据</text>
<rect x="1731.4" y="497.2" width="488.6" height="128.8" fill="#fff" stroke="#a0a0a0" stroke-width="1"/>
<line x1="1745.7" y1="498" x2="1745.7" y2="611.5" stroke="#dcdcdc" stroke-width="1"/>
<line x1="1805" y1="498" x2="1805" y2="611.5" stroke="#dcdcdc" stroke-width="1"/>
<line x1="1954.5" y1="498" x2="1954.5" y2="611.5" stroke="#dcdcdc" stroke-width="1"/>
<line x1="2013.9" y1="498" x2="2013.9" y2="611.5" stroke="#dcdcdc" stroke-width="1"/>
<line x1="2163" y1="498" x2="2163" y2="611.5" stroke="#dcdcdc" stroke-width="1"/>
<line x1="1745.7" y1="543" x2="2204.5" y2="543" stroke="#dcdcdc" stroke-width="1"/>
<line x1="1745.7" y1="570.1" x2="2204.5" y2="570.1" stroke="#dcdcdc" stroke-width="1"/>
<line x1="1745.7" y1="598" x2="2204.5" y2="598" stroke="#dcdcdc" stroke-width="1"/>
<text x="1764" y="506.7" font-size="12.5" font-family="'Liberation Sans',sans-serif" fill="#111" dominant-baseline="central" font-weight="bold" textLength="23" lengthAdjust="spacingAndGlyphs">区域</text>
<text x="1853" y="506.7" font-size="12.5" font-family="'Liberation Sans',sans-serif" fill="#111" dominant-baseline="central" font-weight="bold" textLength="54" lengthAdjust="spacingAndGlyphs">&lt;490nm 1</text>
<text x="1970" y="506.7" font-size="12.5" font-family="'Liberation Sans',sans-serif" fill="#111" dominant-baseline="central" font-weight="bold" textLength="28" lengthAdjust="spacingAndGlyphs">峰值1</text>
<text x="2061" y="506.7" font-size="12.5" font-family="'Liberation Sans',sans-serif" fill="#111" dominant-baseline="central" font-weight="bold" textLength="55" lengthAdjust="spacingAndGlyphs">&lt;490nm 2</text>
<g clip-path="url(#clipT3)">
<text x="2178" y="506.7" font-size="12.5" font-family="'Liberation Sans',sans-serif" fill="#111" dominant-baseline="central" font-weight="bold" textLength="28" lengthAdjust="spacingAndGlyphs">峰值2</text>
<text x="1735.5" y="530.3" font-size="12.5" font-family="'Liberation Sans',sans-serif" fill="#222" dominant-baseline="central">1</text>
<text x="1809" y="529.3" font-size="12.5" font-family="'Liberation Sans',sans-serif" fill="#111" dominant-baseline="central">0</text>
<text x="1959" y="529.3" font-size="12.5" font-family="'Liberation Sans',sans-serif" fill="#111" dominant-baseline="central">0</text>
<text x="2018" y="529.3" font-size="12.5" font-family="'Liberation Sans',sans-serif" fill="#111" dominant-baseline="central">0</text>
<text x="2167" y="529.3" font-size="12.5" font-family="'Liberation Sans',sans-serif" fill="#111" dominant-baseline="central">0</text>
<text x="1735.5" y="558.15" font-size="12.5" font-family="'Liberation Sans',sans-serif" fill="#222" dominant-baseline="central">2</text>
<text x="1809" y="557.15" font-size="12.5" font-family="'Liberation Sans',sans-serif" fill="#111" dominant-baseline="central">0</text>
<text x="1959" y="557.15" font-size="12.5" font-family="'Liberation Sans',sans-serif" fill="#111" dominant-baseline="central">0</text>
<text x="2018" y="557.15" font-size="12.5" font-family="'Liberation Sans',sans-serif" fill="#111" dominant-baseline="central">0</text>
<text x="2167" y="557.15" font-size="12.5" font-family="'Liberation Sans',sans-serif" fill="#111" dominant-baseline="central">0</text>
<text x="1735.5" y="586" font-size="12.5" font-family="'Liberation Sans',sans-serif" fill="#222" dominant-baseline="central">3</text>
<text x="1809" y="585" font-size="12.5" font-family="'Liberation Sans',sans-serif" fill="#111" dominant-baseline="central">0</text>
<text x="1959" y="585" font-size="12.5" font-family="'Liberation Sans',sans-serif" fill="#111" dominant-baseline="central">0</text>
<text x="2018" y="585" font-size="12.5" font-family="'Liberation Sans',sans-serif" fill="#111" dominant-baseline="central">0</text>
<text x="2167" y="585" font-size="12.5" font-family="'Liberation Sans',sans-serif" fill="#111" dominant-baseline="central">0</text>
<text x="1735.5" y="613.85" font-size="12.5" font-family="'Liberation Sans',sans-serif" fill="#222" dominant-baseline="central">4</text>
<text x="1809" y="612.85" font-size="12.5" font-family="'Liberation Sans',sans-serif" fill="#111" dominant-baseline="central">0</text>
<text x="1959" y="612.85" font-size="12.5" font-family="'Liberation Sans',sans-serif" fill="#111" dominant-baseline="central">0</text>
<text x="2018" y="612.85" font-size="12.5" font-family="'Liberation Sans',sans-serif" fill="#111" dominant-baseline="central">0</text>
<text x="2167" y="612.85" font-size="12.5" font-family="'Liberation Sans',sans-serif" fill="#111" dominant-baseline="central">0</text>
</g>
<rect x="2204.5" y="497.5" width="15" height="114.2" fill="#f0f0f0"/>
<rect x="2205.5" y="513.4" width="13" height="61.2" fill="#cdcdcd"/>
<path d="M2208 508.5 L2212 504.5 L2216 508.5" fill="none" stroke="#444" stroke-width="1.2"/>
<path d="M2208 600.7 L2212 604.7 L2216 600.7" fill="none" stroke="#444" stroke-width="1.2"/>
<rect x="1731.5" y="611.7" width="488" height="14.1" fill="#f0f0f0"/>
<rect x="1745.7" y="612.7" width="105.7" height="12.1" fill="#cdcdcd"/>
<path d="M1741.5 614.75 L1737.5 618.75 L1741.5 622.75" fill="none" stroke="#444" stroke-width="1.2"/>
<path d="M2209.5 614.75 L2213.5 618.75 L2209.5 622.75" fill="none" stroke="#444" stroke-width="1.2"/>
<rect x="1662" y="636.3" width="65.8" height="33.2" fill="#e1e1e1" stroke="#adadad" stroke-width="1"/>
<text x="1667" y="644.7" font-size="12.69" font-family="'Liberation Sans',sans-serif" fill="#222" dominant-baseline="central" font-weight="bold" textLength="56" lengthAdjust="spacingAndGlyphs">手动选区</text>
<text x="1681" y="660.2" font-size="12.69" font-family="'Liberation Sans',sans-serif" fill="#222" dominant-baseline="central" font-weight="bold" textLength="28" lengthAdjust="spacingAndGlyphs">分析</text>
<rect x="1662" y="678.2" width="65.8" height="33.9" fill="#e1e1e1" stroke="#adadad" stroke-width="1"/>
<text x="1667" y="687.2" font-size="12.69" font-family="'Liberation Sans',sans-serif" fill="#222" dominant-baseline="central" font-weight="bold" textLength="56" lengthAdjust="spacingAndGlyphs">自动选区</text>
<text x="1681" y="702.2" font-size="12.69" font-family="'Liberation Sans',sans-serif" fill="#222" dominant-baseline="central" font-weight="bold" textLength="28" lengthAdjust="spacingAndGlyphs">分析</text>
<g clip-path="url(#clipRW)">
<rect x="1662" y="720.9" width="65.8" height="33.6" fill="#e1e1e1" stroke="#adadad" stroke-width="1"/>
<text x="1667" y="729.7" font-size="12.69" font-family="'Liberation Sans',sans-serif" fill="#222" dominant-baseline="central" font-weight="bold" textLength="56" lengthAdjust="spacingAndGlyphs">导出分析</text>
<text x="1681" y="745.2" font-size="12.69" font-family="'Liberation Sans',sans-serif" fill="#222" dominant-baseline="central" font-weight="bold" textLength="28" lengthAdjust="spacingAndGlyphs">数据</text>
<rect x="1731.4" y="634.5" width="488.6" height="125" fill="#fff" stroke="#a0a0a0" stroke-width="1"/>
<line x1="1745.7" y1="635" x2="1745.7" y2="735.5" stroke="#dcdcdc" stroke-width="1"/>
<line x1="1838.4" y1="635" x2="1838.4" y2="735.5" stroke="#dcdcdc" stroke-width="1"/>
<line x1="1931.9" y1="635" x2="1931.9" y2="735.5" stroke="#dcdcdc" stroke-width="1"/>
<line x1="2025" y1="635" x2="2025" y2="735.5" stroke="#dcdcdc" stroke-width="1"/>
<line x1="2118.5" y1="635" x2="2118.5" y2="735.5" stroke="#dcdcdc" stroke-width="1"/>
<line x1="1745.7" y1="683.3" x2="2204.5" y2="683.3" stroke="#dcdcdc" stroke-width="1"/>
<line x1="1745.7" y1="711.1" x2="2204.5" y2="711.1" stroke="#dcdcdc" stroke-width="1"/>
<text x="1792" y="646.2" font-size="12.5" font-family="'Liberation Sans',sans-serif" fill="#111" dominant-baseline="central" text-anchor="middle">PixelsNumber</text>
<text x="1885.5" y="646.2" font-size="12.5" font-family="'Liberation Sans',sans-serif" fill="#111" dominant-baseline="central" text-anchor="middle">CalibrationArea</text>
<text x="1979" y="646.2" font-size="12.5" font-family="'Liberation Sans',sans-serif" fill="#111" dominant-baseline="central" text-anchor="middle">Circularity</text>
<text x="2072" y="646.2" font-size="12.5" font-family="'Liberation Sans',sans-serif" fill="#111" dominant-baseline="central" text-anchor="middle">Aspectratio</text>
<text x="2166" y="646.2" font-size="12.5" font-family="'Liberation Sans',sans-serif" fill="#111" dominant-baseline="central" text-anchor="middle">Solidity</text>
<text x="1735.5" y="671.3" font-size="12.5" font-family="'Liberation Sans',sans-serif" fill="#222" dominant-baseline="central">2</text>
<text x="1748" y="670.3" font-size="12.5" font-family="'Liberation Sans',sans-serif" fill="#111" dominant-baseline="central">56014</text>
<text x="1841.5" y="670.3" font-size="12.5" font-family="'Liberation Sans',sans-serif" fill="#111" dominant-baseline="central">22.406</text>
<text x="1934.5" y="670.3" font-size="12.5" font-family="'Liberation Sans',sans-serif" fill="#111" dominant-baseline="central">0.9211</text>
<text x="2028" y="670.3" font-size="12.5" font-family="'Liberation Sans',sans-serif" fill="#111" dominant-baseline="central">0.9211</text>
<text x="2121.5" y="670.3" font-size="12.5" font-family="'Liberation Sans',sans-serif" fill="#111" dominant-baseline="central">0.9211</text>
<text x="1735.5" y="698.55" font-size="12.5" font-family="'Liberation Sans',sans-serif" fill="#222" dominant-baseline="central">3</text>
<text x="1748" y="697.55" font-size="12.5" font-family="'Liberation Sans',sans-serif" fill="#111" dominant-baseline="central">112973</text>
<text x="1841.5" y="697.55" font-size="12.5" font-family="'Liberation Sans',sans-serif" fill="#111" dominant-baseline="central">45.189</text>
<text x="1934.5" y="697.55" font-size="12.5" font-family="'Liberation Sans',sans-serif" fill="#111" dominant-baseline="central">0.9342</text>
<text x="2028" y="697.55" font-size="12.5" font-family="'Liberation Sans',sans-serif" fill="#111" dominant-baseline="central">0.9342</text>
<text x="2121.5" y="697.55" font-size="12.5" font-family="'Liberation Sans',sans-serif" fill="#111" dominant-baseline="central">0.9342</text>
<text x="1735.5" y="725.8" font-size="12.5" font-family="'Liberation Sans',sans-serif" fill="#222" dominant-baseline="central">4</text>
<text x="1748" y="724.8" font-size="12.5" font-family="'Liberation Sans',sans-serif" fill="#111" dominant-baseline="central">35908</text>
<text x="1841.5" y="724.8" font-size="12.5" font-family="'Liberation Sans',sans-serif" fill="#111" dominant-baseline="central">14.363</text>
<text x="1934.5" y="724.8" font-size="12.5" font-family="'Liberation Sans',sans-serif" fill="#111" dominant-baseline="central">0.9188</text>
<text x="2028" y="724.8" font-size="12.5" font-family="'Liberation Sans',sans-serif" fill="#111" dominant-baseline="central">0.9188</text>
<text x="2121.5" y="724.8" font-size="12.5" font-family="'Liberation Sans',sans-serif" fill="#111" dominant-baseline="central">0.9188</text>
<rect x="2204.5" y="635" width="15" height="125" fill="#f0f0f0"/>
<rect x="2205.5" y="669" width="13" height="54" fill="#cdcdcd"/>
<path d="M2208 646 L2212 642 L2216 646" fill="none" stroke="#444" stroke-width="1.2"/>
<path d="M2208 728 L2212 732 L2216 728" fill="none" stroke="#444" stroke-width="1.2"/>
</g>
<rect x="1654" y="735.5" width="569" height="0.7" fill="#d9d9d9"/>
<rect x="2219" y="749" width="1.5" height="1.5" fill="#b0b0b0"/>
<rect x="2222" y="749" width="1.5" height="1.5" fill="#b0b0b0"/>
<rect x="2225" y="749" width="1.5" height="1.5" fill="#b0b0b0"/>
<rect x="2222" y="746" width="1.5" height="1.5" fill="#b0b0b0"/>
<rect x="2225" y="746" width="1.5" height="1.5" fill="#b0b0b0"/>
<rect x="2225" y="743" width="1.5" height="1.5" fill="#b0b0b0"/>
<defs>
<g id="wm">
<g transform="rotate(19.6)">
<line x1="-25" y1="-46" x2="417" y2="-46" stroke="rgb(80,165,125)" stroke-opacity="0.42" stroke-width="5.5"/>
<path stroke="rgb(105,195,95)" stroke-opacity="0.40" stroke-width="2.6" fill="none" d="M40 -112 L40 -95 Q40 -83 20 -83 L-4 -83 Q-25 -83 -25 -119 Q-25 -155 8 -155 Q41 -155 41 -125 L41 -125 L14 -125 Q6 -125 6 -119 Q6 -112 14 -112 Z"/>
<path stroke="rgb(105,195,95)" stroke-opacity="0.40" stroke-width="2.6" fill="none" d="M20 -83 L40 -83"/>
<path stroke="rgb(105,195,95)" stroke-opacity="0.40" stroke-width="2.6" fill="none" d="M84 -126 A31 31 0 1 0 86 -84 L74 -92 A17 17 0 1 1 72 -115 Z"/>
<circle stroke="rgb(105,195,95)" stroke-opacity="0.40" stroke-width="2.6" fill="none" cx="121" cy="-106" r="33"/>
<circle stroke="rgb(105,195,95)" stroke-opacity="0.40" stroke-width="2.6" fill="none" cx="121" cy="-106" r="11"/>
<path stroke="rgb(105,195,95)" stroke-opacity="0.40" stroke-width="2.6" fill="none" d="M160 -170 L234 -170 L234 -147 L209 -147 L209 -76 L185 -76 L185 -147 L160 -147 Z"/>
<path stroke="rgb(105,195,95)" stroke-opacity="0.40" stroke-width="2.6" fill="none" d="M292 -92 A32 32 0 1 1 295 -108 L262 -108 A9 9 0 1 1 266 -100 L292 -92"/>
<path stroke="rgb(105,195,95)" stroke-opacity="0.40" stroke-width="2.6" fill="none" d="M348 -122 A31 31 0 1 0 350 -86 L338 -94 A16 16 0 1 1 336 -116 Z"/>
<circle stroke="rgb(105,195,95)" stroke-opacity="0.40" stroke-width="2.6" fill="none" cx="318" cy="-104" r="8"/>
<path stroke="rgb(105,195,95)" stroke-opacity="0.40" stroke-width="2.6" fill="none" d="M340 -166 L357 -166 L357 -128 Q366 -136 377 -136 Q398 -136 398 -112 L398 -74 L381 -74 L381 -110 Q381 -120 371 -120 Q357 -120 357 -108 L357 -74 L340 -74 Z"/>
<circle stroke="rgb(105,195,95)" stroke-opacity="0.40" stroke-width="2.6" fill="none" cx="407" cy="-144" r="11" stroke-width="2"/>
<text x="407" y="-143.5" font-size="13" text-anchor="middle" dominant-baseline="central" font-family="'Liberation Sans',sans-serif" fill="none" stroke="rgb(105,195,95)" stroke-opacity="0.40" stroke-width="1.2">R</text>
</g>
<text x="0" y="0" font-size="48" font-family="'Liberation Sans',sans-serif" fill="rgb(95,85,85)" stroke="rgb(95,85,85)" stroke-width="1.8" stroke-linejoin="round" opacity="0.37" text-anchor="middle" dominant-baseline="central" transform="translate(0 0) rotate(20) scale(1.12 0.92) translate(-0 -0)">易</text>
<text x="61.3" y="21.8" font-size="48" font-family="'Liberation Sans',sans-serif" fill="rgb(95,85,85)" stroke="rgb(95,85,85)" stroke-width="1.8" stroke-linejoin="round" opacity="0.37" text-anchor="middle" dominant-baseline="central" transform="translate(61.3 21.8) rotate(20) scale(1.12 0.92) translate(-61.3 -21.8)">科</text>
<text x="122.6" y="43.6" font-size="48" font-family="'Liberation Sans',sans-serif" fill="rgb(95,85,85)" stroke="rgb(95,85,85)" stroke-width="1.8" stroke-linejoin="round" opacity="0.37" text-anchor="middle" dominant-baseline="central" transform="translate(122.6 43.6) rotate(20) scale(1.12 0.92) translate(-122.6 -43.6)">泰</text>
<text x="183.9" y="65.4" font-size="48" font-family="'Liberation Sans',sans-serif" fill="rgb(95,85,85)" stroke="rgb(95,85,85)" stroke-width="1.8" stroke-linejoin="round" opacity="0.37" text-anchor="middle" dominant-baseline="central" transform="translate(183.9 65.4) rotate(20) scale(1.12 0.92) translate(-183.9 -65.4)">生</text>
<text x="245.2" y="87.2" font-size="48" font-family="'Liberation Sans',sans-serif" fill="rgb(95,85,85)" stroke="rgb(95,85,85)" stroke-width="1.8" stroke-linejoin="round" opacity="0.37" text-anchor="middle" dominant-baseline="central" transform="translate(245.2 87.2) rotate(20) scale(1.12 0.92) translate(-245.2 -87.2)">态</text>
<text x="306.5" y="109" font-size="48" font-family="'Liberation Sans',sans-serif" fill="rgb(95,85,85)" stroke="rgb(95,85,85)" stroke-width="1.8" stroke-linejoin="round" opacity="0.37" text-anchor="middle" dominant-baseline="central" transform="translate(306.5 109) rotate(20) scale(1.12 0.92) translate(-306.5 -109)">技</text>
<text x="367.8" y="130.8" font-size="48" font-family="'Liberation Sans',sans-serif" fill="rgb(95,85,85)" stroke="rgb(95,85,85)" stroke-width="1.8" stroke-linejoin="round" opacity="0.37" text-anchor="middle" dominant-baseline="central" transform="translate(367.8 130.8) rotate(20) scale(1.12 0.92) translate(-367.8 -130.8)">术</text>
</g>
</defs>
<use href="#wm" transform="translate(1751 31.5)"/>
<use href="#wm" transform="translate(796 272)"/>
<use href="#wm" transform="translate(-157 506)"/>
<use href="#wm" transform="translate(1568 545)"/>
<use href="#wm" transform="translate(614 786)"/>
</svg></body></html>
